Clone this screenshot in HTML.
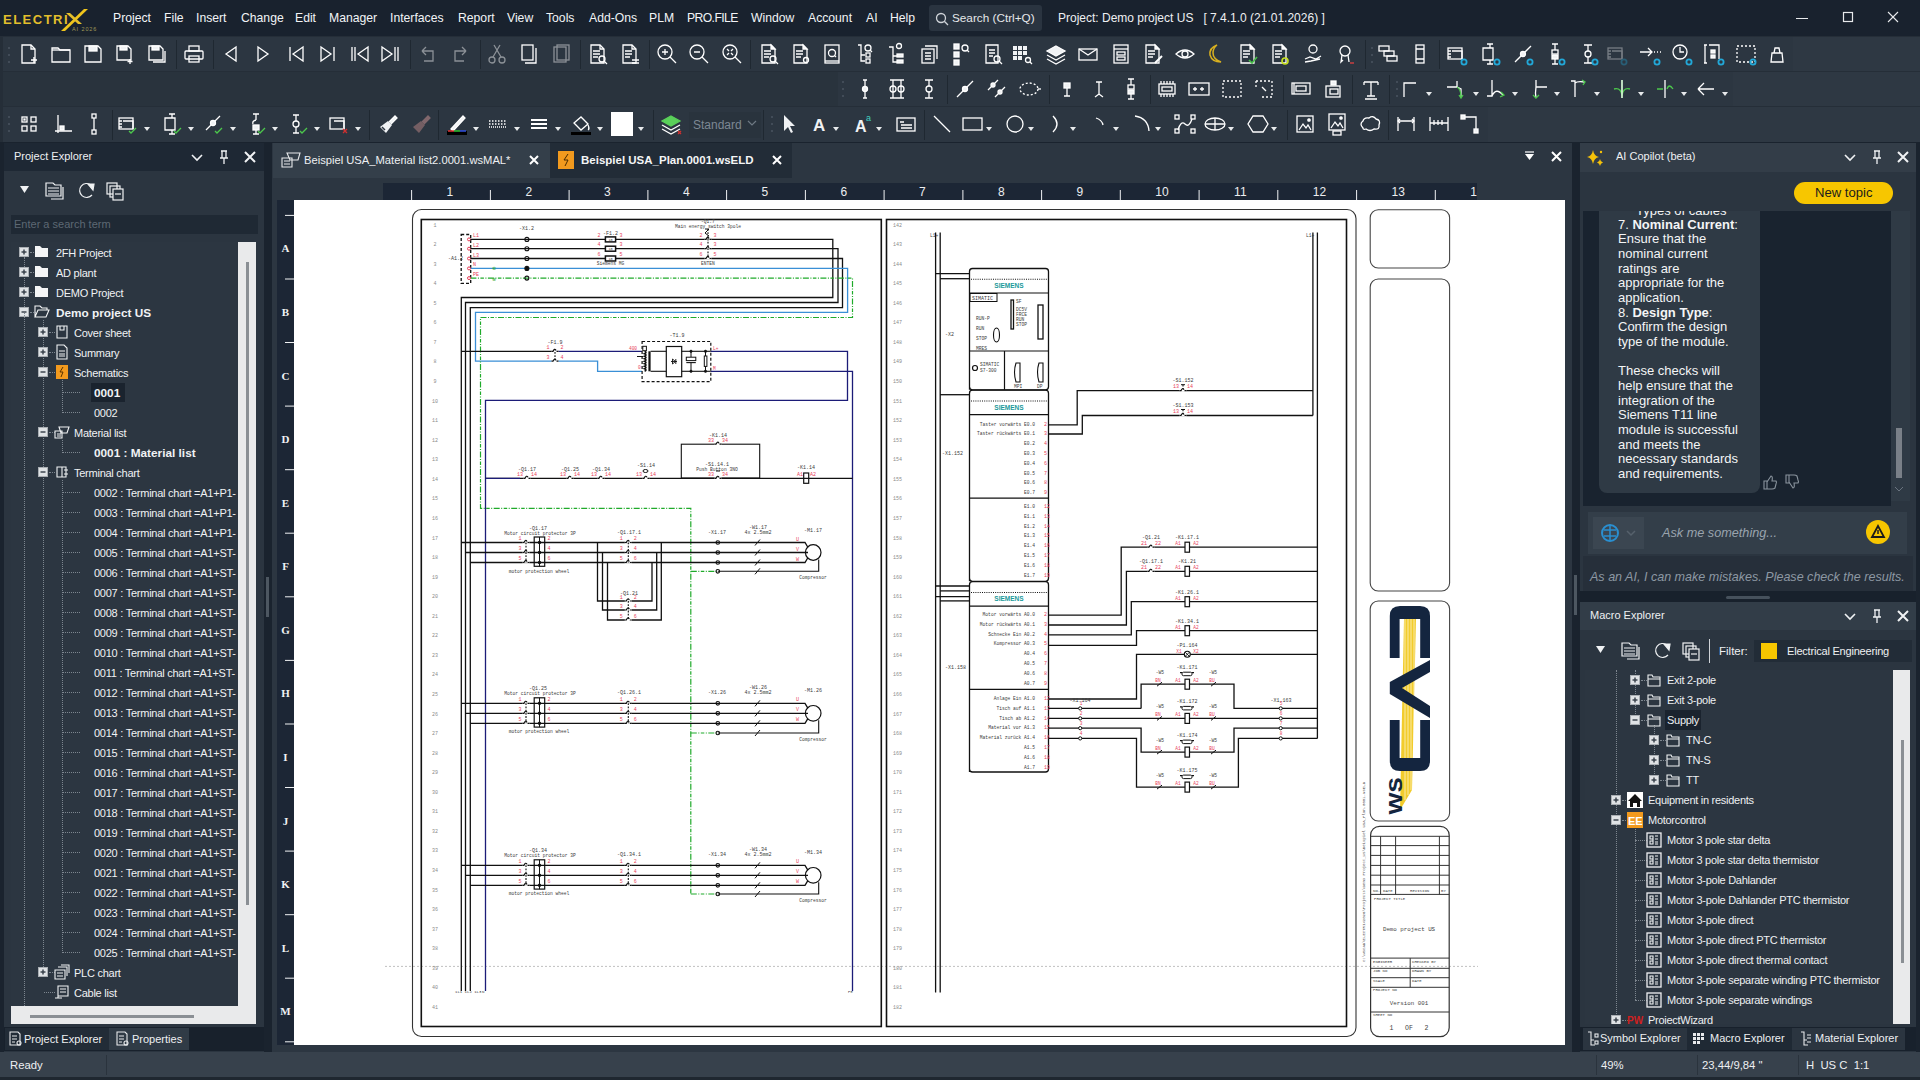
<!DOCTYPE html><html><head><meta charset="utf-8"><style>
*{margin:0;padding:0;box-sizing:border-box}
html,body{width:1920px;height:1080px;overflow:hidden;background:#2b3540;font-family:"Liberation Sans",sans-serif;color:#fff}
.a{position:absolute}
.t{position:absolute;white-space:nowrap;font-size:13px;line-height:16px}
svg{position:absolute;overflow:visible}
</style></head><body><div class="a" style="left:0px;top:0px;width:1920px;height:36px;background:#19222e;"></div><div class="t" style="left:113px;top:10.07px;font-size:12.2px;color:#f2f4f6;">Project</div><div class="t" style="left:164px;top:10.07px;font-size:12.2px;color:#f2f4f6;">File</div><div class="t" style="left:196px;top:10.07px;font-size:12.2px;color:#f2f4f6;">Insert</div><div class="t" style="left:241px;top:10.07px;font-size:12.2px;color:#f2f4f6;">Change</div><div class="t" style="left:295px;top:10.07px;font-size:12.2px;color:#f2f4f6;">Edit</div><div class="t" style="left:329px;top:10.07px;font-size:12.2px;color:#f2f4f6;">Manager</div><div class="t" style="left:390px;top:10.07px;font-size:12.2px;color:#f2f4f6;">Interfaces</div><div class="t" style="left:458px;top:10.07px;font-size:12.2px;color:#f2f4f6;">Report</div><div class="t" style="left:507px;top:10.07px;font-size:12.2px;color:#f2f4f6;">View</div><div class="t" style="left:546px;top:10.07px;font-size:12.2px;color:#f2f4f6;">Tools</div><div class="t" style="left:589px;top:10.07px;font-size:12.2px;color:#f2f4f6;">Add-Ons</div><div class="t" style="left:649px;top:10.07px;font-size:12.2px;color:#f2f4f6;">PLM</div><div class="t" style="left:687px;top:10.07px;font-size:12.2px;color:#f2f4f6;letter-spacing:-0.6px">PRO.FILE</div><div class="t" style="left:751px;top:10.07px;font-size:12.2px;color:#f2f4f6;">Window</div><div class="t" style="left:808px;top:10.07px;font-size:12.2px;color:#f2f4f6;">Account</div><div class="t" style="left:866px;top:10.07px;font-size:12.2px;color:#f2f4f6;">AI</div><div class="t" style="left:890px;top:10.07px;font-size:12.2px;color:#f2f4f6;">Help</div><div class="a" style="left:929px;top:5px;width:113px;height:26px;background:#2a3440;border-radius:3px"></div><div class="t" style="left:952px;top:10.23px;font-size:11.75px;color:#e6e8ea;">Search (Ctrl+Q)</div><svg style="left:935px;top:12px" width="14" height="14"><circle cx="6" cy="6" r="4.5" fill="none" stroke="#cfd3d8" stroke-width="1.3"/><line x1="9.3" y1="9.3" x2="13" y2="13" stroke="#cfd3d8" stroke-width="1.3"/></svg><div class="t" style="left:1058px;top:10.34px;font-size:12px;color:#eef0f2;">Project: Demo project US &nbsp;&nbsp;[ 7.4.1.0 (21.01.2026) ]</div><svg style="left:1796px;top:12px" width="120" height="14"><line x1="0" y1="6.5" x2="12" y2="6.5" stroke="#e8eaec" stroke-width="1"/><rect x="47.5" y="0.5" width="9" height="9" fill="none" stroke="#e8eaec" stroke-width="1.2"/><line x1="92" y1="0" x2="102" y2="10" stroke="#e8eaec" stroke-width="1.1"/><line x1="102" y1="0" x2="92" y2="10" stroke="#e8eaec" stroke-width="1.1"/></svg><svg style="left:0px;top:0px" width="110" height="36"><text x="3" y="24" font-family="Liberation Sans" font-weight="bold" font-size="13" fill="#e2be2c" letter-spacing="1.5">ELECTRI</text><path d="M61 31 L84 9 L88 9 L65 31 Z" fill="#f0c51c"/><path d="M66 13 L70 13 L82 24 L78 24 Z" fill="#e6c02a"/><text x="72" y="31" font-family="Liberation Sans" font-size="5.5" fill="#a09a58" letter-spacing="0.9">AI 2026</text></svg><div class="a" style="left:0px;top:36px;width:1920px;height:106px;background:#252e38;"></div><div class="a" style="left:3px;top:37px;width:1790px;height:34px;background:#2c3641;"></div><div class="a" style="left:1793px;top:37px;width:127px;height:34px;background:#2e3843;"></div><div class="a" style="left:3px;top:72px;width:835px;height:34px;background:#29333d;"></div><div class="a" style="left:838px;top:72px;width:895px;height:34px;background:#2c3641;"></div><div class="a" style="left:1733px;top:72px;width:187px;height:34px;background:#2e3843;"></div><div class="a" style="left:3px;top:107px;width:1485px;height:35px;background:#2c3641;"></div><div class="a" style="left:1488px;top:107px;width:432px;height:35px;background:#2e3843;"></div><svg style="left:7px;top:45px" width="4" height="20"><circle cx="2" cy="3" r="1" fill="#4a5560"/><circle cx="2" cy="10" r="1" fill="#4a5560"/><circle cx="2" cy="17" r="1" fill="#4a5560"/></svg><svg style="left:1370px;top:45px" width="4" height="20"><circle cx="2" cy="3" r="1" fill="#4a5560"/><circle cx="2" cy="10" r="1" fill="#4a5560"/><circle cx="2" cy="17" r="1" fill="#4a5560"/></svg><svg style="left:17px;top:42px;opacity:1" width="24" height="24" viewBox="0 0 24 24" fill="none" stroke="#ffffff" stroke-width="1.3"><path d="M5 3 H14 L18 7 V21 H5 Z"/><path d="M14 3 V7 H18"/><path d="M17 15 V21 M14 18 H20" stroke-width="1.4"/></svg><svg style="left:49px;top:42px;opacity:1" width="24" height="24" viewBox="0 0 24 24" fill="none" stroke="#ffffff" stroke-width="1.3"><path d="M3 6 H9 L11 8 H21 V20 H3 Z"/><path d="M3 8 H21"/></svg><svg style="left:81px;top:42px;opacity:1" width="24" height="24" viewBox="0 0 24 24" fill="none" stroke="#ffffff" stroke-width="1.3"><path d="M4 4 H17 L20 7 V20 H4 Z"/><rect x="8" y="4" width="8" height="5" fill="#f0f2f4"/></svg><svg style="left:113px;top:42px;opacity:1" width="24" height="24" viewBox="0 0 24 24" fill="none" stroke="#ffffff" stroke-width="1.3"><path d="M4 4 H15 L18 7 V18 H4 Z"/><rect x="7" y="4" width="7" height="4" fill="#f0f2f4"/><path d="M17 17 V22 M14.5 19.5 H19.5"/></svg><svg style="left:145px;top:42px;opacity:1" width="24" height="24" viewBox="0 0 24 24" fill="none" stroke="#ffffff" stroke-width="1.3"><path d="M4 4 H15 L18 7 V18 H4 Z"/><rect x="7" y="4" width="7" height="4" fill="#f0f2f4"/><path d="M20 9 V20 H8"/></svg><div class="a" style="left:176px;top:40px;width:1px;height:29px;background:#1f2831;"></div><svg style="left:182px;top:42px;opacity:1" width="24" height="24" viewBox="0 0 24 24" fill="none" stroke="#ffffff" stroke-width="1.3"><rect x="3" y="9" width="18" height="8" rx="1"/><rect x="7" y="4" width="10" height="5"/><rect x="7" y="14" width="10" height="6"/></svg><div class="a" style="left:213px;top:40px;width:1px;height:29px;background:#1f2831;"></div><svg style="left:219px;top:42px;opacity:1" width="24" height="24" viewBox="0 0 24 24" fill="none" stroke="#ffffff" stroke-width="1.3"><path d="M17 5 L7 12 L17 19 Z"/></svg><svg style="left:251px;top:42px;opacity:1" width="24" height="24" viewBox="0 0 24 24" fill="none" stroke="#ffffff" stroke-width="1.3"><path d="M7 5 L17 12 L7 19 Z"/></svg><svg style="left:284px;top:42px;opacity:1" width="24" height="24" viewBox="0 0 24 24" fill="none" stroke="#ffffff" stroke-width="1.3"><path d="M19 5 L9 12 L19 19 Z M6 5 V19"/></svg><svg style="left:316px;top:42px;opacity:1" width="24" height="24" viewBox="0 0 24 24" fill="none" stroke="#ffffff" stroke-width="1.3"><path d="M5 5 L15 12 L5 19 Z M18 5 V19"/></svg><svg style="left:347px;top:42px;opacity:1" width="24" height="24" viewBox="0 0 24 24" fill="none" stroke="#ffffff" stroke-width="1.3"><path d="M21 5 L11 12 L21 19 Z M5 5 V19 M8 5 V19"/></svg><svg style="left:379px;top:42px;opacity:1" width="24" height="24" viewBox="0 0 24 24" fill="none" stroke="#ffffff" stroke-width="1.3"><path d="M3 5 L13 12 L3 19 Z M16 5 V19 M19 5 V19"/></svg><div class="a" style="left:410px;top:40px;width:1px;height:29px;background:#1f2831;"></div><svg style="left:416px;top:42px;opacity:0.45" width="24" height="24" viewBox="0 0 24 24" fill="none" stroke="#ffffff" stroke-width="1.3"><path d="M6 9 L10 5 M6 9 L10 13 M6 9 H17 V19 H8"/></svg><svg style="left:448px;top:42px;opacity:0.45" width="24" height="24" viewBox="0 0 24 24" fill="none" stroke="#ffffff" stroke-width="1.3"><path d="M18 9 L14 5 M18 9 L14 13 M18 9 H7 V19 H16"/></svg><div class="a" style="left:480px;top:40px;width:1px;height:29px;background:#1f2831;"></div><svg style="left:485px;top:42px;opacity:0.45" width="24" height="24" viewBox="0 0 24 24" fill="none" stroke="#ffffff" stroke-width="1.3"><circle cx="7" cy="18" r="3"/><circle cx="17" cy="18" r="3"/><path d="M8 15 L15 3 M16 15 L9 3"/></svg><svg style="left:517px;top:42px;opacity:1" width="24" height="24" viewBox="0 0 24 24" fill="none" stroke="#ffffff" stroke-width="1.3"><rect x="5" y="3" width="11" height="15"/><path d="M19 6 V21 H8"/></svg><svg style="left:549px;top:42px;opacity:0.45" width="24" height="24" viewBox="0 0 24 24" fill="none" stroke="#ffffff" stroke-width="1.3"><rect x="5" y="5" width="12" height="15"/><rect x="8" y="3" width="12" height="15"/></svg><div class="a" style="left:580px;top:40px;width:1px;height:29px;background:#1f2831;"></div><svg style="left:586px;top:42px;opacity:1" width="24" height="24" viewBox="0 0 24 24" fill="none" stroke="#ffffff" stroke-width="1.3"><path d="M5 3 H14 L18 7 V21 H5 Z"/><path d="M14 3 V7 H18"/><path d="M7 9 H14 M7 12 H14 M7 15 H12"/><circle cx="16" cy="17" r="3"/><path d="M18 19 L21 22"/></svg><svg style="left:618px;top:42px;opacity:1" width="24" height="24" viewBox="0 0 24 24" fill="none" stroke="#ffffff" stroke-width="1.3"><path d="M5 3 H14 L18 7 V21 H5 Z"/><path d="M14 3 V7 H18"/><path d="M7 9 H14 M7 12 H14 M7 15 H12"/><path d="M14 18 H21 M14 21 H21"/></svg><div class="a" style="left:649px;top:40px;width:1px;height:29px;background:#1f2831;"></div><svg style="left:655px;top:42px;opacity:1" width="24" height="24" viewBox="0 0 24 24" fill="none" stroke="#ffffff" stroke-width="1.3"><circle cx="10" cy="10" r="7"/><path d="M15 15 L21 21 M7 10 H13 M10 7 V13"/></svg><svg style="left:687px;top:42px;opacity:1" width="24" height="24" viewBox="0 0 24 24" fill="none" stroke="#ffffff" stroke-width="1.3"><circle cx="10" cy="10" r="7"/><path d="M15 15 L21 21 M7 10 H13"/></svg><svg style="left:720px;top:42px;opacity:1" width="24" height="24" viewBox="0 0 24 24" fill="none" stroke="#ffffff" stroke-width="1.3"><circle cx="10" cy="10" r="7"/><path d="M15 15 L21 21 M7 7 L9 9 M13 7 L11 9 M7 13 L9 11 M13 13 L11 11"/></svg><div class="a" style="left:750px;top:40px;width:1px;height:29px;background:#1f2831;"></div><svg style="left:757px;top:42px;opacity:1" width="24" height="24" viewBox="0 0 24 24" fill="none" stroke="#ffffff" stroke-width="1.3"><path d="M5 3 H14 L18 7 V21 H5 Z"/><path d="M14 3 L18 7 H14 Z" fill="#f0f2f4"/><path d="M7 9 H14 M7 12 H14 M7 15 H12"/><circle cx="16" cy="17" r="3"/><path d="M18 19 L21 22"/></svg><svg style="left:789px;top:42px;opacity:1" width="24" height="24" viewBox="0 0 24 24" fill="none" stroke="#ffffff" stroke-width="1.3"><path d="M5 3 H14 L18 7 V21 H5 Z"/><path d="M14 3 L18 7 H14 Z" fill="#f0f2f4"/><path d="M7 9 H14 M7 12 H14 M7 15 H12"/><circle cx="17" cy="18" r="2.5"/></svg><svg style="left:820px;top:42px;opacity:1" width="24" height="24" viewBox="0 0 24 24" fill="none" stroke="#ffffff" stroke-width="1.3"><rect x="5" y="3" width="14" height="18"/><path d="M5 19 H19"/><circle cx="12" cy="11" r="3.5"/><path d="M14.5 13.5 L16 15"/></svg><svg style="left:852px;top:42px;opacity:1" width="24" height="24" viewBox="0 0 24 24" fill="none" stroke="#ffffff" stroke-width="1.3"><path d="M6 3 H9 V19 H13 M9 13 H13"/><rect x="14" y="11" width="4" height="4"/><rect x="14" y="17" width="4" height="4"/><circle cx="16" cy="6" r="3"/><path d="M18 8 L20 10"/></svg><svg style="left:884px;top:42px;opacity:1" width="24" height="24" viewBox="0 0 24 24" fill="none" stroke="#ffffff" stroke-width="1.3"><path d="M5 5 H9 V20 H13 M9 14 H13"/><rect x="13" y="12" width="6" height="3" fill="#f0f2f4"/><rect x="13" y="18" width="6" height="3" fill="#f0f2f4"/><circle cx="15" cy="4" r="2.5"/></svg><svg style="left:917px;top:42px;opacity:1" width="24" height="24" viewBox="0 0 24 24" fill="none" stroke="#ffffff" stroke-width="1.3"><rect x="5" y="7" width="12" height="14"/><path d="M8 4 H20 V17"/><path d="M8 11 H14 M8 14 H14 M8 17 H14"/></svg><svg style="left:949px;top:42px;opacity:1" width="24" height="24" viewBox="0 0 24 24" fill="none" stroke="#ffffff" stroke-width="1.3"><rect x="5" y="2" width="5" height="5" fill="#f0f2f4"/><rect x="5" y="10" width="5" height="5" fill="#f0f2f4"/><rect x="5" y="18" width="5" height="5" fill="#f0f2f4"/><circle cx="16" cy="6" r="3"/><path d="M18 8 L20 10"/></svg><svg style="left:981px;top:42px;opacity:1" width="24" height="24" viewBox="0 0 24 24" fill="none" stroke="#ffffff" stroke-width="1.3"><path d="M5 3 H17 V21 H5 Z"/><path d="M8 8 H14 M8 11 H14 M8 14 H12"/><circle cx="16" cy="17" r="3"/><path d="M18 19 L21 22"/></svg><svg style="left:1010px;top:42px;opacity:1" width="24" height="24" viewBox="0 0 24 24" fill="none" stroke="#ffffff" stroke-width="1.3"><g fill="#f0f2f4" stroke="none"><rect x="3" y="4" width="4" height="4"/><rect x="8" y="4" width="4" height="4"/><rect x="13" y="4" width="4" height="4"/><rect x="3" y="9" width="4" height="4"/><rect x="8" y="9" width="4" height="4"/><rect x="13" y="9" width="4" height="4"/><rect x="3" y="14" width="4" height="4"/><rect x="8" y="14" width="4" height="4"/></g><circle cx="18" cy="18" r="2.5"/><path d="M20 20 L22 22"/></svg><svg style="left:1044px;top:42px;opacity:1" width="24" height="24" viewBox="0 0 24 24" fill="none" stroke="#ffffff" stroke-width="1.3"><path d="M12 4 L21 9 L12 14 L3 9 Z" fill="#f0f2f4"/><path d="M3 13 L12 18 L21 13 M3 17 L12 22 L21 17"/></svg><svg style="left:1076px;top:42px;opacity:1" width="24" height="24" viewBox="0 0 24 24" fill="none" stroke="#ffffff" stroke-width="1.3"><rect x="3" y="7" width="18" height="11"/><path d="M3 7 L12 13 L21 7"/></svg><svg style="left:1109px;top:42px;opacity:1" width="24" height="24" viewBox="0 0 24 24" fill="none" stroke="#ffffff" stroke-width="1.3"><rect x="5" y="3" width="14" height="18"/><path d="M5 7 H19"/><rect x="8" y="10" width="8" height="3"/><rect x="8" y="15" width="8" height="3"/></svg><svg style="left:1141px;top:42px;opacity:1" width="24" height="24" viewBox="0 0 24 24" fill="none" stroke="#ffffff" stroke-width="1.3"><path d="M5 3 H14 L18 7 V21 H5 Z"/><path d="M14 3 L18 7 H14 Z" fill="#f0f2f4"/><path d="M7 9 H14 M7 12 H14 M7 15 H12"/><path d="M14 21 L21 14" stroke-width="2"/></svg><svg style="left:1173px;top:42px;opacity:1" width="24" height="24" viewBox="0 0 24 24" fill="none" stroke="#ffffff" stroke-width="1.3"><path d="M3 12 Q12 4 21 12 Q12 20 3 12 Z"/><circle cx="12" cy="12" r="3"/></svg><svg style="left:1203px;top:42px;opacity:1" width="24" height="24" viewBox="0 0 24 24" fill="none" stroke="#ffffff" stroke-width="1.3"><path d="M14 3 Q6 6 7 13 Q9 20 18 20 Q10 17 10 11 Q10 6 14 3 Z" stroke="#d8b020" fill="none" stroke-width="1.5"/></svg><svg style="left:1236px;top:42px;opacity:1" width="24" height="24" viewBox="0 0 24 24" fill="none" stroke="#ffffff" stroke-width="1.3"><path d="M5 3 H14 L18 7 V21 H5 Z"/><path d="M14 3 L18 7 H14 Z" fill="#f0f2f4"/><path d="M7 9 H14 M7 12 H14 M7 15 H12"/><path d="M13 18 L16 21 L21 15" stroke="#49c04a" stroke-width="1.6"/></svg><svg style="left:1268px;top:42px;opacity:1" width="24" height="24" viewBox="0 0 24 24" fill="none" stroke="#ffffff" stroke-width="1.3"><path d="M5 3 H14 L18 7 V21 H5 Z"/><path d="M14 3 L18 7 H14 Z" fill="#f0f2f4"/><path d="M7 9 H14 M7 12 H14 M7 15 H12"/><circle cx="17" cy="19" r="3" stroke="#c8e020" stroke-width="1.6"/></svg><svg style="left:1301px;top:42px;opacity:1" width="24" height="24" viewBox="0 0 24 24" fill="none" stroke="#ffffff" stroke-width="1.3"><circle cx="12" cy="7" r="4"/><path d="M4 17 L9 15 L15 17 L20 14 M4 20 L10 19 L19 17"/></svg><svg style="left:1333px;top:42px;opacity:1" width="24" height="24" viewBox="0 0 24 24" fill="none" stroke="#ffffff" stroke-width="1.3"><circle cx="12" cy="9" r="5"/><path d="M9 13 L8 20 L10 18 M15 13 L16 20"/><path d="M17 21 H21" stroke="#e04040"/></svg><div class="a" style="left:1365px;top:40px;width:1px;height:29px;background:#1f2831;"></div><svg style="left:1376px;top:42px;opacity:1" width="24" height="24" viewBox="0 0 24 24" fill="none" stroke="#ffffff" stroke-width="1.3"><rect x="3" y="4" width="10" height="5"/><rect x="8" y="9" width="10" height="5"/><rect x="11" y="14" width="10" height="5"/></svg><svg style="left:1408px;top:42px;opacity:1" width="24" height="24" viewBox="0 0 24 24" fill="none" stroke="#ffffff" stroke-width="1.3"><rect x="8" y="3" width="8" height="18"/><path d="M8 7 H16 M8 17 H16"/></svg><div class="a" style="left:1439px;top:40px;width:1px;height:29px;background:#1f2831;"></div><svg style="left:1445px;top:42px;opacity:1" width="24" height="24" viewBox="0 0 24 24" fill="none" stroke="#ffffff" stroke-width="1.3"><rect x="3" y="6" width="14" height="11"/><path d="M7 9 H17 V17"/><path d="M3 9 H6 M3 12 H6 M3 15 H6"/><circle cx="19" cy="20" r="2.6" stroke="#22a8d8" stroke-width="1.8"/></svg><svg style="left:1478px;top:42px;opacity:1" width="24" height="24" viewBox="0 0 24 24" fill="none" stroke="#ffffff" stroke-width="1.3"><path d="M12 2 V6 M9 2 H15 M5 6 H15 V18 H5 Z M12 18 V22 M9 22 H15"/><circle cx="19" cy="20" r="2.6" stroke="#22a8d8" stroke-width="1.8"/></svg><svg style="left:1511px;top:42px;opacity:1" width="24" height="24" viewBox="0 0 24 24" fill="none" stroke="#ffffff" stroke-width="1.3"><path d="M4 20 L20 4"/><circle cx="12" cy="12" r="2.5" fill="#f0f2f4"/><circle cx="19" cy="20" r="2.6" stroke="#22a8d8" stroke-width="1.8"/></svg><svg style="left:1543px;top:42px;opacity:1" width="24" height="24" viewBox="0 0 24 24" fill="none" stroke="#ffffff" stroke-width="1.3"><path d="M12 2 V8 M9 2 H15 M12 16 V22 M9 22 H15"/><rect x="9" y="8" width="6" height="4"/><rect x="9" y="13" width="6" height="4" fill="#f0f2f4"/><circle cx="19" cy="20" r="2.6" stroke="#22a8d8" stroke-width="1.8"/></svg><svg style="left:1576px;top:42px;opacity:1" width="24" height="24" viewBox="0 0 24 24" fill="none" stroke="#ffffff" stroke-width="1.3"><path d="M12 3 V9 M12 15 V21 M8 3 H16 M8 21 H16"/><circle cx="12" cy="12" r="3"/><circle cx="19" cy="20" r="2.6" stroke="#22a8d8" stroke-width="1.8"/></svg><svg style="left:1605px;top:42px;opacity:0.35" width="24" height="24" viewBox="0 0 24 24" fill="none" stroke="#ffffff" stroke-width="1.3"><rect x="3" y="6" width="14" height="11"/><path d="M7 9 H17 V17"/><path d="M3 9 H6 M3 12 H6 M3 15 H6"/><circle cx="19" cy="20" r="2.6" stroke="#22a8d8" stroke-width="1.8"/></svg><svg style="left:1638px;top:42px;opacity:1" width="24" height="24" viewBox="0 0 24 24" fill="none" stroke="#ffffff" stroke-width="1.3"><path d="M2 10 H14 M10 6 L14 10 L10 14 M16 10 H17 M19 10 H20 M22 10 H23"/><circle cx="19" cy="20" r="2.6" stroke="#22a8d8" stroke-width="1.8"/></svg><svg style="left:1670px;top:42px;opacity:1" width="24" height="24" viewBox="0 0 24 24" fill="none" stroke="#ffffff" stroke-width="1.3"><circle cx="10" cy="10" r="7"/><path d="M10 5 V10 H14"/><circle cx="19" cy="20" r="2.6" stroke="#22a8d8" stroke-width="1.8"/></svg><svg style="left:1702px;top:42px;opacity:1" width="24" height="24" viewBox="0 0 24 24" fill="none" stroke="#ffffff" stroke-width="1.3"><path d="M3 3 V21 M2 3 H5 M2 21 H5 M7 3 H17 V17"/><rect x="9" y="8" width="4" height="3" fill="#f0f2f4"/><rect x="9" y="13" width="4" height="3" fill="#f0f2f4"/><circle cx="19" cy="20" r="2.6" stroke="#22a8d8" stroke-width="1.8"/></svg><svg style="left:1734px;top:42px;opacity:1" width="24" height="24" viewBox="0 0 24 24" fill="none" stroke="#ffffff" stroke-width="1.3"><rect x="3" y="4" width="18" height="16" stroke-dasharray="2 2"/><circle cx="19" cy="20" r="2.6" stroke="#22a8d8" stroke-width="1.8"/></svg><svg style="left:1765px;top:42px;opacity:1" width="24" height="24" viewBox="0 0 24 24" fill="none" stroke="#ffffff" stroke-width="1.3"><path d="M7 11 H17 L18 20 H6 Z M9 11 L10 6 H14 L15 11"/></svg><svg style="left:841px;top:79px" width="4" height="20"><circle cx="2" cy="3" r="1" fill="#4a5560"/><circle cx="2" cy="10" r="1" fill="#4a5560"/><circle cx="2" cy="17" r="1" fill="#4a5560"/></svg><svg style="left:853px;top:77px;opacity:1" width="24" height="24" viewBox="0 0 24 24" fill="none" stroke="#ffffff" stroke-width="1.3"><path d="M12 3 V21"/><circle cx="12" cy="12" r="2.5" fill="#f0f2f4"/><path d="M10 3 H14 M10 21 H14"/></svg><svg style="left:885px;top:77px;opacity:1" width="24" height="24" viewBox="0 0 24 24" fill="none" stroke="#ffffff" stroke-width="1.3"><path d="M8 3 V21 M16 3 V21 M5 3 H19 M5 21 H19"/><circle cx="8" cy="12" r="3"/><circle cx="16" cy="12" r="3"/></svg><svg style="left:917px;top:77px;opacity:1" width="24" height="24" viewBox="0 0 24 24" fill="none" stroke="#ffffff" stroke-width="1.3"><path d="M12 3 V9 M12 15 V21 M8 3 H16 M8 21 H16"/><circle cx="12" cy="12" r="3"/></svg><div class="a" style="left:947px;top:75px;width:1px;height:29px;background:#1f2831;"></div><svg style="left:953px;top:77px;opacity:1" width="24" height="24" viewBox="0 0 24 24" fill="none" stroke="#ffffff" stroke-width="1.3"><path d="M4 20 L20 4"/><circle cx="12" cy="12" r="2.5" fill="#f0f2f4"/></svg><svg style="left:985px;top:77px;opacity:1" width="24" height="24" viewBox="0 0 24 24" fill="none" stroke="#ffffff" stroke-width="1.3"><path d="M3 13 L13 3 M10 20 L20 10"/><circle cx="8" cy="8" r="2" fill="#f0f2f4"/><circle cx="15" cy="15" r="2" fill="#f0f2f4"/></svg><svg style="left:1018px;top:77px;opacity:1" width="24" height="24" viewBox="0 0 24 24" fill="none" stroke="#ffffff" stroke-width="1.3"><ellipse cx="11" cy="12" rx="9" ry="6" stroke-dasharray="2 2"/><path d="M20 12 H23"/></svg><div class="a" style="left:1049px;top:75px;width:1px;height:29px;background:#1f2831;"></div><svg style="left:1055px;top:77px;opacity:1" width="24" height="24" viewBox="0 0 24 24" fill="none" stroke="#ffffff" stroke-width="1.3"><rect x="9" y="6" width="6" height="5" fill="#f0f2f4"/><path d="M12 11 V19 M9 19 H15"/></svg><svg style="left:1087px;top:77px;opacity:1" width="24" height="24" viewBox="0 0 24 24" fill="none" stroke="#ffffff" stroke-width="1.3"><path d="M12 5 V17 M9 5 H15 M8 20 L12 17 L16 20"/></svg><svg style="left:1119px;top:77px;opacity:1" width="24" height="24" viewBox="0 0 24 24" fill="none" stroke="#ffffff" stroke-width="1.3"><path d="M12 2 V8 M9 2 H15 M12 16 V22 M9 22 H15"/><rect x="9" y="8" width="6" height="4"/><rect x="9" y="13" width="6" height="4" fill="#f0f2f4"/></svg><div class="a" style="left:1150px;top:75px;width:1px;height:29px;background:#1f2831;"></div><svg style="left:1155px;top:77px;opacity:1" width="24" height="24" viewBox="0 0 24 24" fill="none" stroke="#ffffff" stroke-width="1.3"><rect x="4" y="7" width="16" height="10"/><rect x="7" y="10" width="10" height="4"/><path d="M6 4 V7 M9 4 V7 M12 4 V7 M15 4 V7 M18 4 V7 M6 17 V20 M9 17 V20 M12 17 V20 M15 17 V20 M18 17 V20"/></svg><svg style="left:1187px;top:77px;opacity:1" width="24" height="24" viewBox="0 0 24 24" fill="none" stroke="#ffffff" stroke-width="1.3"><rect x="2" y="6" width="20" height="12"/><path d="M6 12 H10 M8 10 V14 M13 12 H17 M15 10 V14"/></svg><svg style="left:1220px;top:77px;opacity:1" width="24" height="24" viewBox="0 0 24 24" fill="none" stroke="#ffffff" stroke-width="1.3"><rect x="3" y="4" width="18" height="16" stroke-dasharray="2 2"/></svg><svg style="left:1252px;top:77px;opacity:1" width="24" height="24" viewBox="0 0 24 24" fill="none" stroke="#ffffff" stroke-width="1.3"><path d="M4 4 H20 V20 H10 M4 4 V12" stroke-dasharray="2 2"/><path d="M10 10 L14 14"/></svg><div class="a" style="left:1283px;top:75px;width:1px;height:29px;background:#1f2831;"></div><svg style="left:1289px;top:77px;opacity:1" width="24" height="24" viewBox="0 0 24 24" fill="none" stroke="#ffffff" stroke-width="1.3"><rect x="3" y="6" width="18" height="11"/><rect x="7" y="9" width="10" height="5"/><path d="M5 6 V17"/></svg><svg style="left:1321px;top:77px;opacity:1" width="24" height="24" viewBox="0 0 24 24" fill="none" stroke="#ffffff" stroke-width="1.3"><rect x="5" y="9" width="14" height="11"/><rect x="9" y="12" width="8" height="5"/><rect x="10" y="4" width="5" height="4" fill="#f0f2f4"/></svg><div class="a" style="left:1352px;top:75px;width:1px;height:29px;background:#1f2831;"></div><svg style="left:1359px;top:77px;opacity:1" width="24" height="24" viewBox="0 0 24 24" fill="none" stroke="#ffffff" stroke-width="1.3"><path d="M5 5 H19 M12 5 V19 M8 19 H16 M5 5 V8 M19 5 V8 M6 22 H18"/></svg><div class="a" style="left:1389px;top:75px;width:1px;height:29px;background:#1f2831;"></div><svg style="left:1395px;top:79px" width="4" height="20"><circle cx="2" cy="3" r="1" fill="#4a5560"/><circle cx="2" cy="10" r="1" fill="#4a5560"/><circle cx="2" cy="17" r="1" fill="#4a5560"/></svg><svg style="left:1398px;top:77px;opacity:1" width="24" height="24" viewBox="0 0 24 24" fill="none" stroke="#ffffff" stroke-width="1.3"><path d="M6 20 V6 H18"/></svg><svg style="left:1426px;top:92px" width="6" height="5"><path d="M0 0 L6 0 L3 4 Z" fill="#e8eaec"/></svg><svg style="left:1445px;top:77px;opacity:1" width="24" height="24" viewBox="0 0 24 24" fill="none" stroke="#ffffff" stroke-width="1.3"><path d="M2 10 H12 V4 M12 10 L16 12 V20" /><path d="M14 18 L16 21 L18 18" stroke="#4cc84c"/><path d="M12 10 Q16 12 16 20" stroke="#4cc84c"/></svg><svg style="left:1473px;top:92px" width="6" height="5"><path d="M0 0 L6 0 L3 4 Z" fill="#e8eaec"/></svg><svg style="left:1484px;top:77px;opacity:1" width="24" height="24" viewBox="0 0 24 24" fill="none" stroke="#ffffff" stroke-width="1.3"><path d="M8 3 V19 H3 M8 19 Q12 10 19 18"/><path d="M17 15 L20 18 L16 20" stroke="#4cc84c"/></svg><svg style="left:1512px;top:92px" width="6" height="5"><path d="M0 0 L6 0 L3 4 Z" fill="#e8eaec"/></svg><svg style="left:1526px;top:77px;opacity:1" width="24" height="24" viewBox="0 0 24 24" fill="none" stroke="#ffffff" stroke-width="1.3"><path d="M10 3 V10 H21 M10 10 Q9 16 10 21"/><path d="M7 18 L10 21 L13 18" stroke="#4cc84c"/></svg><svg style="left:1554px;top:92px" width="6" height="5"><path d="M0 0 L6 0 L3 4 Z" fill="#e8eaec"/></svg><svg style="left:1566px;top:77px;opacity:1" width="24" height="24" viewBox="0 0 24 24" fill="none" stroke="#ffffff" stroke-width="1.3"><path d="M5 4 H9 V20 M9 6 Q11 4 19 5"/><path d="M16 3 L19 5 L17 8" stroke="#4cc84c"/></svg><svg style="left:1594px;top:92px" width="6" height="5"><path d="M0 0 L6 0 L3 4 Z" fill="#e8eaec"/></svg><svg style="left:1610px;top:77px;opacity:1" width="24" height="24" viewBox="0 0 24 24" fill="none" stroke="#ffffff" stroke-width="1.3"><path d="M12 3 V21 M12 21 Q12 10 4 12 M12 21 Q12 10 20 12" stroke="#4cc84c"/><path d="M12 3 V21" /></svg><svg style="left:1638px;top:92px" width="6" height="5"><path d="M0 0 L6 0 L3 4 Z" fill="#e8eaec"/></svg><svg style="left:1653px;top:77px;opacity:1" width="24" height="24" viewBox="0 0 24 24" fill="none" stroke="#ffffff" stroke-width="1.3"><path d="M12 3 V21"/><path d="M4 12 H10 M14 12 Q16 6 20 12" stroke="#4cc84c"/></svg><svg style="left:1681px;top:92px" width="6" height="5"><path d="M0 0 L6 0 L3 4 Z" fill="#e8eaec"/></svg><svg style="left:1694px;top:77px;opacity:1" width="24" height="24" viewBox="0 0 24 24" fill="none" stroke="#ffffff" stroke-width="1.3"><path d="M4 12 H20 M4 12 L10 6 M4 12 L10 18"/></svg><svg style="left:1722px;top:92px" width="6" height="5"><path d="M0 0 L6 0 L3 4 Z" fill="#e8eaec"/></svg><svg style="left:7px;top:114px" width="4" height="20"><circle cx="2" cy="3" r="1" fill="#4a5560"/><circle cx="2" cy="10" r="1" fill="#4a5560"/><circle cx="2" cy="17" r="1" fill="#4a5560"/></svg><svg style="left:17px;top:112px;opacity:1" width="24" height="24" viewBox="0 0 24 24" fill="none" stroke="#ffffff" stroke-width="1.3"><rect x="5" y="5" width="5" height="5"/><rect x="14" y="5" width="5" height="5"/><rect x="5" y="14" width="5" height="5"/><rect x="14" y="14" width="5" height="5"/><rect x="7" y="7" width="1" height="1"/></svg><svg style="left:51px;top:112px;opacity:1" width="24" height="24" viewBox="0 0 24 24" fill="none" stroke="#ffffff" stroke-width="1.3"><path d="M7 3 V21 M4 19 H21"/><rect x="9" y="14" width="4" height="4" fill="#f0f2f4"/></svg><svg style="left:82px;top:112px;opacity:1" width="24" height="24" viewBox="0 0 24 24" fill="none" stroke="#ffffff" stroke-width="1.3"><path d="M12 6 V18"/><rect x="10" y="2" width="4" height="4"/><rect x="10" y="18" width="4" height="4"/></svg><div class="a" style="left:112px;top:110px;width:1px;height:30px;background:#1f2831;"></div><svg style="left:116px;top:112px;opacity:1" width="24" height="24" viewBox="0 0 24 24" fill="none" stroke="#ffffff" stroke-width="1.3"><rect x="3" y="6" width="14" height="11"/><path d="M7 9 H17 V17"/><path d="M3 9 H6 M3 12 H6 M3 15 H6"/><path d="M13 19 L15 21 L20 16" stroke="#4cc84c"/></svg><svg style="left:144px;top:127px" width="6" height="5"><path d="M0 0 L6 0 L3 4 Z" fill="#e8eaec"/></svg><svg style="left:160px;top:112px;opacity:1" width="24" height="24" viewBox="0 0 24 24" fill="none" stroke="#ffffff" stroke-width="1.3"><path d="M12 2 V6 M9 2 H15 M5 6 H15 V18 H5 Z M12 18 V22 M9 22 H15"/><path d="M14 19 L16 21 L21 16" stroke="#4cc84c"/></svg><svg style="left:188px;top:127px" width="6" height="5"><path d="M0 0 L6 0 L3 4 Z" fill="#e8eaec"/></svg><svg style="left:202px;top:112px;opacity:1" width="24" height="24" viewBox="0 0 24 24" fill="none" stroke="#ffffff" stroke-width="1.3"><path d="M4 18 L18 4"/><circle cx="11" cy="11" r="2.5" fill="#f0f2f4"/><path d="M13 19 L15 21 L20 16" stroke="#4cc84c"/></svg><svg style="left:230px;top:127px" width="6" height="5"><path d="M0 0 L6 0 L3 4 Z" fill="#e8eaec"/></svg><svg style="left:244px;top:112px;opacity:1" width="24" height="24" viewBox="0 0 24 24" fill="none" stroke="#ffffff" stroke-width="1.3"><path d="M12 2 V8 M9 2 H15 M12 8 Q8 9 9 12"/><rect x="9" y="13" width="6" height="5" fill="#f0f2f4"/><path d="M12 18 V22 M9 22 H15"/><path d="M14 19 L16 21 L21 16" stroke="#4cc84c"/></svg><svg style="left:272px;top:127px" width="6" height="5"><path d="M0 0 L6 0 L3 4 Z" fill="#e8eaec"/></svg><svg style="left:286px;top:112px;opacity:1" width="24" height="24" viewBox="0 0 24 24" fill="none" stroke="#ffffff" stroke-width="1.3"><path d="M10 3 V9 M10 15 V21 M7 3 H13 M7 21 H13"/><circle cx="10" cy="12" r="3"/><path d="M14 19 L16 21 L21 16" stroke="#4cc84c"/></svg><svg style="left:314px;top:127px" width="6" height="5"><path d="M0 0 L6 0 L3 4 Z" fill="#e8eaec"/></svg><svg style="left:327px;top:112px;opacity:1" width="24" height="24" viewBox="0 0 24 24" fill="none" stroke="#ffffff" stroke-width="1.3"><rect x="3" y="6" width="14" height="11"/><path d="M7 9 H17 V17"/><path d="M16 17 L20 21 M20 17 L16 21" stroke="#d03030"/></svg><svg style="left:355px;top:127px" width="6" height="5"><path d="M0 0 L6 0 L3 4 Z" fill="#e8eaec"/></svg><div class="a" style="left:369px;top:110px;width:1px;height:30px;background:#1f2831;"></div><svg style="left:375px;top:112px;opacity:1" width="24" height="24" viewBox="0 0 24 24" fill="none" stroke="#ffffff" stroke-width="1.3"><path d="M14 10 L20 4 L22 6 L16 12" fill="#f0f2f4"/><path d="M13 9 L17 13 L11 21 L5 15 Z" fill="#f0f2f4" stroke="none"/><path d="M7 15 L10 18" stroke="#2c3641" stroke-width="1.5"/></svg><svg style="left:408px;top:112px;opacity:1" width="24" height="24" viewBox="0 0 24 24" fill="none" stroke="#ffffff" stroke-width="1.3"><g opacity="0.55"><path d="M14 10 L20 4 L22 6 L16 12" fill="#c89090" stroke="#c89090"/><path d="M13 9 L17 13 L11 21 L5 15 Z" fill="#b08080" stroke="none"/></g></svg><div class="a" style="left:438px;top:110px;width:1px;height:30px;background:#1f2831;"></div><svg style="left:445px;top:112px;opacity:1" width="24" height="24" viewBox="0 0 24 24" fill="none" stroke="#ffffff" stroke-width="1.3"><path d="M6 17 L18 4 L20 6 L8 19 Z" fill="#f0f2f4"/><rect x="2" y="19" width="20" height="4" fill="#000" stroke="none"/><path d="M3 19 H9" stroke="#e03030" stroke-width="1.5"/><path d="M9 19 H15" stroke="#30c030" stroke-width="1.5"/><path d="M15 19 H21" stroke="#3050e0" stroke-width="1.5"/></svg><svg style="left:473px;top:127px" width="6" height="5"><path d="M0 0 L6 0 L3 4 Z" fill="#e8eaec"/></svg><svg style="left:486px;top:112px;opacity:1" width="24" height="24" viewBox="0 0 24 24" fill="none" stroke="#ffffff" stroke-width="1.3"><path d="M3 9 H21 M3 12 H21" stroke-dasharray="1.5 1.5"/><path d="M3 15 H21" stroke-dasharray="1 1"/></svg><svg style="left:514px;top:127px" width="6" height="5"><path d="M0 0 L6 0 L3 4 Z" fill="#e8eaec"/></svg><svg style="left:527px;top:112px;opacity:1" width="24" height="24" viewBox="0 0 24 24" fill="none" stroke="#ffffff" stroke-width="1.3"><path d="M4 8 H20 M4 12 H20 M4 16 H20" stroke-width="1.8"/></svg><svg style="left:555px;top:127px" width="6" height="5"><path d="M0 0 L6 0 L3 4 Z" fill="#e8eaec"/></svg><svg style="left:569px;top:112px;opacity:1" width="24" height="24" viewBox="0 0 24 24" fill="none" stroke="#ffffff" stroke-width="1.3"><path d="M5 11 L12 5 L19 12 L12 18 Z"/><path d="M19 13 Q21 17 19 18" fill="#f0f2f4"/><rect x="2" y="20" width="20" height="3" fill="#000" stroke="none"/></svg><svg style="left:597px;top:127px" width="6" height="5"><path d="M0 0 L6 0 L3 4 Z" fill="#e8eaec"/></svg><svg style="left:610px;top:112px;opacity:1" width="24" height="24" viewBox="0 0 24 24" fill="none" stroke="#ffffff" stroke-width="1.3"><rect x="1" y="0" width="22" height="24" fill="#ffffff" stroke="none"/></svg><svg style="left:638px;top:127px" width="6" height="5"><path d="M0 0 L6 0 L3 4 Z" fill="#e8eaec"/></svg><div class="a" style="left:653px;top:110px;width:1px;height:30px;background:#1f2831;"></div><svg style="left:659px;top:112px;opacity:1" width="24" height="24" viewBox="0 0 24 24" fill="none" stroke="#ffffff" stroke-width="1.3"><path d="M12 4 L21 9 L12 14 L3 9 Z" fill="#5ad05a" stroke="#5ad05a"/><path d="M3 13 L12 18 L21 13 M3 17 L12 22 L21 17"/><path d="M19 19 L22 22 M22 19 L19 22" stroke="#d03030"/></svg><div class="a" style="left:689px;top:112px;width:72px;height:26px;background:#29333d;"></div><div class="t" style="left:693px;top:117px;font-size:12px;color:#7d8894;">Standard</div><svg style="left:747px;top:120px" width="10" height="6"><path d="M1 1 L5 5 L9 1" fill="none" stroke="#6e7984" stroke-width="1.2"/></svg><div class="a" style="left:763px;top:110px;width:1px;height:30px;background:#1f2831;"></div><svg style="left:770px;top:114px" width="4" height="20"><circle cx="2" cy="3" r="1" fill="#4a5560"/><circle cx="2" cy="10" r="1" fill="#4a5560"/><circle cx="2" cy="17" r="1" fill="#4a5560"/></svg><svg style="left:777px;top:112px;opacity:1" width="24" height="24" viewBox="0 0 24 24" fill="none" stroke="#ffffff" stroke-width="1.3"><path d="M7 3 L7 19 L11 15 L14 21 L16 20 L13 14 L18 14 Z" fill="#f0f2f4" stroke="none"/></svg><svg style="left:808px;top:112px;opacity:1" width="24" height="24" viewBox="0 0 24 24" fill="none" stroke="#ffffff" stroke-width="1.3"><text x="5" y="19" font-family="Liberation Sans" font-weight="bold" font-size="17" fill="#f0f2f4" stroke="none">A</text></svg><svg style="left:833px;top:127px" width="6" height="5"><path d="M0 0 L6 0 L3 4 Z" fill="#e8eaec"/></svg><svg style="left:851px;top:112px;opacity:1" width="24" height="24" viewBox="0 0 24 24" fill="none" stroke="#ffffff" stroke-width="1.3"><text x="4" y="20" font-family="Liberation Sans" font-weight="bold" font-size="16" fill="#f0f2f4" stroke="none">A</text><text x="15" y="9" font-family="Liberation Sans" font-size="9" fill="#40d0c0" stroke="none">a</text></svg><svg style="left:876px;top:127px" width="6" height="5"><path d="M0 0 L6 0 L3 4 Z" fill="#e8eaec"/></svg><svg style="left:894px;top:112px;opacity:1" width="24" height="24" viewBox="0 0 24 24" fill="none" stroke="#ffffff" stroke-width="1.3"><rect x="3" y="6" width="18" height="13"/><path d="M7 13 H18 M7 16 H18 M6 10 H10"/></svg><div class="a" style="left:924px;top:110px;width:1px;height:30px;background:#1f2831;"></div><svg style="left:930px;top:112px;opacity:1" width="24" height="24" viewBox="0 0 24 24" fill="none" stroke="#ffffff" stroke-width="1.3"><path d="M4 4 L20 20"/></svg><svg style="left:961px;top:112px;opacity:1" width="24" height="24" viewBox="0 0 24 24" fill="none" stroke="#ffffff" stroke-width="1.3"><rect x="2" y="6" width="19" height="12"/></svg><svg style="left:986px;top:127px" width="6" height="5"><path d="M0 0 L6 0 L3 4 Z" fill="#e8eaec"/></svg><svg style="left:1003px;top:112px;opacity:1" width="24" height="24" viewBox="0 0 24 24" fill="none" stroke="#ffffff" stroke-width="1.3"><circle cx="12" cy="12" r="8"/></svg><svg style="left:1028px;top:127px" width="6" height="5"><path d="M0 0 L6 0 L3 4 Z" fill="#e8eaec"/></svg><svg style="left:1045px;top:112px;opacity:1" width="24" height="24" viewBox="0 0 24 24" fill="none" stroke="#ffffff" stroke-width="1.3"><path d="M8 4 Q16 12 8 20"/></svg><svg style="left:1070px;top:127px" width="6" height="5"><path d="M0 0 L6 0 L3 4 Z" fill="#e8eaec"/></svg><svg style="left:1088px;top:112px;opacity:1" width="24" height="24" viewBox="0 0 24 24" fill="none" stroke="#ffffff" stroke-width="1.3"><path d="M8 6 Q14 8 15 13"/></svg><svg style="left:1113px;top:127px" width="6" height="5"><path d="M0 0 L6 0 L3 4 Z" fill="#e8eaec"/></svg><svg style="left:1130px;top:112px;opacity:1" width="24" height="24" viewBox="0 0 24 24" fill="none" stroke="#ffffff" stroke-width="1.3"><path d="M5 4 Q18 6 19 19"/></svg><svg style="left:1155px;top:127px" width="6" height="5"><path d="M0 0 L6 0 L3 4 Z" fill="#e8eaec"/></svg><svg style="left:1173px;top:112px;opacity:1" width="24" height="24" viewBox="0 0 24 24" fill="none" stroke="#ffffff" stroke-width="1.3"><rect x="2" y="17" width="4" height="4"/><rect x="18" y="3" width="4" height="4"/><rect x="2" y="3" width="4" height="4"/><rect x="18" y="17" width="4" height="4"/><path d="M5 18 Q8 8 12 12 Q16 16 19 7"/></svg><svg style="left:1203px;top:112px;opacity:1" width="24" height="24" viewBox="0 0 24 24" fill="none" stroke="#ffffff" stroke-width="1.3"><ellipse cx="12" cy="12" rx="10" ry="6"/><path d="M2 12 H22 M12 6 V18"/></svg><svg style="left:1228px;top:127px" width="6" height="5"><path d="M0 0 L6 0 L3 4 Z" fill="#e8eaec"/></svg><svg style="left:1246px;top:112px;opacity:1" width="24" height="24" viewBox="0 0 24 24" fill="none" stroke="#ffffff" stroke-width="1.3"><path d="M7 4 H17 L22 12 L17 20 H7 L2 12 Z"/></svg><svg style="left:1271px;top:127px" width="6" height="5"><path d="M0 0 L6 0 L3 4 Z" fill="#e8eaec"/></svg><div class="a" style="left:1287px;top:110px;width:1px;height:30px;background:#1f2831;"></div><svg style="left:1293px;top:112px;opacity:1" width="24" height="24" viewBox="0 0 24 24" fill="none" stroke="#ffffff" stroke-width="1.3"><rect x="4" y="4" width="16" height="16"/><path d="M6 18 L10 12 L13 16 L15 13 L18 18"/><circle cx="16" cy="8" r="1.2" fill="#f0f2f4"/></svg><svg style="left:1325px;top:112px;opacity:1" width="24" height="24" viewBox="0 0 24 24" fill="none" stroke="#ffffff" stroke-width="1.3"><rect x="4" y="2" width="16" height="16"/><path d="M6 16 L10 10 L13 14 L15 11 L18 16"/><circle cx="16" cy="6" r="1.2" fill="#f0f2f4"/><rect x="8" y="19" width="8" height="4"/></svg><svg style="left:1358px;top:112px;opacity:1" width="24" height="24" viewBox="0 0 24 24" fill="none" stroke="#ffffff" stroke-width="1.3"><path d="M5 16 Q1 12 5 9 Q6 5 11 6 Q15 3 18 7 Q23 8 21 13 Q22 18 16 17 Q12 20 8 17 Q5 18 5 16 Z"/></svg><div class="a" style="left:1388px;top:110px;width:1px;height:30px;background:#1f2831;"></div><svg style="left:1394px;top:112px;opacity:1" width="24" height="24" viewBox="0 0 24 24" fill="none" stroke="#ffffff" stroke-width="1.3"><path d="M4 5 V19 M20 5 V19 M4 9 H20"/><path d="M6 7 L4 9 L6 11 M18 7 L20 9 L18 11"/></svg><svg style="left:1427px;top:112px;opacity:1" width="24" height="24" viewBox="0 0 24 24" fill="none" stroke="#ffffff" stroke-width="1.3"><path d="M3 5 V19 M21 5 V19 M3 11 H21 M7 8 V13 M11 8 V13 M15 8 V13"/></svg><svg style="left:1458px;top:112px;opacity:1" width="24" height="24" viewBox="0 0 24 24" fill="none" stroke="#ffffff" stroke-width="1.3"><path d="M5 5 H18 V19"/><rect x="3" y="3" width="4" height="4" fill="#f0f2f4"/><rect x="16" y="17" width="4" height="4" fill="#f0f2f4"/></svg><div class="a" style="left:0px;top:142px;width:1920px;height:910px;background:#1a232e;"></div><div class="a" style="left:4px;top:143px;width:260px;height:909px;background:#2b3540;"></div><div class="a" style="left:4px;top:143px;width:260px;height:28px;background:#1e2834;"></div><div class="t" style="left:14px;top:148.29px;font-size:11px;color:#eef0f2;">Project Explorer</div><svg style="left:191px;top:151px" width="70" height="14" fill="none" stroke="#f0f2f4"><path d="M1 4 L6 9 L11 4" stroke-width="1.6"/><path d="M30 0 H36 M31 0 V7 M35 0 V7 M29 7 H37 M33 7 V13" stroke-width="1.3"/><path d="M54 1 L64 11 M64 1 L54 11" stroke-width="2"/></svg><svg style="left:20px;top:186px" width="10" height="8"><path d="M0 0 H9 L4.5 7 Z" fill="#f0f2f4"/></svg><svg style="left:44px;top:181px" width="90" height="20" fill="none" stroke="#f0f2f4" stroke-width="1.2"><path d="M2 2 H9 L11 4 H17 V15 H2 Z M4 7 H15 M4 10 H15 M4 13 H15"/><path d="M19 6 V18 H7"/><path d="M47 4 A7 7 0 1 0 48 14"/><path d="M44 3 L50 3 L49 9 Z" fill="#f0f2f4"/><rect x="63" y="2" width="10" height="11"/><rect x="66" y="5" width="10" height="11"/><rect x="69" y="8" width="10" height="11" fill="#2b3540"/><path d="M71 13 H77"/></svg><div class="a" style="left:11px;top:215px;width:247px;height:19px;background:#1f2934;"></div><div class="t" style="left:14px;top:216.19px;font-size:11px;color:#5d6873;">Enter a search term</div><div class="a" style="left:11px;top:242px;width:228px;height:764px;background:#2c3641;"></div><div class="a" style="left:24px;top:257px;width:1px;height:56px;border-left:1px dotted #7d868f"></div><div class="a" style="left:43px;top:320px;width:1px;height:653px;border-left:1px dotted #7d868f"></div><div class="a" style="left:24px;top:313px;width:1px;height:693px;border-left:1px dotted #7d868f"></div><svg style="left:19px;top:247px" width="10" height="10"><rect x="0" y="0" width="10" height="10" fill="#dfe2e5" /><rect x="0.5" y="0.5" width="9" height="9" fill="none" stroke="#a9aeb3" stroke-width="1"/><g stroke="#333c46" stroke-width="1.4"><path d="M2.5 5 H7.5"/><path d="M5 2.5 V7.5"/></g></svg><div class="a" style="left:30px;top:252px;width:6px;height:1px;border-top:1px dotted #7d868f"></div><svg style="left:34px;top:244px" width="16" height="16"><path d="M1 2 H6 L8 4 H14 V13 H1 Z" fill="#f4f5f6"/></svg><div class="t" style="left:56px;top:245.49px;font-size:11px;color:#f0f2f4;letter-spacing:-0.25px">2FH Project</div><svg style="left:19px;top:267px" width="10" height="10"><rect x="0" y="0" width="10" height="10" fill="#dfe2e5" /><rect x="0.5" y="0.5" width="9" height="9" fill="none" stroke="#a9aeb3" stroke-width="1"/><g stroke="#333c46" stroke-width="1.4"><path d="M2.5 5 H7.5"/><path d="M5 2.5 V7.5"/></g></svg><div class="a" style="left:30px;top:272px;width:6px;height:1px;border-top:1px dotted #7d868f"></div><svg style="left:34px;top:264px" width="16" height="16"><path d="M1 2 H6 L8 4 H14 V13 H1 Z" fill="#f4f5f6"/></svg><div class="t" style="left:56px;top:265.49px;font-size:11px;color:#f0f2f4;letter-spacing:-0.25px">AD plant</div><svg style="left:19px;top:287px" width="10" height="10"><rect x="0" y="0" width="10" height="10" fill="#dfe2e5" /><rect x="0.5" y="0.5" width="9" height="9" fill="none" stroke="#a9aeb3" stroke-width="1"/><g stroke="#333c46" stroke-width="1.4"><path d="M2.5 5 H7.5"/><path d="M5 2.5 V7.5"/></g></svg><div class="a" style="left:30px;top:292px;width:6px;height:1px;border-top:1px dotted #7d868f"></div><svg style="left:34px;top:284px" width="16" height="16"><path d="M1 2 H6 L8 4 H14 V13 H1 Z" fill="#f4f5f6"/></svg><div class="t" style="left:56px;top:285.49px;font-size:11px;color:#f0f2f4;letter-spacing:-0.25px">DEMO Project</div><svg style="left:19px;top:307px" width="10" height="10"><rect x="0" y="0" width="10" height="10" fill="#dfe2e5" /><rect x="0.5" y="0.5" width="9" height="9" fill="none" stroke="#a9aeb3" stroke-width="1"/><g stroke="#333c46" stroke-width="1.4"><path d="M2.5 5 H7.5"/></g></svg><div class="a" style="left:30px;top:312px;width:6px;height:1px;border-top:1px dotted #7d868f"></div><svg style="left:34px;top:304px" width="16" height="16"><path d="M1 2 H6 L8 4 H13 V6 H4 L1 13 Z M1 13 L4 6 H15 L12 13 Z" fill="none" stroke="#f4f5f6" stroke-width="1.1"/></svg><div class="t" style="left:56px;top:305.21px;font-size:11.8px;color:#f0f2f4;"><b>Demo project US</b></div><svg style="left:38px;top:327px" width="10" height="10"><rect x="0" y="0" width="10" height="10" fill="#dfe2e5" /><rect x="0.5" y="0.5" width="9" height="9" fill="none" stroke="#a9aeb3" stroke-width="1"/><g stroke="#333c46" stroke-width="1.4"><path d="M2.5 5 H7.5"/><path d="M5 2.5 V7.5"/></g></svg><div class="a" style="left:49px;top:332px;width:6px;height:1px;border-top:1px dotted #7d868f"></div><svg style="left:54px;top:324px" width="16" height="16"><path d="M3 2 H13 V14 H3 Z M6 2 V6 H10 V2" fill="none" stroke="#f0f2f4" stroke-width="1.1"/></svg><div class="t" style="left:74px;top:325.49px;font-size:11px;color:#f0f2f4;letter-spacing:-0.25px">Cover sheet</div><svg style="left:38px;top:347px" width="10" height="10"><rect x="0" y="0" width="10" height="10" fill="#dfe2e5" /><rect x="0.5" y="0.5" width="9" height="9" fill="none" stroke="#a9aeb3" stroke-width="1"/><g stroke="#333c46" stroke-width="1.4"><path d="M2.5 5 H7.5"/><path d="M5 2.5 V7.5"/></g></svg><div class="a" style="left:49px;top:352px;width:6px;height:1px;border-top:1px dotted #7d868f"></div><svg style="left:54px;top:344px" width="16" height="16"><path d="M3 1 H10 L13 4 V15 H3 Z M5 7 H11 M5 10 H11 M5 12 H11" fill="none" stroke="#f0f2f4" stroke-width="1.1"/></svg><div class="t" style="left:74px;top:345.49px;font-size:11px;color:#f0f2f4;letter-spacing:-0.25px">Summary</div><svg style="left:38px;top:367px" width="10" height="10"><rect x="0" y="0" width="10" height="10" fill="#dfe2e5" /><rect x="0.5" y="0.5" width="9" height="9" fill="none" stroke="#a9aeb3" stroke-width="1"/><g stroke="#333c46" stroke-width="1.4"><path d="M2.5 5 H7.5"/></g></svg><div class="a" style="left:49px;top:372px;width:6px;height:1px;border-top:1px dotted #7d868f"></div><svg style="left:54px;top:364px" width="16" height="16"><rect x="2" y="1" width="12" height="14" fill="#f29a1e"/><path d="M9 3 L6 8 H9 L7 13" stroke="#5a3300" fill="none" stroke-width="1"/></svg><div class="t" style="left:74px;top:365.49px;font-size:11px;color:#f0f2f4;letter-spacing:-0.25px">Schematics</div><div class="a" style="left:63px;top:392px;width:17px;height:1px;border-top:1px dotted #7d868f"></div><div class="a" style="left:91px;top:383px;width:34px;height:19px;background:#1a232e;"></div><div class="t" style="left:94px;top:385.21px;font-size:11.8px;color:#f0f2f4;"><b>0001</b></div><div class="a" style="left:63px;top:412px;width:17px;height:1px;border-top:1px dotted #7d868f"></div><div class="t" style="left:94px;top:405.49px;font-size:11px;color:#f0f2f4;letter-spacing:-0.25px">0002</div><svg style="left:38px;top:427px" width="10" height="10"><rect x="0" y="0" width="10" height="10" fill="#dfe2e5" /><rect x="0.5" y="0.5" width="9" height="9" fill="none" stroke="#a9aeb3" stroke-width="1"/><g stroke="#333c46" stroke-width="1.4"><path d="M2.5 5 H7.5"/></g></svg><div class="a" style="left:49px;top:432px;width:6px;height:1px;border-top:1px dotted #7d868f"></div><svg style="left:54px;top:424px" width="16" height="16"><path d="M1 7 H8 V14 H1 Z M3 10 H7 M3 12 H7 M5 3 L7 9 H13 L15 3 Z" fill="none" stroke="#f0f2f4" stroke-width="1.1"/></svg><div class="t" style="left:74px;top:425.49px;font-size:11px;color:#f0f2f4;letter-spacing:-0.25px">Material list</div><div class="a" style="left:63px;top:452px;width:17px;height:1px;border-top:1px dotted #7d868f"></div><div class="t" style="left:94px;top:445.21px;font-size:11.8px;color:#f0f2f4;"><b>0001 : Material list</b></div><svg style="left:38px;top:467px" width="10" height="10"><rect x="0" y="0" width="10" height="10" fill="#dfe2e5" /><rect x="0.5" y="0.5" width="9" height="9" fill="none" stroke="#a9aeb3" stroke-width="1"/><g stroke="#333c46" stroke-width="1.4"><path d="M2.5 5 H7.5"/></g></svg><div class="a" style="left:49px;top:472px;width:6px;height:1px;border-top:1px dotted #7d868f"></div><svg style="left:54px;top:464px" width="16" height="16"><path d="M3 3 H12 V13 H3 Z M8 3 V13 M10 6 H14 M10 10 H14" fill="none" stroke="#f0f2f4" stroke-width="1.1"/></svg><div class="t" style="left:74px;top:465.49px;font-size:11px;color:#f0f2f4;letter-spacing:-0.25px">Terminal chart</div><div class="a" style="left:63px;top:492px;width:17px;height:1px;border-top:1px dotted #7d868f"></div><div class="t" style="left:94px;top:485.49px;font-size:11px;color:#f0f2f4;letter-spacing:-0.25px">0002 : Terminal chart =A1+P1-</div><div class="a" style="left:63px;top:512px;width:17px;height:1px;border-top:1px dotted #7d868f"></div><div class="t" style="left:94px;top:505.49px;font-size:11px;color:#f0f2f4;letter-spacing:-0.25px">0003 : Terminal chart =A1+P1-</div><div class="a" style="left:63px;top:532px;width:17px;height:1px;border-top:1px dotted #7d868f"></div><div class="t" style="left:94px;top:525.49px;font-size:11px;color:#f0f2f4;letter-spacing:-0.25px">0004 : Terminal chart =A1+P1-</div><div class="a" style="left:63px;top:552px;width:17px;height:1px;border-top:1px dotted #7d868f"></div><div class="t" style="left:94px;top:545.49px;font-size:11px;color:#f0f2f4;letter-spacing:-0.25px">0005 : Terminal chart =A1+ST-</div><div class="a" style="left:63px;top:572px;width:17px;height:1px;border-top:1px dotted #7d868f"></div><div class="t" style="left:94px;top:565.49px;font-size:11px;color:#f0f2f4;letter-spacing:-0.25px">0006 : Terminal chart =A1+ST-</div><div class="a" style="left:63px;top:592px;width:17px;height:1px;border-top:1px dotted #7d868f"></div><div class="t" style="left:94px;top:585.49px;font-size:11px;color:#f0f2f4;letter-spacing:-0.25px">0007 : Terminal chart =A1+ST-</div><div class="a" style="left:63px;top:612px;width:17px;height:1px;border-top:1px dotted #7d868f"></div><div class="t" style="left:94px;top:605.49px;font-size:11px;color:#f0f2f4;letter-spacing:-0.25px">0008 : Terminal chart =A1+ST-</div><div class="a" style="left:63px;top:632px;width:17px;height:1px;border-top:1px dotted #7d868f"></div><div class="t" style="left:94px;top:625.49px;font-size:11px;color:#f0f2f4;letter-spacing:-0.25px">0009 : Terminal chart =A1+ST-</div><div class="a" style="left:63px;top:652px;width:17px;height:1px;border-top:1px dotted #7d868f"></div><div class="t" style="left:94px;top:645.49px;font-size:11px;color:#f0f2f4;letter-spacing:-0.25px">0010 : Terminal chart =A1+ST-</div><div class="a" style="left:63px;top:672px;width:17px;height:1px;border-top:1px dotted #7d868f"></div><div class="t" style="left:94px;top:665.49px;font-size:11px;color:#f0f2f4;letter-spacing:-0.25px">0011 : Terminal chart =A1+ST-</div><div class="a" style="left:63px;top:692px;width:17px;height:1px;border-top:1px dotted #7d868f"></div><div class="t" style="left:94px;top:685.49px;font-size:11px;color:#f0f2f4;letter-spacing:-0.25px">0012 : Terminal chart =A1+ST-</div><div class="a" style="left:63px;top:712px;width:17px;height:1px;border-top:1px dotted #7d868f"></div><div class="t" style="left:94px;top:705.49px;font-size:11px;color:#f0f2f4;letter-spacing:-0.25px">0013 : Terminal chart =A1+ST-</div><div class="a" style="left:63px;top:732px;width:17px;height:1px;border-top:1px dotted #7d868f"></div><div class="t" style="left:94px;top:725.49px;font-size:11px;color:#f0f2f4;letter-spacing:-0.25px">0014 : Terminal chart =A1+ST-</div><div class="a" style="left:63px;top:752px;width:17px;height:1px;border-top:1px dotted #7d868f"></div><div class="t" style="left:94px;top:745.49px;font-size:11px;color:#f0f2f4;letter-spacing:-0.25px">0015 : Terminal chart =A1+ST-</div><div class="a" style="left:63px;top:772px;width:17px;height:1px;border-top:1px dotted #7d868f"></div><div class="t" style="left:94px;top:765.49px;font-size:11px;color:#f0f2f4;letter-spacing:-0.25px">0016 : Terminal chart =A1+ST-</div><div class="a" style="left:63px;top:792px;width:17px;height:1px;border-top:1px dotted #7d868f"></div><div class="t" style="left:94px;top:785.49px;font-size:11px;color:#f0f2f4;letter-spacing:-0.25px">0017 : Terminal chart =A1+ST-</div><div class="a" style="left:63px;top:812px;width:17px;height:1px;border-top:1px dotted #7d868f"></div><div class="t" style="left:94px;top:805.49px;font-size:11px;color:#f0f2f4;letter-spacing:-0.25px">0018 : Terminal chart =A1+ST-</div><div class="a" style="left:63px;top:832px;width:17px;height:1px;border-top:1px dotted #7d868f"></div><div class="t" style="left:94px;top:825.49px;font-size:11px;color:#f0f2f4;letter-spacing:-0.25px">0019 : Terminal chart =A1+ST-</div><div class="a" style="left:63px;top:852px;width:17px;height:1px;border-top:1px dotted #7d868f"></div><div class="t" style="left:94px;top:845.49px;font-size:11px;color:#f0f2f4;letter-spacing:-0.25px">0020 : Terminal chart =A1+ST-</div><div class="a" style="left:63px;top:872px;width:17px;height:1px;border-top:1px dotted #7d868f"></div><div class="t" style="left:94px;top:865.49px;font-size:11px;color:#f0f2f4;letter-spacing:-0.25px">0021 : Terminal chart =A1+ST-</div><div class="a" style="left:63px;top:892px;width:17px;height:1px;border-top:1px dotted #7d868f"></div><div class="t" style="left:94px;top:885.49px;font-size:11px;color:#f0f2f4;letter-spacing:-0.25px">0022 : Terminal chart =A1+ST-</div><div class="a" style="left:63px;top:912px;width:17px;height:1px;border-top:1px dotted #7d868f"></div><div class="t" style="left:94px;top:905.49px;font-size:11px;color:#f0f2f4;letter-spacing:-0.25px">0023 : Terminal chart =A1+ST-</div><div class="a" style="left:63px;top:932px;width:17px;height:1px;border-top:1px dotted #7d868f"></div><div class="t" style="left:94px;top:925.49px;font-size:11px;color:#f0f2f4;letter-spacing:-0.25px">0024 : Terminal chart =A1+ST-</div><div class="a" style="left:63px;top:952px;width:17px;height:1px;border-top:1px dotted #7d868f"></div><div class="t" style="left:94px;top:945.49px;font-size:11px;color:#f0f2f4;letter-spacing:-0.25px">0025 : Terminal chart =A1+ST-</div><svg style="left:38px;top:967px" width="10" height="10"><rect x="0" y="0" width="10" height="10" fill="#dfe2e5" /><rect x="0.5" y="0.5" width="9" height="9" fill="none" stroke="#a9aeb3" stroke-width="1"/><g stroke="#333c46" stroke-width="1.4"><path d="M2.5 5 H7.5"/><path d="M5 2.5 V7.5"/></g></svg><div class="a" style="left:49px;top:972px;width:6px;height:1px;border-top:1px dotted #7d868f"></div><svg style="left:54px;top:964px" width="16" height="16"><path d="M1 6 H11 V15 H1 Z M4 3 H13 V12 M7 1 H15 V9 M3 9 H9 M3 12 H9" fill="none" stroke="#f0f2f4" stroke-width="1.1"/></svg><div class="t" style="left:74px;top:965.49px;font-size:11px;color:#f0f2f4;letter-spacing:-0.25px">PLC chart</div><div class="a" style="left:44px;top:992px;width:11px;height:1px;border-top:1px dotted #7d868f"></div><svg style="left:54px;top:984px" width="16" height="16"><path d="M4 2 H14 V12 H4 Z M6 5 H12 M6 8 H12 M1 14 H8 M4 10 V14" fill="none" stroke="#f0f2f4" stroke-width="1.1"/></svg><div class="t" style="left:74px;top:985.49px;font-size:11px;color:#f0f2f4;letter-spacing:-0.25px">Cable list</div><div class="a" style="left:62px;top:380px;width:1px;height:33px;border-left:1px dotted #7d868f"></div><div class="a" style="left:62px;top:440px;width:1px;height:13px;border-left:1px dotted #7d868f"></div><div class="a" style="left:62px;top:480px;width:1px;height:473px;border-left:1px dotted #7d868f"></div><div class="a" style="left:24px;top:313px;width:1px;height:687px;border-left:1px dotted #7d868f"></div><div class="a" style="left:238px;top:242px;width:18px;height:764px;background:#e9eaeb;"></div><div class="a" style="left:246px;top:262px;width:3px;height:643px;background:#8a8f94;"></div><div class="a" style="left:11px;top:1006px;width:245px;height:18px;background:#e9eaeb;"></div><div class="a" style="left:30px;top:1015px;width:164px;height:3px;background:#8a8f94;"></div><div class="a" style="left:4px;top:1027px;width:260px;height:24px;background:#18212c;"></div><div class="a" style="left:5px;top:1028px;width:104px;height:22px;background:#222c37;"></div><div class="a" style="left:109px;top:1028px;width:80px;height:22px;background:#303b46;"></div><svg style="left:9px;top:1031px" width="14" height="16" fill="none" stroke="#e8eaec" stroke-width="1.1"><path d="M1 1 H9 L11 3 V14 H1 Z M3 5 H8 M3 8 H8 M3 11 H6"/><circle cx="10" cy="12" r="2"/></svg><div class="t" style="left:24px;top:1030.69px;font-size:11px;color:#eef0f2;">Project Explorer</div><svg style="left:116px;top:1031px" width="14" height="16" fill="none" stroke="#e8eaec" stroke-width="1.1"><path d="M1 1 H9 L11 3 V14 H1 Z M3 5 H8 M3 8 H8 M3 11 H6"/><circle cx="10" cy="12" r="2"/></svg><div class="t" style="left:132px;top:1030.69px;font-size:11px;color:#eef0f2;">Properties</div><div class="a" style="left:266px;top:577px;width:3px;height:40px;background:#4d5761;"></div><div class="a" style="left:1574px;top:575px;width:3px;height:40px;background:#4d5761;"></div><div class="a" style="left:272px;top:143px;width:1300px;height:909px;background:#2c3641;"></div><div class="a" style="left:273px;top:143px;width:277px;height:35px;background:#343f4a;"></div><div class="a" style="left:550px;top:143px;width:242px;height:35px;background:#222c37;"></div><svg style="left:281px;top:151px" width="20" height="18" fill="none" stroke="#e8eaec" stroke-width="1.1"><path d="M1 7 H11 V16 H1 Z M3 10 H9 M3 13 H9 M6 2 L9 9 H17 L19 2 Z"/></svg><div class="t" style="left:304px;top:152.12px;font-size:11.2px;color:#eef0f2;">Beispiel USA_Material list2.0001.wsMAL*</div><svg style="left:529px;top:155px" width="10" height="10"><path d="M1 1 L9 9 M9 1 L1 9" stroke="#ffffff" stroke-width="2"/></svg><svg style="left:558px;top:151px" width="16" height="18"><rect x="0" y="0" width="16" height="18" fill="#f29a1e"/><path d="M10 3 L6 9 H10 L7 15" stroke="#4a2a00" fill="none" stroke-width="1"/></svg><div class="t" style="left:581px;top:152.02px;font-size:11.5px;color:#f4f5f6;"><b>Beispiel USA_Plan.0001.wsELD</b></div><svg style="left:772px;top:155px" width="10" height="10"><path d="M1 1 L9 9 M9 1 L1 9" stroke="#ffffff" stroke-width="2"/></svg><svg style="left:1524px;top:151px" width="40" height="12"><path d="M1 1 H10" stroke="#fff" stroke-width="1.2"/><path d="M1 3 H10 L5.5 9 Z" fill="#fff"/><path d="M28 1 L37 10 M37 1 L28 10" stroke="#fff" stroke-width="2"/></svg><div class="a" style="left:383px;top:183px;width:1094px;height:17px;background:#1c2635;"></div><svg style="left:0;top:0" width="1920" height="1080"><line x1="411.6" y1="190" x2="411.6" y2="200" stroke="#f0f2f4" stroke-width="1"/><text x="446.6" y="195.8" font-family="Liberation Sans" font-size="12" fill="#eceef0">1</text><line x1="490.4" y1="190" x2="490.4" y2="200" stroke="#f0f2f4" stroke-width="1"/><text x="525.4" y="195.8" font-family="Liberation Sans" font-size="12" fill="#eceef0">2</text><line x1="569.1" y1="190" x2="569.1" y2="200" stroke="#f0f2f4" stroke-width="1"/><text x="604.1" y="195.8" font-family="Liberation Sans" font-size="12" fill="#eceef0">3</text><line x1="647.9" y1="190" x2="647.9" y2="200" stroke="#f0f2f4" stroke-width="1"/><text x="682.9" y="195.8" font-family="Liberation Sans" font-size="12" fill="#eceef0">4</text><line x1="726.6" y1="190" x2="726.6" y2="200" stroke="#f0f2f4" stroke-width="1"/><text x="761.6" y="195.8" font-family="Liberation Sans" font-size="12" fill="#eceef0">5</text><line x1="805.4" y1="190" x2="805.4" y2="200" stroke="#f0f2f4" stroke-width="1"/><text x="840.4" y="195.8" font-family="Liberation Sans" font-size="12" fill="#eceef0">6</text><line x1="884.1" y1="190" x2="884.1" y2="200" stroke="#f0f2f4" stroke-width="1"/><text x="919.1" y="195.8" font-family="Liberation Sans" font-size="12" fill="#eceef0">7</text><line x1="962.9" y1="190" x2="962.9" y2="200" stroke="#f0f2f4" stroke-width="1"/><text x="997.9" y="195.8" font-family="Liberation Sans" font-size="12" fill="#eceef0">8</text><line x1="1041.6" y1="190" x2="1041.6" y2="200" stroke="#f0f2f4" stroke-width="1"/><text x="1076.6" y="195.8" font-family="Liberation Sans" font-size="12" fill="#eceef0">9</text><line x1="1120.3" y1="190" x2="1120.3" y2="200" stroke="#f0f2f4" stroke-width="1"/><text x="1155.3" y="195.8" font-family="Liberation Sans" font-size="12" fill="#eceef0">10</text><line x1="1199.1" y1="190" x2="1199.1" y2="200" stroke="#f0f2f4" stroke-width="1"/><text x="1234.1" y="195.8" font-family="Liberation Sans" font-size="12" fill="#eceef0">11</text><line x1="1277.8" y1="190" x2="1277.8" y2="200" stroke="#f0f2f4" stroke-width="1"/><text x="1312.8" y="195.8" font-family="Liberation Sans" font-size="12" fill="#eceef0">12</text><line x1="1356.6" y1="190" x2="1356.6" y2="200" stroke="#f0f2f4" stroke-width="1"/><text x="1391.6" y="195.8" font-family="Liberation Sans" font-size="12" fill="#eceef0">13</text><line x1="1435.3" y1="190" x2="1435.3" y2="200" stroke="#f0f2f4" stroke-width="1"/><text x="1470.3" y="195.8" font-family="Liberation Sans" font-size="12" fill="#eceef0">14</text></svg><div class="a" style="left:1477px;top:183px;width:90px;height:17px;background:#2c3641;"></div><div class="a" style="left:277px;top:200px;width:17px;height:845px;background:#1c2635;"></div><svg style="left:0;top:0" width="1920" height="1080"><line x1="285" y1="215.4" x2="294" y2="215.4" stroke="#f0f2f4" stroke-width="1"/><text x="285.5" y="252.4" font-family="Liberation Serif" font-weight="bold" font-size="11" fill="#f0f2f4" text-anchor="middle">A</text><line x1="285" y1="279.0" x2="294" y2="279.0" stroke="#f0f2f4" stroke-width="1"/><text x="285.5" y="316.0" font-family="Liberation Serif" font-weight="bold" font-size="11" fill="#f0f2f4" text-anchor="middle">B</text><line x1="285" y1="342.5" x2="294" y2="342.5" stroke="#f0f2f4" stroke-width="1"/><text x="285.5" y="379.5" font-family="Liberation Serif" font-weight="bold" font-size="11" fill="#f0f2f4" text-anchor="middle">C</text><line x1="285" y1="406.1" x2="294" y2="406.1" stroke="#f0f2f4" stroke-width="1"/><text x="285.5" y="443.1" font-family="Liberation Serif" font-weight="bold" font-size="11" fill="#f0f2f4" text-anchor="middle">D</text><line x1="285" y1="469.7" x2="294" y2="469.7" stroke="#f0f2f4" stroke-width="1"/><text x="285.5" y="506.7" font-family="Liberation Serif" font-weight="bold" font-size="11" fill="#f0f2f4" text-anchor="middle">E</text><line x1="285" y1="533.2" x2="294" y2="533.2" stroke="#f0f2f4" stroke-width="1"/><text x="285.5" y="570.2" font-family="Liberation Serif" font-weight="bold" font-size="11" fill="#f0f2f4" text-anchor="middle">F</text><line x1="285" y1="596.8" x2="294" y2="596.8" stroke="#f0f2f4" stroke-width="1"/><text x="285.5" y="633.8" font-family="Liberation Serif" font-weight="bold" font-size="11" fill="#f0f2f4" text-anchor="middle">G</text><line x1="285" y1="660.4" x2="294" y2="660.4" stroke="#f0f2f4" stroke-width="1"/><text x="285.5" y="697.4" font-family="Liberation Serif" font-weight="bold" font-size="11" fill="#f0f2f4" text-anchor="middle">H</text><line x1="285" y1="724.0" x2="294" y2="724.0" stroke="#f0f2f4" stroke-width="1"/><text x="285.5" y="761.0" font-family="Liberation Serif" font-weight="bold" font-size="11" fill="#f0f2f4" text-anchor="middle">I</text><line x1="285" y1="787.5" x2="294" y2="787.5" stroke="#f0f2f4" stroke-width="1"/><text x="285.5" y="824.5" font-family="Liberation Serif" font-weight="bold" font-size="11" fill="#f0f2f4" text-anchor="middle">J</text><line x1="285" y1="851.1" x2="294" y2="851.1" stroke="#f0f2f4" stroke-width="1"/><text x="285.5" y="888.1" font-family="Liberation Serif" font-weight="bold" font-size="11" fill="#f0f2f4" text-anchor="middle">K</text><line x1="285" y1="914.7" x2="294" y2="914.7" stroke="#f0f2f4" stroke-width="1"/><text x="285.5" y="951.7" font-family="Liberation Serif" font-weight="bold" font-size="11" fill="#f0f2f4" text-anchor="middle">L</text><line x1="285" y1="978.2" x2="294" y2="978.2" stroke="#f0f2f4" stroke-width="1"/><text x="285.5" y="1015.2" font-family="Liberation Serif" font-weight="bold" font-size="11" fill="#f0f2f4" text-anchor="middle">M</text><line x1="285" y1="1041.8" x2="294" y2="1041.8" stroke="#f0f2f4" stroke-width="1"/></svg><div class="a" style="left:294px;top:200px;width:1271px;height:845px;background:#ffffff;"></div><svg style="left:0;top:0" width="1920" height="1080"><path d="M385.0 966.4 L1478.0 966.4" fill="none" stroke="#b0b0b0" stroke-width="0.8" stroke-dasharray="2 2"/><rect x="412.5" y="209.5" width="943.5" height="827.0" rx="9" fill="none" stroke="#333" stroke-width="1.1"/><rect x="421.3" y="219.5" width="460.0" height="807.0" rx="0" fill="none" stroke="#111" stroke-width="1.6"/><rect x="886.5" y="219.5" width="460.0" height="807.0" rx="0" fill="none" stroke="#111" stroke-width="1.6"/><text x="435.0" y="226.5" font-family="Liberation Mono" font-size="5" fill="#8a8a8a" text-anchor="middle" >1</text><text x="897.5" y="226.5" font-family="Liberation Mono" font-size="5" fill="#8a8a8a" text-anchor="middle" >142</text><text x="435.0" y="246.1" font-family="Liberation Mono" font-size="5" fill="#8a8a8a" text-anchor="middle" >2</text><text x="897.5" y="246.1" font-family="Liberation Mono" font-size="5" fill="#8a8a8a" text-anchor="middle" >143</text><text x="435.0" y="265.6" font-family="Liberation Mono" font-size="5" fill="#8a8a8a" text-anchor="middle" >3</text><text x="897.5" y="265.6" font-family="Liberation Mono" font-size="5" fill="#8a8a8a" text-anchor="middle" >144</text><text x="435.0" y="285.2" font-family="Liberation Mono" font-size="5" fill="#8a8a8a" text-anchor="middle" >4</text><text x="897.5" y="285.2" font-family="Liberation Mono" font-size="5" fill="#8a8a8a" text-anchor="middle" >145</text><text x="435.0" y="304.7" font-family="Liberation Mono" font-size="5" fill="#8a8a8a" text-anchor="middle" >5</text><text x="897.5" y="304.7" font-family="Liberation Mono" font-size="5" fill="#8a8a8a" text-anchor="middle" >146</text><text x="435.0" y="324.3" font-family="Liberation Mono" font-size="5" fill="#8a8a8a" text-anchor="middle" >6</text><text x="897.5" y="324.3" font-family="Liberation Mono" font-size="5" fill="#8a8a8a" text-anchor="middle" >147</text><text x="435.0" y="343.9" font-family="Liberation Mono" font-size="5" fill="#8a8a8a" text-anchor="middle" >7</text><text x="897.5" y="343.9" font-family="Liberation Mono" font-size="5" fill="#8a8a8a" text-anchor="middle" >148</text><text x="435.0" y="363.4" font-family="Liberation Mono" font-size="5" fill="#8a8a8a" text-anchor="middle" >8</text><text x="897.5" y="363.4" font-family="Liberation Mono" font-size="5" fill="#8a8a8a" text-anchor="middle" >149</text><text x="435.0" y="383.0" font-family="Liberation Mono" font-size="5" fill="#8a8a8a" text-anchor="middle" >9</text><text x="897.5" y="383.0" font-family="Liberation Mono" font-size="5" fill="#8a8a8a" text-anchor="middle" >150</text><text x="435.0" y="402.5" font-family="Liberation Mono" font-size="5" fill="#8a8a8a" text-anchor="middle" >10</text><text x="897.5" y="402.5" font-family="Liberation Mono" font-size="5" fill="#8a8a8a" text-anchor="middle" >151</text><text x="435.0" y="422.1" font-family="Liberation Mono" font-size="5" fill="#8a8a8a" text-anchor="middle" >11</text><text x="897.5" y="422.1" font-family="Liberation Mono" font-size="5" fill="#8a8a8a" text-anchor="middle" >152</text><text x="435.0" y="441.7" font-family="Liberation Mono" font-size="5" fill="#8a8a8a" text-anchor="middle" >12</text><text x="897.5" y="441.7" font-family="Liberation Mono" font-size="5" fill="#8a8a8a" text-anchor="middle" >153</text><text x="435.0" y="461.2" font-family="Liberation Mono" font-size="5" fill="#8a8a8a" text-anchor="middle" >13</text><text x="897.5" y="461.2" font-family="Liberation Mono" font-size="5" fill="#8a8a8a" text-anchor="middle" >154</text><text x="435.0" y="480.8" font-family="Liberation Mono" font-size="5" fill="#8a8a8a" text-anchor="middle" >14</text><text x="897.5" y="480.8" font-family="Liberation Mono" font-size="5" fill="#8a8a8a" text-anchor="middle" >155</text><text x="435.0" y="500.3" font-family="Liberation Mono" font-size="5" fill="#8a8a8a" text-anchor="middle" >15</text><text x="897.5" y="500.3" font-family="Liberation Mono" font-size="5" fill="#8a8a8a" text-anchor="middle" >156</text><text x="435.0" y="519.9" font-family="Liberation Mono" font-size="5" fill="#8a8a8a" text-anchor="middle" >16</text><text x="897.5" y="519.9" font-family="Liberation Mono" font-size="5" fill="#8a8a8a" text-anchor="middle" >157</text><text x="435.0" y="539.5" font-family="Liberation Mono" font-size="5" fill="#8a8a8a" text-anchor="middle" >17</text><text x="897.5" y="539.5" font-family="Liberation Mono" font-size="5" fill="#8a8a8a" text-anchor="middle" >158</text><text x="435.0" y="559.0" font-family="Liberation Mono" font-size="5" fill="#8a8a8a" text-anchor="middle" >18</text><text x="897.5" y="559.0" font-family="Liberation Mono" font-size="5" fill="#8a8a8a" text-anchor="middle" >159</text><text x="435.0" y="578.6" font-family="Liberation Mono" font-size="5" fill="#8a8a8a" text-anchor="middle" >19</text><text x="897.5" y="578.6" font-family="Liberation Mono" font-size="5" fill="#8a8a8a" text-anchor="middle" >160</text><text x="435.0" y="598.1" font-family="Liberation Mono" font-size="5" fill="#8a8a8a" text-anchor="middle" >20</text><text x="897.5" y="598.1" font-family="Liberation Mono" font-size="5" fill="#8a8a8a" text-anchor="middle" >161</text><text x="435.0" y="617.7" font-family="Liberation Mono" font-size="5" fill="#8a8a8a" text-anchor="middle" >21</text><text x="897.5" y="617.7" font-family="Liberation Mono" font-size="5" fill="#8a8a8a" text-anchor="middle" >162</text><text x="435.0" y="637.3" font-family="Liberation Mono" font-size="5" fill="#8a8a8a" text-anchor="middle" >22</text><text x="897.5" y="637.3" font-family="Liberation Mono" font-size="5" fill="#8a8a8a" text-anchor="middle" >163</text><text x="435.0" y="656.8" font-family="Liberation Mono" font-size="5" fill="#8a8a8a" text-anchor="middle" >23</text><text x="897.5" y="656.8" font-family="Liberation Mono" font-size="5" fill="#8a8a8a" text-anchor="middle" >164</text><text x="435.0" y="676.4" font-family="Liberation Mono" font-size="5" fill="#8a8a8a" text-anchor="middle" >24</text><text x="897.5" y="676.4" font-family="Liberation Mono" font-size="5" fill="#8a8a8a" text-anchor="middle" >165</text><text x="435.0" y="695.9" font-family="Liberation Mono" font-size="5" fill="#8a8a8a" text-anchor="middle" >25</text><text x="897.5" y="695.9" font-family="Liberation Mono" font-size="5" fill="#8a8a8a" text-anchor="middle" >166</text><text x="435.0" y="715.5" font-family="Liberation Mono" font-size="5" fill="#8a8a8a" text-anchor="middle" >26</text><text x="897.5" y="715.5" font-family="Liberation Mono" font-size="5" fill="#8a8a8a" text-anchor="middle" >167</text><text x="435.0" y="735.1" font-family="Liberation Mono" font-size="5" fill="#8a8a8a" text-anchor="middle" >27</text><text x="897.5" y="735.1" font-family="Liberation Mono" font-size="5" fill="#8a8a8a" text-anchor="middle" >168</text><text x="435.0" y="754.6" font-family="Liberation Mono" font-size="5" fill="#8a8a8a" text-anchor="middle" >28</text><text x="897.5" y="754.6" font-family="Liberation Mono" font-size="5" fill="#8a8a8a" text-anchor="middle" >169</text><text x="435.0" y="774.2" font-family="Liberation Mono" font-size="5" fill="#8a8a8a" text-anchor="middle" >29</text><text x="897.5" y="774.2" font-family="Liberation Mono" font-size="5" fill="#8a8a8a" text-anchor="middle" >170</text><text x="435.0" y="793.7" font-family="Liberation Mono" font-size="5" fill="#8a8a8a" text-anchor="middle" >30</text><text x="897.5" y="793.7" font-family="Liberation Mono" font-size="5" fill="#8a8a8a" text-anchor="middle" >171</text><text x="435.0" y="813.3" font-family="Liberation Mono" font-size="5" fill="#8a8a8a" text-anchor="middle" >31</text><text x="897.5" y="813.3" font-family="Liberation Mono" font-size="5" fill="#8a8a8a" text-anchor="middle" >172</text><text x="435.0" y="832.9" font-family="Liberation Mono" font-size="5" fill="#8a8a8a" text-anchor="middle" >32</text><text x="897.5" y="832.9" font-family="Liberation Mono" font-size="5" fill="#8a8a8a" text-anchor="middle" >173</text><text x="435.0" y="852.4" font-family="Liberation Mono" font-size="5" fill="#8a8a8a" text-anchor="middle" >33</text><text x="897.5" y="852.4" font-family="Liberation Mono" font-size="5" fill="#8a8a8a" text-anchor="middle" >174</text><text x="435.0" y="872.0" font-family="Liberation Mono" font-size="5" fill="#8a8a8a" text-anchor="middle" >34</text><text x="897.5" y="872.0" font-family="Liberation Mono" font-size="5" fill="#8a8a8a" text-anchor="middle" >175</text><text x="435.0" y="891.5" font-family="Liberation Mono" font-size="5" fill="#8a8a8a" text-anchor="middle" >35</text><text x="897.5" y="891.5" font-family="Liberation Mono" font-size="5" fill="#8a8a8a" text-anchor="middle" >176</text><text x="435.0" y="911.1" font-family="Liberation Mono" font-size="5" fill="#8a8a8a" text-anchor="middle" >36</text><text x="897.5" y="911.1" font-family="Liberation Mono" font-size="5" fill="#8a8a8a" text-anchor="middle" >177</text><text x="435.0" y="930.7" font-family="Liberation Mono" font-size="5" fill="#8a8a8a" text-anchor="middle" >37</text><text x="897.5" y="930.7" font-family="Liberation Mono" font-size="5" fill="#8a8a8a" text-anchor="middle" >178</text><text x="435.0" y="950.2" font-family="Liberation Mono" font-size="5" fill="#8a8a8a" text-anchor="middle" >38</text><text x="897.5" y="950.2" font-family="Liberation Mono" font-size="5" fill="#8a8a8a" text-anchor="middle" >179</text><text x="435.0" y="969.8" font-family="Liberation Mono" font-size="5" fill="#8a8a8a" text-anchor="middle" >39</text><text x="897.5" y="969.8" font-family="Liberation Mono" font-size="5" fill="#8a8a8a" text-anchor="middle" >180</text><text x="435.0" y="989.3" font-family="Liberation Mono" font-size="5" fill="#8a8a8a" text-anchor="middle" >40</text><text x="897.5" y="989.3" font-family="Liberation Mono" font-size="5" fill="#8a8a8a" text-anchor="middle" >181</text><text x="435.0" y="1008.9" font-family="Liberation Mono" font-size="5" fill="#8a8a8a" text-anchor="middle" >41</text><text x="897.5" y="1008.9" font-family="Liberation Mono" font-size="5" fill="#8a8a8a" text-anchor="middle" >182</text><rect x="461.2" y="234.5" width="9.5" height="48.8" rx="0" fill="none" stroke="#111" stroke-width="1.3" stroke-dasharray="3 2"/><text x="448.0" y="260.0" font-family="Liberation Mono" font-size="5" fill="#3a3a3a" text-anchor="start" >-A1.2</text><circle cx="469.0" cy="239.4" r="1.5" fill="none" stroke="#e8405a" stroke-width="1"/><text x="473.0" y="237.4" font-family="Liberation Mono" font-size="5" fill="#e8405a" text-anchor="start" >L1</text><circle cx="469.0" cy="248.7" r="1.5" fill="none" stroke="#e8405a" stroke-width="1"/><text x="473.0" y="246.7" font-family="Liberation Mono" font-size="5" fill="#e8405a" text-anchor="start" >L2</text><circle cx="469.0" cy="258.5" r="1.5" fill="none" stroke="#e8405a" stroke-width="1"/><text x="473.0" y="256.5" font-family="Liberation Mono" font-size="5" fill="#e8405a" text-anchor="start" >L3</text><path d="M470.4 239.4 L832.8 239.4 L832.8 297.5 L461.3 297.5 L461.3 991.0" fill="none" stroke="#111" stroke-width="1.3"/><path d="M470.4 248.7 L838.0 248.7 L838.0 302.5 L465.5 302.5 L465.5 991.0" fill="none" stroke="#111" stroke-width="1.3"/><path d="M470.4 258.5 L842.5 258.5 L842.5 307.6 L470.3 307.6 L470.3 991.0" fill="none" stroke="#111" stroke-width="1.3"/><path d="M470.4 268.4 L847.6 268.4 L847.6 312.4 L475.5 312.4 L475.5 361.2 L597.6 361.2 L597.6 371.3 L642.0 371.3" fill="none" stroke="#3a8fd6" stroke-width="1.3"/><path d="M470.4 278.1 L852.5 278.1 L852.5 317.5 L480.5 317.5 L480.5 508.3 L690.8 508.3 L690.8 893.5" fill="none" stroke="#1faa2a" stroke-width="1.2" stroke-dasharray="6 1.5 1 1.5 3.5 1.5 1 1.5"/><circle cx="469.0" cy="268.4" r="1.5" fill="none" stroke="#e8405a" stroke-width="1"/><circle cx="469.0" cy="278.1" r="1.5" fill="none" stroke="#e8405a" stroke-width="1"/><text x="473.0" y="266.0" font-family="Liberation Mono" font-size="5" fill="#e8405a" text-anchor="start" >N</text><text x="473.0" y="276.0" font-family="Liberation Mono" font-size="5" fill="#e8405a" text-anchor="start" >PE</text><circle cx="526.9" cy="239.4" r="2" fill="none" stroke="#111" stroke-width="1.1"/><circle cx="526.9" cy="248.7" r="2" fill="none" stroke="#111" stroke-width="1.1"/><circle cx="526.9" cy="258.5" r="2" fill="none" stroke="#111" stroke-width="1.1"/><circle cx="526.9" cy="268.4" r="2" fill="#111" stroke="#111" stroke-width="1.1"/><circle cx="526.9" cy="278.1" r="2" fill="none" stroke="#111" stroke-width="1.1"/><text x="519.0" y="230.0" font-family="Liberation Mono" font-size="5" fill="#3a3a3a" text-anchor="start" >-X1.2</text><rect x="605.4" y="236.9" width="10.2" height="5.0" rx="0" fill="#fff" stroke="#111" stroke-width="1.5"/><text x="610.5" y="241.0" font-family="Liberation Mono" font-size="3.5" fill="#3a3a3a" text-anchor="middle" >10</text><text x="599.0" y="236.9" font-family="Liberation Mono" font-size="5" fill="#e8405a" text-anchor="middle" >2</text><text x="621.0" y="236.9" font-family="Liberation Mono" font-size="5" fill="#e8405a" text-anchor="middle" >3</text><rect x="605.4" y="246.2" width="10.2" height="5.0" rx="0" fill="#fff" stroke="#111" stroke-width="1.5"/><text x="610.5" y="250.3" font-family="Liberation Mono" font-size="3.5" fill="#3a3a3a" text-anchor="middle" >10</text><text x="599.0" y="246.2" font-family="Liberation Mono" font-size="5" fill="#e8405a" text-anchor="middle" >4</text><text x="621.0" y="246.2" font-family="Liberation Mono" font-size="5" fill="#e8405a" text-anchor="middle" >3</text><rect x="605.4" y="256.0" width="10.2" height="5.0" rx="0" fill="#fff" stroke="#111" stroke-width="1.5"/><text x="610.5" y="260.1" font-family="Liberation Mono" font-size="3.5" fill="#3a3a3a" text-anchor="middle" >10</text><text x="599.0" y="256.0" font-family="Liberation Mono" font-size="5" fill="#e8405a" text-anchor="middle" >6</text><text x="621.0" y="256.0" font-family="Liberation Mono" font-size="5" fill="#e8405a" text-anchor="middle" >5</text><text x="610.5" y="234.6" font-family="Liberation Mono" font-size="5" fill="#3a3a3a" text-anchor="middle" >-F1.2</text><text x="610.5" y="265.0" font-family="Liberation Mono" font-size="4.6" fill="#3a3a3a" text-anchor="middle" >Siemens MG</text><rect x="704.5" y="238.4" width="7" height="2" fill="#fff"/><path d="M704.5 239.4 H706.0 Q707.5 235.9 709.0 238.4 M709.5 239.4 H711.5" fill="none" stroke="#111" stroke-width="1.2"/><text x="701.0" y="236.9" font-family="Liberation Mono" font-size="5" fill="#e8405a" text-anchor="middle" >2</text><text x="715.0" y="236.9" font-family="Liberation Mono" font-size="5" fill="#e8405a" text-anchor="middle" >3</text><rect x="704.5" y="247.7" width="7" height="2" fill="#fff"/><path d="M704.5 248.7 H706.0 Q707.5 245.2 709.0 247.7 M709.5 248.7 H711.5" fill="none" stroke="#111" stroke-width="1.2"/><text x="701.0" y="246.2" font-family="Liberation Mono" font-size="5" fill="#e8405a" text-anchor="middle" >4</text><text x="715.0" y="246.2" font-family="Liberation Mono" font-size="5" fill="#e8405a" text-anchor="middle" >3</text><rect x="704.5" y="257.5" width="7" height="2" fill="#fff"/><path d="M704.5 258.5 H706.0 Q707.5 255.0 709.0 257.5 M709.5 258.5 H711.5" fill="none" stroke="#111" stroke-width="1.2"/><text x="701.0" y="256.0" font-family="Liberation Mono" font-size="5" fill="#e8405a" text-anchor="middle" >6</text><text x="715.0" y="256.0" font-family="Liberation Mono" font-size="5" fill="#e8405a" text-anchor="middle" >5</text><path d="M708.0 229.0 V258.0" fill="none" stroke="#111" stroke-width="1.1" stroke-dasharray="1.8 1.4"/><path d="M705 229 H709 L705 233 L709 236" fill="none" stroke="#111" stroke-width="1"/><text x="708.0" y="227.9" font-family="Liberation Mono" font-size="4.6" fill="#3a3a3a" text-anchor="middle" >Main energy switch 3pole</text><text x="708.0" y="223.3" font-family="Liberation Mono" font-size="4.6" fill="#3a3a3a" text-anchor="middle" >-Q1.7</text><text x="708.0" y="264.6" font-family="Liberation Mono" font-size="4.6" fill="#3a3a3a" text-anchor="middle" >ENTEN</text><text x="492.0" y="270.0" font-family="Liberation Mono" font-size="5" fill="#1faa2a" text-anchor="start" >⊗</text><text x="492.0" y="281.0" font-family="Liberation Mono" font-size="5" fill="#1faa2a" text-anchor="start" >⊗</text><path d="M461.3 351.4 L555.0 351.4" fill="none" stroke="#111" stroke-width="1.3"/><path d="M555.0 351.4 L642.0 351.4" fill="none" stroke="#1c1c78" stroke-width="1.3"/><path d="M710.8 351.3 L847.5 351.3 L847.5 400.3 L485.5 400.3 L485.5 991.0" fill="none" stroke="#1c1c78" stroke-width="1.3"/><path d="M710.8 371.3 L852.5 371.3 L852.5 991.0" fill="none" stroke="#1c1c78" stroke-width="1.3"/><text x="555.0" y="343.5" font-family="Liberation Mono" font-size="5" fill="#3a3a3a" text-anchor="middle" >-F1.9</text><rect x="551.5" y="350.4" width="7" height="2" fill="#fff"/><path d="M551.5 351.4 H553.0 Q554.5 347.9 556.0 350.4 M556.5 351.4 H558.5" fill="none" stroke="#111" stroke-width="1.2"/><text x="548.0" y="348.9" font-family="Liberation Mono" font-size="5" fill="#e8405a" text-anchor="middle" >1</text><text x="562.0" y="348.9" font-family="Liberation Mono" font-size="5" fill="#e8405a" text-anchor="middle" >2</text><rect x="551.5" y="360.2" width="7" height="2" fill="#fff"/><path d="M551.5 361.2 H553.0 Q554.5 357.7 556.0 360.2 M556.5 361.2 H558.5" fill="none" stroke="#111" stroke-width="1.2"/><text x="548.0" y="358.7" font-family="Liberation Mono" font-size="5" fill="#e8405a" text-anchor="middle" >3</text><text x="562.0" y="358.7" font-family="Liberation Mono" font-size="5" fill="#e8405a" text-anchor="middle" >4</text><path d="M555.0 352.0 V361.0" fill="none" stroke="#111" stroke-width="1.1" stroke-dasharray="1.8 1.4"/><rect x="642.1" y="341.5" width="68.7" height="40.1" rx="0" fill="none" stroke="#111" stroke-width="1.2" stroke-dasharray="3 2"/><rect x="666.3" y="346.5" width="15.4" height="30.2" rx="0" fill="#fff" stroke="#111" stroke-width="1.2"/><rect x="642.8" y="346.3" width="3.6" height="4.4" rx="0" fill="#fff" stroke="#111" stroke-width="1"/><path d="M644.6 351.3 q2.6 1.25 0 2.5 q2.6 1.25 0 2.5 q2.6 1.25 0 2.5 q2.6 1.25 0 2.5 q2.6 1.25 0 2.5 q2.6 1.25 0 2.5 q2.6 1.25 0 2.5 q2.6 1.25 0 2.5" fill="none" stroke="#111" stroke-width="1.8"/><rect x="648.4" y="351.3" width="2.2" height="20.0" rx="0" fill="#111" stroke="#111" stroke-width="0"/><path d="M650.6 351.3 L666.3 351.3" fill="none" stroke="#111" stroke-width="1.1"/><path d="M650.6 371.3 L666.3 371.3" fill="none" stroke="#111" stroke-width="1.1"/><path d="M637.0 356.5 L643.0 356.5" fill="none" stroke="#111" stroke-width="1"/><path d="M681.7 351.3 L710.8 351.3" fill="none" stroke="#111" stroke-width="1.1"/><path d="M681.7 371.3 L710.8 371.3" fill="none" stroke="#111" stroke-width="1.1"/><path d="M691.0 351.3 L691.0 357.2" fill="none" stroke="#111" stroke-width="1"/><path d="M691.0 362.6 L691.0 371.3" fill="none" stroke="#111" stroke-width="1"/><rect x="686.3" y="357.2" width="9.5" height="3.4" rx="0" fill="#fff" stroke="#111" stroke-width="1"/><path d="M686.3 362.6 L695.8 362.6" fill="none" stroke="#111" stroke-width="1.1"/><path d="M705.5 351.3 L705.5 371.3" fill="none" stroke="#111" stroke-width="1"/><rect x="704.3" y="356.0" width="2.6" height="10.4" rx="0" fill="#fff" stroke="#111" stroke-width="1"/><circle cx="691.0" cy="351.3" r="1.2" fill="#111" stroke="#111" stroke-width="0.6"/><circle cx="691.0" cy="371.3" r="1.2" fill="#111" stroke="#111" stroke-width="0.6"/><circle cx="705.5" cy="351.3" r="1.2" fill="#111" stroke="#111" stroke-width="0.6"/><circle cx="705.5" cy="371.3" r="1.2" fill="#111" stroke="#111" stroke-width="0.6"/><text x="677.0" y="336.5" font-family="Liberation Mono" font-size="5" fill="#3a3a3a" text-anchor="middle" >-T1.9</text><text x="633.0" y="349.5" font-family="Liberation Mono" font-size="4.5" fill="#e8405a" text-anchor="middle" >400</text><text x="713.0" y="349.5" font-family="Liberation Mono" font-size="4.5" fill="#e8405a" text-anchor="start" >L+</text><text x="713.0" y="369.5" font-family="Liberation Mono" font-size="4.5" fill="#e8405a" text-anchor="start" >M</text><text x="638.0" y="369.0" font-family="Liberation Mono" font-size="4.5" fill="#e8405a" text-anchor="start" >0</text><path d="M671 361.5 H677 M672.5 359 V364 L675.5 361.5 Z M675.8 359 V364" fill="none" stroke="#111" stroke-width="0.9"/><path d="M485.5 478.3 L852.5 478.3" fill="none" stroke="#111" stroke-width="1.3"/><path d="M485.5 478.3 L520.0 478.3" fill="none" stroke="#1c1c78" stroke-width="1.3"/><rect x="681.3" y="444.2" width="78.4" height="33.8" rx="0" fill="none" stroke="#111" stroke-width="1.1"/><text x="527.0" y="470.5" font-family="Liberation Mono" font-size="5" fill="#3a3a3a" text-anchor="middle" >-Q1.17</text><rect x="523.5" y="477.3" width="7" height="2" fill="#fff"/><path d="M523.5 478.3 H525.0 Q526.5 474.8 528.0 477.3 M528.5 478.3 H530.5" fill="none" stroke="#111" stroke-width="1.2"/><text x="520.0" y="475.8" font-family="Liberation Mono" font-size="5" fill="#e8405a" text-anchor="middle" >13</text><text x="534.0" y="475.8" font-family="Liberation Mono" font-size="5" fill="#e8405a" text-anchor="middle" >14</text><text x="570.0" y="470.5" font-family="Liberation Mono" font-size="5" fill="#3a3a3a" text-anchor="middle" >-Q1.25</text><rect x="566.5" y="477.3" width="7" height="2" fill="#fff"/><path d="M566.5 478.3 H568.0 Q569.5 474.8 571.0 477.3 M571.5 478.3 H573.5" fill="none" stroke="#111" stroke-width="1.2"/><text x="563.0" y="475.8" font-family="Liberation Mono" font-size="5" fill="#e8405a" text-anchor="middle" >13</text><text x="577.0" y="475.8" font-family="Liberation Mono" font-size="5" fill="#e8405a" text-anchor="middle" >14</text><text x="601.0" y="470.5" font-family="Liberation Mono" font-size="5" fill="#3a3a3a" text-anchor="middle" >-Q1.34</text><rect x="597.5" y="477.3" width="7" height="2" fill="#fff"/><path d="M597.5 478.3 H599.0 Q600.5 474.8 602.0 477.3 M602.5 478.3 H604.5" fill="none" stroke="#111" stroke-width="1.2"/><text x="594.0" y="475.8" font-family="Liberation Mono" font-size="5" fill="#e8405a" text-anchor="middle" >13</text><text x="608.0" y="475.8" font-family="Liberation Mono" font-size="5" fill="#e8405a" text-anchor="middle" >14</text><text x="646.0" y="466.5" font-family="Liberation Mono" font-size="5" fill="#3a3a3a" text-anchor="middle" >-S1.14</text><rect x="642.5" y="477.3" width="7" height="2" fill="#fff"/><path d="M642.5 478.3 H644.0 Q645.5 474.8 647.0 477.3 M647.5 478.3 H649.5" fill="none" stroke="#111" stroke-width="1.2"/><text x="639.0" y="475.8" font-family="Liberation Mono" font-size="5" fill="#e8405a" text-anchor="middle" >13</text><text x="653.0" y="475.8" font-family="Liberation Mono" font-size="5" fill="#e8405a" text-anchor="middle" >14</text><text x="718.0" y="436.5" font-family="Liberation Mono" font-size="5" fill="#3a3a3a" text-anchor="middle" >-K1.14</text><text x="717.0" y="466.0" font-family="Liberation Mono" font-size="5" fill="#3a3a3a" text-anchor="middle" >-S1.14.1</text><text x="717.0" y="471.0" font-family="Liberation Mono" font-size="4.6" fill="#3a3a3a" text-anchor="middle" >Push Button 3NO</text><rect x="714.5" y="443.2" width="7" height="2" fill="#fff"/><path d="M714.5 444.2 H716.0 Q717.5 440.7 719.0 443.2 M719.5 444.2 H721.5" fill="none" stroke="#111" stroke-width="1.2"/><text x="711.0" y="441.7" font-family="Liberation Mono" font-size="5" fill="#e8405a" text-anchor="middle" >33</text><text x="725.0" y="441.7" font-family="Liberation Mono" font-size="5" fill="#e8405a" text-anchor="middle" >34</text><rect x="714.5" y="477.3" width="7" height="2" fill="#fff"/><path d="M714.5 478.3 H716.0 Q717.5 474.8 719.0 477.3 M719.5 478.3 H721.5" fill="none" stroke="#111" stroke-width="1.2"/><text x="711.0" y="475.8" font-family="Liberation Mono" font-size="5" fill="#e8405a" text-anchor="middle" >33</text><text x="725.0" y="475.8" font-family="Liberation Mono" font-size="5" fill="#e8405a" text-anchor="middle" >34</text><path d="M716.0 471.0 L720.0 471.0" fill="none" stroke="#111" stroke-width="1"/><ellipse cx="645.5" cy="471" rx="2.5" ry="1.5" fill="none" stroke="#111" stroke-width="1"/><text x="800.0" y="476.0" font-family="Liberation Mono" font-size="5" fill="#e8405a" text-anchor="middle" >A1</text><text x="813.0" y="476.0" font-family="Liberation Mono" font-size="5" fill="#e8405a" text-anchor="middle" >A2</text><rect x="803.7" y="473.0" width="5.0" height="10.3" rx="0" fill="none" stroke="#111" stroke-width="1.2"/><text x="806.0" y="469.0" font-family="Liberation Mono" font-size="5" fill="#3a3a3a" text-anchor="middle" >-K1.14</text><path d="M461.3 542.5 L805.0 542.5 L808.0 547.5" fill="none" stroke="#111" stroke-width="1.3"/><path d="M465.5 552.5 L805.0 552.5 L808.0 552.5" fill="none" stroke="#111" stroke-width="1.3"/><path d="M470.3 562.5 L805.0 562.5 L808.0 557.5" fill="none" stroke="#111" stroke-width="1.3"/><circle cx="813.2" cy="552.5" r="7.8" fill="none" stroke="#111" stroke-width="1.2"/><path d="M690.8 571.3 L717.8 571.3" fill="none" stroke="#1faa2a" stroke-width="1.2" stroke-dasharray="6 1.5 1 1.5 3.5 1.5 1 1.5"/><path d="M717.8 571.3 L818.7 571.3 L818.7 559.5" fill="none" stroke="#111" stroke-width="1.1"/><rect x="534.2" y="537.0" width="10.5" height="29.3" rx="0" fill="none" stroke="#111" stroke-width="1.2"/><path d="M539.5 537.0 L539.5 566.3" fill="none" stroke="#111" stroke-width="1"/><circle cx="539.5" cy="542.5" r="1.3" fill="#111" stroke="#111" stroke-width="1"/><circle cx="539.5" cy="552.5" r="1.3" fill="#111" stroke="#111" stroke-width="1"/><circle cx="539.5" cy="562.5" r="1.3" fill="#111" stroke="#111" stroke-width="1"/><text x="538.0" y="529.5" font-family="Liberation Mono" font-size="5" fill="#3a3a3a" text-anchor="middle" >-Q1.17</text><text x="540.0" y="534.5" font-family="Liberation Mono" font-size="4.6" fill="#3a3a3a" text-anchor="middle" >Motor circuit protector 3P</text><text x="539.0" y="572.5" font-family="Liberation Mono" font-size="4.6" fill="#3a3a3a" text-anchor="middle" >motor protection wheel</text><circle cx="717.8" cy="542.5" r="1.8" fill="none" stroke="#111" stroke-width="1.1"/><path d="M755.0 545.5 L760.0 539.5" fill="none" stroke="#111" stroke-width="1"/><circle cx="717.8" cy="552.5" r="1.8" fill="none" stroke="#111" stroke-width="1.1"/><path d="M755.0 555.5 L760.0 549.5" fill="none" stroke="#111" stroke-width="1"/><circle cx="717.8" cy="562.5" r="1.8" fill="none" stroke="#111" stroke-width="1.1"/><path d="M755.0 565.5 L760.0 559.5" fill="none" stroke="#111" stroke-width="1"/><path d="M755.0 574.3 L760.0 568.3" fill="none" stroke="#111" stroke-width="1"/><circle cx="717.8" cy="571.3" r="1.8" fill="none" stroke="#111" stroke-width="1.1"/><text x="717.0" y="533.5" font-family="Liberation Mono" font-size="5" fill="#3a3a3a" text-anchor="middle" >-X1.17</text><text x="758.0" y="528.5" font-family="Liberation Mono" font-size="5" fill="#3a3a3a" text-anchor="middle" >-W1.17</text><text x="758.0" y="533.5" font-family="Liberation Mono" font-size="5" fill="#3a3a3a" text-anchor="middle" >4x 2.5mm2</text><text x="813.0" y="531.5" font-family="Liberation Mono" font-size="5" fill="#3a3a3a" text-anchor="middle" >-M1.17</text><text x="813.0" y="579.3" font-family="Liberation Mono" font-size="4.6" fill="#3a3a3a" text-anchor="middle" >Compressor</text><text x="520.0" y="540.0" font-family="Liberation Mono" font-size="5" fill="#e8405a" text-anchor="middle" >1</text><text x="549.0" y="540.0" font-family="Liberation Mono" font-size="5" fill="#e8405a" text-anchor="middle" >2</text><text x="796.0" y="540.5" font-family="Liberation Mono" font-size="5" fill="#e8405a" text-anchor="start" >U</text><text x="520.0" y="550.0" font-family="Liberation Mono" font-size="5" fill="#e8405a" text-anchor="middle" >3</text><text x="549.0" y="550.0" font-family="Liberation Mono" font-size="5" fill="#e8405a" text-anchor="middle" >4</text><text x="796.0" y="550.5" font-family="Liberation Mono" font-size="5" fill="#e8405a" text-anchor="start" >V</text><text x="520.0" y="560.0" font-family="Liberation Mono" font-size="5" fill="#e8405a" text-anchor="middle" >5</text><text x="549.0" y="560.0" font-family="Liberation Mono" font-size="5" fill="#e8405a" text-anchor="middle" >6</text><text x="796.0" y="560.5" font-family="Liberation Mono" font-size="5" fill="#e8405a" text-anchor="start" >W</text><rect x="624.8" y="541.5" width="7" height="2" fill="#fff"/><path d="M624.8 542.5 H626.3 Q627.8 539.0 629.3 541.5 M629.8 542.5 H631.8" fill="none" stroke="#111" stroke-width="1.2"/><text x="621.3" y="540.0" font-family="Liberation Mono" font-size="5" fill="#e8405a" text-anchor="middle" >1</text><text x="635.3" y="540.0" font-family="Liberation Mono" font-size="5" fill="#e8405a" text-anchor="middle" >2</text><rect x="522.5" y="541.5" width="7" height="2" fill="#fff"/><path d="M522.5 542.5 H524.0 Q525.5 539.0 527.0 541.5 M527.5 542.5 H529.5" fill="none" stroke="#111" stroke-width="1.2"/><rect x="624.8" y="551.5" width="7" height="2" fill="#fff"/><path d="M624.8 552.5 H626.3 Q627.8 549.0 629.3 551.5 M629.8 552.5 H631.8" fill="none" stroke="#111" stroke-width="1.2"/><text x="621.3" y="550.0" font-family="Liberation Mono" font-size="5" fill="#e8405a" text-anchor="middle" >3</text><text x="635.3" y="550.0" font-family="Liberation Mono" font-size="5" fill="#e8405a" text-anchor="middle" >4</text><rect x="522.5" y="551.5" width="7" height="2" fill="#fff"/><path d="M522.5 552.5 H524.0 Q525.5 549.0 527.0 551.5 M527.5 552.5 H529.5" fill="none" stroke="#111" stroke-width="1.2"/><rect x="624.8" y="561.5" width="7" height="2" fill="#fff"/><path d="M624.8 562.5 H626.3 Q627.8 559.0 629.3 561.5 M629.8 562.5 H631.8" fill="none" stroke="#111" stroke-width="1.2"/><text x="621.3" y="560.0" font-family="Liberation Mono" font-size="5" fill="#e8405a" text-anchor="middle" >5</text><text x="635.3" y="560.0" font-family="Liberation Mono" font-size="5" fill="#e8405a" text-anchor="middle" >6</text><rect x="522.5" y="561.5" width="7" height="2" fill="#fff"/><path d="M522.5 562.5 H524.0 Q525.5 559.0 527.0 561.5 M527.5 562.5 H529.5" fill="none" stroke="#111" stroke-width="1.2"/><path d="M628.3 542.5 V562.5" fill="none" stroke="#111" stroke-width="1.1" stroke-dasharray="1.8 1.4"/><path d="M526.0 542.5 V562.5" fill="none" stroke="#111" stroke-width="1.1" stroke-dasharray="1.8 1.4"/><text x="629.0" y="533.5" font-family="Liberation Mono" font-size="5" fill="#3a3a3a" text-anchor="middle" >-Q1.17.1</text><path d="M461.3 703.3 L805.0 703.3 L808.0 708.3" fill="none" stroke="#111" stroke-width="1.3"/><path d="M465.5 713.3 L805.0 713.3 L808.0 713.3" fill="none" stroke="#111" stroke-width="1.3"/><path d="M470.3 723.3 L805.0 723.3 L808.0 718.3" fill="none" stroke="#111" stroke-width="1.3"/><circle cx="813.2" cy="713.3" r="7.8" fill="none" stroke="#111" stroke-width="1.2"/><path d="M690.8 733.0 L717.8 733.0" fill="none" stroke="#1faa2a" stroke-width="1.2" stroke-dasharray="6 1.5 1 1.5 3.5 1.5 1 1.5"/><path d="M717.8 733.0 L818.7 733.0 L818.7 720.3" fill="none" stroke="#111" stroke-width="1.1"/><rect x="534.2" y="697.8" width="10.5" height="29.3" rx="0" fill="none" stroke="#111" stroke-width="1.2"/><path d="M539.5 697.8 L539.5 727.1" fill="none" stroke="#111" stroke-width="1"/><circle cx="539.5" cy="703.3" r="1.3" fill="#111" stroke="#111" stroke-width="1"/><circle cx="539.5" cy="713.3" r="1.3" fill="#111" stroke="#111" stroke-width="1"/><circle cx="539.5" cy="723.3" r="1.3" fill="#111" stroke="#111" stroke-width="1"/><text x="538.0" y="690.3" font-family="Liberation Mono" font-size="5" fill="#3a3a3a" text-anchor="middle" >-Q1.25</text><text x="540.0" y="695.3" font-family="Liberation Mono" font-size="4.6" fill="#3a3a3a" text-anchor="middle" >Motor circuit protector 3P</text><text x="539.0" y="733.3" font-family="Liberation Mono" font-size="4.6" fill="#3a3a3a" text-anchor="middle" >motor protection wheel</text><circle cx="717.8" cy="703.3" r="1.8" fill="none" stroke="#111" stroke-width="1.1"/><path d="M755.0 706.3 L760.0 700.3" fill="none" stroke="#111" stroke-width="1"/><circle cx="717.8" cy="713.3" r="1.8" fill="none" stroke="#111" stroke-width="1.1"/><path d="M755.0 716.3 L760.0 710.3" fill="none" stroke="#111" stroke-width="1"/><circle cx="717.8" cy="723.3" r="1.8" fill="none" stroke="#111" stroke-width="1.1"/><path d="M755.0 726.3 L760.0 720.3" fill="none" stroke="#111" stroke-width="1"/><path d="M755.0 736.0 L760.0 730.0" fill="none" stroke="#111" stroke-width="1"/><circle cx="717.8" cy="733.0" r="1.8" fill="none" stroke="#111" stroke-width="1.1"/><text x="717.0" y="694.3" font-family="Liberation Mono" font-size="5" fill="#3a3a3a" text-anchor="middle" >-X1.26</text><text x="758.0" y="689.3" font-family="Liberation Mono" font-size="5" fill="#3a3a3a" text-anchor="middle" >-W1.26</text><text x="758.0" y="694.3" font-family="Liberation Mono" font-size="5" fill="#3a3a3a" text-anchor="middle" >4x 2.5mm2</text><text x="813.0" y="692.3" font-family="Liberation Mono" font-size="5" fill="#3a3a3a" text-anchor="middle" >-M1.26</text><text x="813.0" y="741.0" font-family="Liberation Mono" font-size="4.6" fill="#3a3a3a" text-anchor="middle" >Compressor</text><text x="520.0" y="700.8" font-family="Liberation Mono" font-size="5" fill="#e8405a" text-anchor="middle" >1</text><text x="549.0" y="700.8" font-family="Liberation Mono" font-size="5" fill="#e8405a" text-anchor="middle" >2</text><text x="796.0" y="701.3" font-family="Liberation Mono" font-size="5" fill="#e8405a" text-anchor="start" >U</text><text x="520.0" y="710.8" font-family="Liberation Mono" font-size="5" fill="#e8405a" text-anchor="middle" >3</text><text x="549.0" y="710.8" font-family="Liberation Mono" font-size="5" fill="#e8405a" text-anchor="middle" >4</text><text x="796.0" y="711.3" font-family="Liberation Mono" font-size="5" fill="#e8405a" text-anchor="start" >V</text><text x="520.0" y="720.8" font-family="Liberation Mono" font-size="5" fill="#e8405a" text-anchor="middle" >5</text><text x="549.0" y="720.8" font-family="Liberation Mono" font-size="5" fill="#e8405a" text-anchor="middle" >6</text><text x="796.0" y="721.3" font-family="Liberation Mono" font-size="5" fill="#e8405a" text-anchor="start" >W</text><rect x="624.8" y="702.3" width="7" height="2" fill="#fff"/><path d="M624.8 703.3 H626.3 Q627.8 699.8 629.3 702.3 M629.8 703.3 H631.8" fill="none" stroke="#111" stroke-width="1.2"/><text x="621.3" y="700.8" font-family="Liberation Mono" font-size="5" fill="#e8405a" text-anchor="middle" >1</text><text x="635.3" y="700.8" font-family="Liberation Mono" font-size="5" fill="#e8405a" text-anchor="middle" >2</text><rect x="522.5" y="702.3" width="7" height="2" fill="#fff"/><path d="M522.5 703.3 H524.0 Q525.5 699.8 527.0 702.3 M527.5 703.3 H529.5" fill="none" stroke="#111" stroke-width="1.2"/><rect x="624.8" y="712.3" width="7" height="2" fill="#fff"/><path d="M624.8 713.3 H626.3 Q627.8 709.8 629.3 712.3 M629.8 713.3 H631.8" fill="none" stroke="#111" stroke-width="1.2"/><text x="621.3" y="710.8" font-family="Liberation Mono" font-size="5" fill="#e8405a" text-anchor="middle" >3</text><text x="635.3" y="710.8" font-family="Liberation Mono" font-size="5" fill="#e8405a" text-anchor="middle" >4</text><rect x="522.5" y="712.3" width="7" height="2" fill="#fff"/><path d="M522.5 713.3 H524.0 Q525.5 709.8 527.0 712.3 M527.5 713.3 H529.5" fill="none" stroke="#111" stroke-width="1.2"/><rect x="624.8" y="722.3" width="7" height="2" fill="#fff"/><path d="M624.8 723.3 H626.3 Q627.8 719.8 629.3 722.3 M629.8 723.3 H631.8" fill="none" stroke="#111" stroke-width="1.2"/><text x="621.3" y="720.8" font-family="Liberation Mono" font-size="5" fill="#e8405a" text-anchor="middle" >5</text><text x="635.3" y="720.8" font-family="Liberation Mono" font-size="5" fill="#e8405a" text-anchor="middle" >6</text><rect x="522.5" y="722.3" width="7" height="2" fill="#fff"/><path d="M522.5 723.3 H524.0 Q525.5 719.8 527.0 722.3 M527.5 723.3 H529.5" fill="none" stroke="#111" stroke-width="1.2"/><path d="M628.3 703.3 V723.3" fill="none" stroke="#111" stroke-width="1.1" stroke-dasharray="1.8 1.4"/><path d="M526.0 703.3 V723.3" fill="none" stroke="#111" stroke-width="1.1" stroke-dasharray="1.8 1.4"/><text x="629.0" y="694.3" font-family="Liberation Mono" font-size="5" fill="#3a3a3a" text-anchor="middle" >-Q1.26.1</text><path d="M461.3 865.3 L805.0 865.3 L808.0 870.3" fill="none" stroke="#111" stroke-width="1.3"/><path d="M465.5 875.3 L805.0 875.3 L808.0 875.3" fill="none" stroke="#111" stroke-width="1.3"/><path d="M470.3 885.3 L805.0 885.3 L808.0 880.3" fill="none" stroke="#111" stroke-width="1.3"/><circle cx="813.2" cy="875.3" r="7.8" fill="none" stroke="#111" stroke-width="1.2"/><path d="M690.8 894.0 L717.8 894.0" fill="none" stroke="#1faa2a" stroke-width="1.2" stroke-dasharray="6 1.5 1 1.5 3.5 1.5 1 1.5"/><path d="M717.8 894.0 L818.7 894.0 L818.7 882.3" fill="none" stroke="#111" stroke-width="1.1"/><rect x="534.2" y="859.8" width="10.5" height="29.3" rx="0" fill="none" stroke="#111" stroke-width="1.2"/><path d="M539.5 859.8 L539.5 889.1" fill="none" stroke="#111" stroke-width="1"/><circle cx="539.5" cy="865.3" r="1.3" fill="#111" stroke="#111" stroke-width="1"/><circle cx="539.5" cy="875.3" r="1.3" fill="#111" stroke="#111" stroke-width="1"/><circle cx="539.5" cy="885.3" r="1.3" fill="#111" stroke="#111" stroke-width="1"/><text x="538.0" y="852.3" font-family="Liberation Mono" font-size="5" fill="#3a3a3a" text-anchor="middle" >-Q1.34</text><text x="540.0" y="857.3" font-family="Liberation Mono" font-size="4.6" fill="#3a3a3a" text-anchor="middle" >Motor circuit protector 3P</text><text x="539.0" y="895.3" font-family="Liberation Mono" font-size="4.6" fill="#3a3a3a" text-anchor="middle" >motor protection wheel</text><circle cx="717.8" cy="865.3" r="1.8" fill="none" stroke="#111" stroke-width="1.1"/><path d="M755.0 868.3 L760.0 862.3" fill="none" stroke="#111" stroke-width="1"/><circle cx="717.8" cy="875.3" r="1.8" fill="none" stroke="#111" stroke-width="1.1"/><path d="M755.0 878.3 L760.0 872.3" fill="none" stroke="#111" stroke-width="1"/><circle cx="717.8" cy="885.3" r="1.8" fill="none" stroke="#111" stroke-width="1.1"/><path d="M755.0 888.3 L760.0 882.3" fill="none" stroke="#111" stroke-width="1"/><path d="M755.0 897.0 L760.0 891.0" fill="none" stroke="#111" stroke-width="1"/><circle cx="717.8" cy="894.0" r="1.8" fill="none" stroke="#111" stroke-width="1.1"/><text x="717.0" y="856.3" font-family="Liberation Mono" font-size="5" fill="#3a3a3a" text-anchor="middle" >-X1.34</text><text x="758.0" y="851.3" font-family="Liberation Mono" font-size="5" fill="#3a3a3a" text-anchor="middle" >-W1.34</text><text x="758.0" y="856.3" font-family="Liberation Mono" font-size="5" fill="#3a3a3a" text-anchor="middle" >4x 2.5mm2</text><text x="813.0" y="854.3" font-family="Liberation Mono" font-size="5" fill="#3a3a3a" text-anchor="middle" >-M1.34</text><text x="813.0" y="902.0" font-family="Liberation Mono" font-size="4.6" fill="#3a3a3a" text-anchor="middle" >Compressor</text><text x="520.0" y="862.8" font-family="Liberation Mono" font-size="5" fill="#e8405a" text-anchor="middle" >1</text><text x="549.0" y="862.8" font-family="Liberation Mono" font-size="5" fill="#e8405a" text-anchor="middle" >2</text><text x="796.0" y="863.3" font-family="Liberation Mono" font-size="5" fill="#e8405a" text-anchor="start" >U</text><text x="520.0" y="872.8" font-family="Liberation Mono" font-size="5" fill="#e8405a" text-anchor="middle" >3</text><text x="549.0" y="872.8" font-family="Liberation Mono" font-size="5" fill="#e8405a" text-anchor="middle" >4</text><text x="796.0" y="873.3" font-family="Liberation Mono" font-size="5" fill="#e8405a" text-anchor="start" >V</text><text x="520.0" y="882.8" font-family="Liberation Mono" font-size="5" fill="#e8405a" text-anchor="middle" >5</text><text x="549.0" y="882.8" font-family="Liberation Mono" font-size="5" fill="#e8405a" text-anchor="middle" >6</text><text x="796.0" y="883.3" font-family="Liberation Mono" font-size="5" fill="#e8405a" text-anchor="start" >W</text><rect x="624.8" y="864.3" width="7" height="2" fill="#fff"/><path d="M624.8 865.3 H626.3 Q627.8 861.8 629.3 864.3 M629.8 865.3 H631.8" fill="none" stroke="#111" stroke-width="1.2"/><text x="621.3" y="862.8" font-family="Liberation Mono" font-size="5" fill="#e8405a" text-anchor="middle" >1</text><text x="635.3" y="862.8" font-family="Liberation Mono" font-size="5" fill="#e8405a" text-anchor="middle" >2</text><rect x="522.5" y="864.3" width="7" height="2" fill="#fff"/><path d="M522.5 865.3 H524.0 Q525.5 861.8 527.0 864.3 M527.5 865.3 H529.5" fill="none" stroke="#111" stroke-width="1.2"/><rect x="624.8" y="874.3" width="7" height="2" fill="#fff"/><path d="M624.8 875.3 H626.3 Q627.8 871.8 629.3 874.3 M629.8 875.3 H631.8" fill="none" stroke="#111" stroke-width="1.2"/><text x="621.3" y="872.8" font-family="Liberation Mono" font-size="5" fill="#e8405a" text-anchor="middle" >3</text><text x="635.3" y="872.8" font-family="Liberation Mono" font-size="5" fill="#e8405a" text-anchor="middle" >4</text><rect x="522.5" y="874.3" width="7" height="2" fill="#fff"/><path d="M522.5 875.3 H524.0 Q525.5 871.8 527.0 874.3 M527.5 875.3 H529.5" fill="none" stroke="#111" stroke-width="1.2"/><rect x="624.8" y="884.3" width="7" height="2" fill="#fff"/><path d="M624.8 885.3 H626.3 Q627.8 881.8 629.3 884.3 M629.8 885.3 H631.8" fill="none" stroke="#111" stroke-width="1.2"/><text x="621.3" y="882.8" font-family="Liberation Mono" font-size="5" fill="#e8405a" text-anchor="middle" >5</text><text x="635.3" y="882.8" font-family="Liberation Mono" font-size="5" fill="#e8405a" text-anchor="middle" >6</text><rect x="522.5" y="884.3" width="7" height="2" fill="#fff"/><path d="M522.5 885.3 H524.0 Q525.5 881.8 527.0 884.3 M527.5 885.3 H529.5" fill="none" stroke="#111" stroke-width="1.2"/><path d="M628.3 865.3 V885.3" fill="none" stroke="#111" stroke-width="1.1" stroke-dasharray="1.8 1.4"/><path d="M526.0 865.3 V885.3" fill="none" stroke="#111" stroke-width="1.1" stroke-dasharray="1.8 1.4"/><text x="629.0" y="856.3" font-family="Liberation Mono" font-size="5" fill="#3a3a3a" text-anchor="middle" >-Q1.34.1</text><path d="M597.5 542.5 L597.5 601.0 L652.0 601.0 L652.0 562.5" fill="none" stroke="#111" stroke-width="1.3"/><path d="M602.5 552.5 L602.5 610.0 L656.7 610.0 L656.7 552.5" fill="none" stroke="#111" stroke-width="1.3"/><path d="M607.5 562.5 L607.5 620.0 L661.3 620.0 L661.3 542.5" fill="none" stroke="#111" stroke-width="1.3"/><rect x="624.8" y="600.0" width="7" height="2" fill="#fff"/><path d="M624.8 601.0 H626.3 Q627.8 597.5 629.3 600.0 M629.8 601.0 H631.8" fill="none" stroke="#111" stroke-width="1.2"/><text x="621.3" y="598.5" font-family="Liberation Mono" font-size="5" fill="#e8405a" text-anchor="middle" >1</text><text x="635.3" y="598.5" font-family="Liberation Mono" font-size="5" fill="#e8405a" text-anchor="middle" >2</text><rect x="624.8" y="609.0" width="7" height="2" fill="#fff"/><path d="M624.8 610.0 H626.3 Q627.8 606.5 629.3 609.0 M629.8 610.0 H631.8" fill="none" stroke="#111" stroke-width="1.2"/><text x="621.3" y="607.5" font-family="Liberation Mono" font-size="5" fill="#e8405a" text-anchor="middle" >3</text><text x="635.3" y="607.5" font-family="Liberation Mono" font-size="5" fill="#e8405a" text-anchor="middle" >4</text><rect x="624.8" y="619.0" width="7" height="2" fill="#fff"/><path d="M624.8 620.0 H626.3 Q627.8 616.5 629.3 619.0 M629.8 620.0 H631.8" fill="none" stroke="#111" stroke-width="1.2"/><text x="621.3" y="617.5" font-family="Liberation Mono" font-size="5" fill="#e8405a" text-anchor="middle" >5</text><text x="635.3" y="617.5" font-family="Liberation Mono" font-size="5" fill="#e8405a" text-anchor="middle" >6</text><path d="M628.3 601.0 V620.0" fill="none" stroke="#111" stroke-width="1.1" stroke-dasharray="1.8 1.4"/><text x="629.0" y="595.0" font-family="Liberation Mono" font-size="5" fill="#3a3a3a" text-anchor="middle" >-Q1.21</text><text x="455.0" y="993.0" font-family="Liberation Mono" font-size="4" fill="#3a3a3a" text-anchor="start" >1L1 1L2 1L3</text><text x="482.0" y="993.0" font-family="Liberation Mono" font-size="4" fill="#3a3a3a" text-anchor="start" >N</text><text x="848.0" y="993.0" font-family="Liberation Mono" font-size="4" fill="#3a3a3a" text-anchor="start" >PE</text><path d="M935.6 232.4 L935.6 992.5" fill="none" stroke="#111" stroke-width="1.3"/><path d="M940.2 232.4 L940.2 992.5" fill="none" stroke="#111" stroke-width="1.3"/><text x="930.0" y="237.0" font-family="Liberation Mono" font-size="4.6" fill="#3a3a3a" text-anchor="start" >L1+</text><path d="M1312.9 232.4 L1312.9 415.5" fill="none" stroke="#111" stroke-width="1.3"/><path d="M1317.4 232.4 L1317.4 738.4" fill="none" stroke="#111" stroke-width="1.3"/><text x="1306.0" y="237.0" font-family="Liberation Mono" font-size="4.6" fill="#3a3a3a" text-anchor="start" >L1+</text><path d="M969.5 389.8 V271.5 Q969.5 268.5 972.5 268.5 H1045.5 Q1048.5 268.5 1048.5 271.5 V386.8 Q1048.5 389.8 1045.5 389.8 H972.5 Q969.5 389.8 969.5 386.8" fill="none" stroke="#111" stroke-width="1.3"/><path d="M971.0 279.3 L1047.0 279.3" fill="none" stroke="#111" stroke-width="1.1" stroke-dasharray="1 1.2"/><text x="1009.0" y="288.0" font-family="Liberation Sans" font-size="6.5" fill="#1a9a9a" text-anchor="middle" font-weight="bold">SIEMENS</text><path d="M969.5 293.0 L1048.5 293.0" fill="none" stroke="#111" stroke-width="1.2"/><path d="M969.5 351.0 L1048.5 351.0" fill="none" stroke="#111" stroke-width="1.2"/><path d="M935.6 273.7 L969.5 273.7" fill="none" stroke="#111" stroke-width="1.3"/><path d="M940.2 278.7 L969.5 278.7" fill="none" stroke="#111" stroke-width="1.3"/><rect x="970.0" y="293.5" width="27.0" height="8.0" rx="0" fill="none" stroke="#111" stroke-width="1"/><text x="972.0" y="300.0" font-family="Liberation Mono" font-size="5" fill="#3a3a3a" text-anchor="start" >SIMATIC</text><rect x="1011.0" y="300.0" width="2.5" height="29.0" rx="0" fill="#fff" stroke="#111" stroke-width="1.3"/><rect x="1038.0" y="305.0" width="5.0" height="34.0" rx="0" fill="none" stroke="#111" stroke-width="1.3"/><ellipse cx="996.5" cy="335" rx="3" ry="7" fill="none" stroke="#111" stroke-width="1.1"/><text x="976.0" y="320.0" font-family="Liberation Mono" font-size="4.6" fill="#3a3a3a" text-anchor="start" >RUN-P</text><text x="976.0" y="330.0" font-family="Liberation Mono" font-size="4.6" fill="#3a3a3a" text-anchor="start" >RUN</text><text x="976.0" y="340.0" font-family="Liberation Mono" font-size="4.6" fill="#3a3a3a" text-anchor="start" >STOP</text><text x="976.0" y="350.0" font-family="Liberation Mono" font-size="4.6" fill="#3a3a3a" text-anchor="start" >MRES</text><text x="1016.0" y="303.0" font-family="Liberation Mono" font-size="4.6" fill="#3a3a3a" text-anchor="start" >SF</text><text x="1016.0" y="311.0" font-family="Liberation Mono" font-size="4.6" fill="#3a3a3a" text-anchor="start" >DC5V</text><text x="1016.0" y="316.0" font-family="Liberation Mono" font-size="4.6" fill="#3a3a3a" text-anchor="start" >FRCE</text><text x="1016.0" y="321.0" font-family="Liberation Mono" font-size="4.6" fill="#3a3a3a" text-anchor="start" >RUN</text><text x="1016.0" y="326.0" font-family="Liberation Mono" font-size="4.6" fill="#3a3a3a" text-anchor="start" >STOP</text><path d="M1004.5 351.0 L1004.5 389.8" fill="none" stroke="#111" stroke-width="1.2"/><circle cx="975.0" cy="368.0" r="2.5" fill="none" stroke="#111" stroke-width="1.2"/><text x="980.0" y="366.0" font-family="Liberation Mono" font-size="4.6" fill="#3a3a3a" text-anchor="start" >SIMATIC</text><text x="980.0" y="372.0" font-family="Liberation Mono" font-size="4.6" fill="#3a3a3a" text-anchor="start" >S7-300</text><path d="M1016 363 Q1013 372 1016 382 H1020 V363 Z" fill="none" stroke="#111" stroke-width="1.1"/><path d="M1039 363 Q1036 372 1039 382 H1043 V363 Z" fill="none" stroke="#111" stroke-width="1.1"/><text x="1014.0" y="388.0" font-family="Liberation Mono" font-size="4.6" fill="#3a3a3a" text-anchor="start" >MPI</text><text x="1037.0" y="388.0" font-family="Liberation Mono" font-size="4.6" fill="#3a3a3a" text-anchor="start" >DP</text><text x="945.0" y="336.0" font-family="Liberation Mono" font-size="5" fill="#3a3a3a" text-anchor="start" >-X2</text><path d="M969.5 581.3 V393.2 Q969.5 390.2 972.5 390.2 H1045.5 Q1048.5 390.2 1048.5 393.2 V578.3 Q1048.5 581.3 1045.5 581.3 H972.5 Q969.5 581.3 969.5 578.3" fill="none" stroke="#111" stroke-width="1.3"/><path d="M971.0 401.0 L1047.0 401.0" fill="none" stroke="#111" stroke-width="1.1" stroke-dasharray="1 1.2"/><text x="1009.0" y="409.7" font-family="Liberation Sans" font-size="6.5" fill="#1a9a9a" text-anchor="middle" font-weight="bold">SIEMENS</text><path d="M969.5 414.7 L1048.5 414.7" fill="none" stroke="#111" stroke-width="1.2"/><path d="M969.5 498.2 L1048.5 498.2" fill="none" stroke="#111" stroke-width="1.2"/><path d="M940.2 394.7 L969.5 394.7" fill="none" stroke="#111" stroke-width="1.3"/><text x="942.0" y="455.0" font-family="Liberation Mono" font-size="5" fill="#3a3a3a" text-anchor="start" >-X1.152</text><text x="1035.0" y="425.5" font-family="Liberation Mono" font-size="4.6" fill="#3a3a3a" text-anchor="end" >Taster vorwärts E0.0</text><text x="1044.0" y="425.5" font-family="Liberation Mono" font-size="5" fill="#e8405a" text-anchor="start" >2</text><text x="1035.0" y="435.3" font-family="Liberation Mono" font-size="4.6" fill="#3a3a3a" text-anchor="end" >Taster rückwärts E0.1</text><text x="1044.0" y="435.3" font-family="Liberation Mono" font-size="5" fill="#e8405a" text-anchor="start" >3</text><text x="1035.0" y="445.1" font-family="Liberation Mono" font-size="4.6" fill="#3a3a3a" text-anchor="end" >E0.2</text><text x="1044.0" y="445.1" font-family="Liberation Mono" font-size="5" fill="#e8405a" text-anchor="start" >4</text><text x="1035.0" y="454.9" font-family="Liberation Mono" font-size="4.6" fill="#3a3a3a" text-anchor="end" >E0.3</text><text x="1044.0" y="454.9" font-family="Liberation Mono" font-size="5" fill="#e8405a" text-anchor="start" >5</text><text x="1035.0" y="464.7" font-family="Liberation Mono" font-size="4.6" fill="#3a3a3a" text-anchor="end" >E0.4</text><text x="1044.0" y="464.7" font-family="Liberation Mono" font-size="5" fill="#e8405a" text-anchor="start" >6</text><text x="1035.0" y="474.5" font-family="Liberation Mono" font-size="4.6" fill="#3a3a3a" text-anchor="end" >E0.5</text><text x="1044.0" y="474.5" font-family="Liberation Mono" font-size="5" fill="#e8405a" text-anchor="start" >7</text><text x="1035.0" y="484.3" font-family="Liberation Mono" font-size="4.6" fill="#3a3a3a" text-anchor="end" >E0.6</text><text x="1044.0" y="484.3" font-family="Liberation Mono" font-size="5" fill="#e8405a" text-anchor="start" >8</text><text x="1035.0" y="494.1" font-family="Liberation Mono" font-size="4.6" fill="#3a3a3a" text-anchor="end" >E0.7</text><text x="1044.0" y="494.1" font-family="Liberation Mono" font-size="5" fill="#e8405a" text-anchor="start" >9</text><text x="1035.0" y="508.0" font-family="Liberation Mono" font-size="4.6" fill="#3a3a3a" text-anchor="end" >E1.0</text><text x="1044.0" y="508.0" font-family="Liberation Mono" font-size="5" fill="#e8405a" text-anchor="start" >12</text><text x="1035.0" y="517.8" font-family="Liberation Mono" font-size="4.6" fill="#3a3a3a" text-anchor="end" >E1.1</text><text x="1044.0" y="517.8" font-family="Liberation Mono" font-size="5" fill="#e8405a" text-anchor="start" >13</text><text x="1035.0" y="527.6" font-family="Liberation Mono" font-size="4.6" fill="#3a3a3a" text-anchor="end" >E1.2</text><text x="1044.0" y="527.6" font-family="Liberation Mono" font-size="5" fill="#e8405a" text-anchor="start" >14</text><text x="1035.0" y="537.4" font-family="Liberation Mono" font-size="4.6" fill="#3a3a3a" text-anchor="end" >E1.3</text><text x="1044.0" y="537.4" font-family="Liberation Mono" font-size="5" fill="#e8405a" text-anchor="start" >15</text><text x="1035.0" y="547.2" font-family="Liberation Mono" font-size="4.6" fill="#3a3a3a" text-anchor="end" >E1.4</text><text x="1044.0" y="547.2" font-family="Liberation Mono" font-size="5" fill="#e8405a" text-anchor="start" >16</text><text x="1035.0" y="557.0" font-family="Liberation Mono" font-size="4.6" fill="#3a3a3a" text-anchor="end" >E1.5</text><text x="1044.0" y="557.0" font-family="Liberation Mono" font-size="5" fill="#e8405a" text-anchor="start" >17</text><text x="1035.0" y="566.8" font-family="Liberation Mono" font-size="4.6" fill="#3a3a3a" text-anchor="end" >E1.6</text><text x="1044.0" y="566.8" font-family="Liberation Mono" font-size="5" fill="#e8405a" text-anchor="start" >18</text><text x="1035.0" y="576.6" font-family="Liberation Mono" font-size="4.6" fill="#3a3a3a" text-anchor="end" >E1.7</text><text x="1044.0" y="576.6" font-family="Liberation Mono" font-size="5" fill="#e8405a" text-anchor="start" >19</text><path d="M1048.5 424.8 L1077.2 424.8 L1077.2 390.7 L1312.9 390.7" fill="none" stroke="#111" stroke-width="1.3"/><path d="M1048.5 434.0 L1082.3 434.0 L1082.3 415.5 L1312.9 415.5" fill="none" stroke="#111" stroke-width="1.3"/><rect x="1179.5" y="389.7" width="7" height="2" fill="#fff"/><path d="M1179.5 390.7 H1181.0 Q1182.5 387.2 1184.0 389.7 M1184.5 390.7 H1186.5" fill="none" stroke="#111" stroke-width="1.2"/><text x="1176.0" y="388.2" font-family="Liberation Mono" font-size="5" fill="#e8405a" text-anchor="middle" >13</text><text x="1190.0" y="388.2" font-family="Liberation Mono" font-size="5" fill="#e8405a" text-anchor="middle" >14</text><path d="M1181.0 384.7 L1185.0 384.7" fill="none" stroke="#111" stroke-width="1"/><path d="M1183.0 384.7 V388.7" fill="none" stroke="#111" stroke-width="1.1" stroke-dasharray="1.8 1.4"/><text x="1183.0" y="381.7" font-family="Liberation Mono" font-size="5" fill="#3a3a3a" text-anchor="middle" >-S1.152</text><rect x="1179.5" y="414.5" width="7" height="2" fill="#fff"/><path d="M1179.5 415.5 H1181.0 Q1182.5 412.0 1184.0 414.5 M1184.5 415.5 H1186.5" fill="none" stroke="#111" stroke-width="1.2"/><text x="1176.0" y="413.0" font-family="Liberation Mono" font-size="5" fill="#e8405a" text-anchor="middle" >13</text><text x="1190.0" y="413.0" font-family="Liberation Mono" font-size="5" fill="#e8405a" text-anchor="middle" >14</text><path d="M1181.0 409.5 L1185.0 409.5" fill="none" stroke="#111" stroke-width="1"/><path d="M1183.0 409.5 V413.5" fill="none" stroke="#111" stroke-width="1.1" stroke-dasharray="1.8 1.4"/><text x="1183.0" y="406.5" font-family="Liberation Mono" font-size="5" fill="#3a3a3a" text-anchor="middle" >-S1.153</text><path d="M969.5 772 V584.7 Q969.5 581.7 972.5 581.7 H1045.5 Q1048.5 581.7 1048.5 584.7 V769 Q1048.5 772 1045.5 772 H972.5 Q969.5 772 969.5 769" fill="none" stroke="#111" stroke-width="1.3"/><path d="M971.0 592.5 L1047.0 592.5" fill="none" stroke="#111" stroke-width="1.1" stroke-dasharray="1 1.2"/><text x="1009.0" y="601.2" font-family="Liberation Sans" font-size="6.5" fill="#1a9a9a" text-anchor="middle" font-weight="bold">SIEMENS</text><path d="M969.5 606.2 L1048.5 606.2" fill="none" stroke="#111" stroke-width="1.2"/><path d="M969.5 689.3 L1048.5 689.3" fill="none" stroke="#111" stroke-width="1.2"/><path d="M935.6 586.0 L969.5 586.0" fill="none" stroke="#111" stroke-width="1.3"/><path d="M940.2 590.9 L969.5 590.9" fill="none" stroke="#111" stroke-width="1.3"/><path d="M935.6 596.6 L969.5 596.6" fill="none" stroke="#111" stroke-width="1.3"/><path d="M940.2 600.9 L969.5 600.9" fill="none" stroke="#111" stroke-width="1.3"/><text x="945.0" y="669.0" font-family="Liberation Mono" font-size="5" fill="#3a3a3a" text-anchor="start" >-X1.158</text><text x="1035.0" y="616.0" font-family="Liberation Mono" font-size="4.6" fill="#3a3a3a" text-anchor="end" >Motor vorwärts A0.0</text><text x="1044.0" y="616.0" font-family="Liberation Mono" font-size="5" fill="#e8405a" text-anchor="start" >2</text><text x="1035.0" y="625.8" font-family="Liberation Mono" font-size="4.6" fill="#3a3a3a" text-anchor="end" >Motor rückwärts A0.1</text><text x="1044.0" y="625.8" font-family="Liberation Mono" font-size="5" fill="#e8405a" text-anchor="start" >3</text><text x="1035.0" y="635.6" font-family="Liberation Mono" font-size="4.6" fill="#3a3a3a" text-anchor="end" >Schnecke Ein A0.2</text><text x="1044.0" y="635.6" font-family="Liberation Mono" font-size="5" fill="#e8405a" text-anchor="start" >4</text><text x="1035.0" y="645.4" font-family="Liberation Mono" font-size="4.6" fill="#3a3a3a" text-anchor="end" >Kompressor A0.3</text><text x="1044.0" y="645.4" font-family="Liberation Mono" font-size="5" fill="#e8405a" text-anchor="start" >5</text><text x="1035.0" y="655.2" font-family="Liberation Mono" font-size="4.6" fill="#3a3a3a" text-anchor="end" >A0.4</text><text x="1044.0" y="655.2" font-family="Liberation Mono" font-size="5" fill="#e8405a" text-anchor="start" >6</text><text x="1035.0" y="665.0" font-family="Liberation Mono" font-size="4.6" fill="#3a3a3a" text-anchor="end" >A0.5</text><text x="1044.0" y="665.0" font-family="Liberation Mono" font-size="5" fill="#e8405a" text-anchor="start" >7</text><text x="1035.0" y="674.8" font-family="Liberation Mono" font-size="4.6" fill="#3a3a3a" text-anchor="end" >A0.6</text><text x="1044.0" y="674.8" font-family="Liberation Mono" font-size="5" fill="#e8405a" text-anchor="start" >8</text><text x="1035.0" y="684.6" font-family="Liberation Mono" font-size="4.6" fill="#3a3a3a" text-anchor="end" >A0.7</text><text x="1044.0" y="684.6" font-family="Liberation Mono" font-size="5" fill="#e8405a" text-anchor="start" >9</text><text x="1035.0" y="700.0" font-family="Liberation Mono" font-size="4.6" fill="#3a3a3a" text-anchor="end" >Anlage Ein A1.0</text><text x="1044.0" y="700.0" font-family="Liberation Mono" font-size="5" fill="#e8405a" text-anchor="start" >12</text><text x="1035.0" y="709.8" font-family="Liberation Mono" font-size="4.6" fill="#3a3a3a" text-anchor="end" >Tisch auf A1.1</text><text x="1044.0" y="709.8" font-family="Liberation Mono" font-size="5" fill="#e8405a" text-anchor="start" >13</text><text x="1035.0" y="719.6" font-family="Liberation Mono" font-size="4.6" fill="#3a3a3a" text-anchor="end" >Tisch ab A1.2</text><text x="1044.0" y="719.6" font-family="Liberation Mono" font-size="5" fill="#e8405a" text-anchor="start" >14</text><text x="1035.0" y="729.4" font-family="Liberation Mono" font-size="4.6" fill="#3a3a3a" text-anchor="end" >Material vor A1.3</text><text x="1044.0" y="729.4" font-family="Liberation Mono" font-size="5" fill="#e8405a" text-anchor="start" >15</text><text x="1035.0" y="739.2" font-family="Liberation Mono" font-size="4.6" fill="#3a3a3a" text-anchor="end" >Material zurück A1.4</text><text x="1044.0" y="739.2" font-family="Liberation Mono" font-size="5" fill="#e8405a" text-anchor="start" >16</text><text x="1035.0" y="749.0" font-family="Liberation Mono" font-size="4.6" fill="#3a3a3a" text-anchor="end" >A1.5</text><text x="1044.0" y="749.0" font-family="Liberation Mono" font-size="5" fill="#e8405a" text-anchor="start" >17</text><text x="1035.0" y="758.8" font-family="Liberation Mono" font-size="4.6" fill="#3a3a3a" text-anchor="end" >A1.6</text><text x="1044.0" y="758.8" font-family="Liberation Mono" font-size="5" fill="#e8405a" text-anchor="start" >18</text><text x="1035.0" y="768.6" font-family="Liberation Mono" font-size="4.6" fill="#3a3a3a" text-anchor="end" >A1.7</text><text x="1044.0" y="768.6" font-family="Liberation Mono" font-size="5" fill="#e8405a" text-anchor="start" >19</text><path d="M1048.5 615.2 L1121.2 615.2 L1121.2 547.2 L1317.4 547.2" fill="none" stroke="#111" stroke-width="1.3"/><rect x="1185.0" y="542.2" width="4.5" height="10.0" rx="0" fill="#fff" stroke="#111" stroke-width="1.2"/><text x="1187.0" y="539.2" font-family="Liberation Mono" font-size="5" fill="#3a3a3a" text-anchor="middle" >-K1.17.1</text><text x="1178.0" y="545.2" font-family="Liberation Mono" font-size="4.5" fill="#e8405a" text-anchor="middle" >A1</text><text x="1196.0" y="545.2" font-family="Liberation Mono" font-size="4.5" fill="#e8405a" text-anchor="middle" >A2</text><path d="M1048.5 625.0 L1126.4 625.0 L1126.4 571.3 L1317.4 571.3" fill="none" stroke="#111" stroke-width="1.3"/><rect x="1185.0" y="566.3" width="4.5" height="10.0" rx="0" fill="#fff" stroke="#111" stroke-width="1.2"/><text x="1187.0" y="563.3" font-family="Liberation Mono" font-size="5" fill="#3a3a3a" text-anchor="middle" >-K1.21</text><text x="1178.0" y="569.3" font-family="Liberation Mono" font-size="4.5" fill="#e8405a" text-anchor="middle" >A1</text><text x="1196.0" y="569.3" font-family="Liberation Mono" font-size="4.5" fill="#e8405a" text-anchor="middle" >A2</text><path d="M1048.5 634.9 L1131.3 634.9 L1131.3 601.7 L1317.4 601.7" fill="none" stroke="#111" stroke-width="1.3"/><rect x="1185.0" y="596.7" width="4.5" height="10.0" rx="0" fill="#fff" stroke="#111" stroke-width="1.2"/><text x="1187.0" y="593.7" font-family="Liberation Mono" font-size="5" fill="#3a3a3a" text-anchor="middle" >-K1.26.1</text><text x="1178.0" y="599.7" font-family="Liberation Mono" font-size="4.5" fill="#e8405a" text-anchor="middle" >A1</text><text x="1196.0" y="599.7" font-family="Liberation Mono" font-size="4.5" fill="#e8405a" text-anchor="middle" >A2</text><path d="M1048.5 645.3 L1136.5 645.3 L1136.5 630.7 L1317.4 630.7" fill="none" stroke="#111" stroke-width="1.3"/><rect x="1185.0" y="625.7" width="4.5" height="10.0" rx="0" fill="#fff" stroke="#111" stroke-width="1.2"/><text x="1187.0" y="622.7" font-family="Liberation Mono" font-size="5" fill="#3a3a3a" text-anchor="middle" >-K1.34.1</text><text x="1178.0" y="628.7" font-family="Liberation Mono" font-size="4.5" fill="#e8405a" text-anchor="middle" >A1</text><text x="1196.0" y="628.7" font-family="Liberation Mono" font-size="4.5" fill="#e8405a" text-anchor="middle" >A2</text><rect x="1147.5" y="546.2" width="7" height="2" fill="#fff"/><path d="M1147.5 547.2 H1149.0 Q1150.5 543.7 1152.0 546.2 M1152.5 547.2 H1154.5" fill="none" stroke="#111" stroke-width="1.2"/><text x="1144.0" y="544.7" font-family="Liberation Mono" font-size="5" fill="#e8405a" text-anchor="middle" >21</text><text x="1158.0" y="544.7" font-family="Liberation Mono" font-size="5" fill="#e8405a" text-anchor="middle" >22</text><text x="1151.0" y="539.2" font-family="Liberation Mono" font-size="5" fill="#3a3a3a" text-anchor="middle" >-Q1.21</text><rect x="1147.5" y="570.3" width="7" height="2" fill="#fff"/><path d="M1147.5 571.3 H1149.0 Q1150.5 567.8 1152.0 570.3 M1152.5 571.3 H1154.5" fill="none" stroke="#111" stroke-width="1.2"/><text x="1144.0" y="568.8" font-family="Liberation Mono" font-size="5" fill="#e8405a" text-anchor="middle" >21</text><text x="1158.0" y="568.8" font-family="Liberation Mono" font-size="5" fill="#e8405a" text-anchor="middle" >22</text><text x="1151.0" y="563.3" font-family="Liberation Mono" font-size="5" fill="#3a3a3a" text-anchor="middle" >-Q1.17.1</text><path d="M1048.5 699.0 L1136.5 699.0 L1136.5 654.3 L1317.4 654.3" fill="none" stroke="#111" stroke-width="1.3"/><circle cx="1187.3" cy="654.3" r="3" fill="#fff" stroke="#111" stroke-width="1.1"/><path d="M1185.2 652.2 L1189.4 656.4" fill="none" stroke="#111" stroke-width="0.9"/><path d="M1189.4 652.2 L1185.2 656.4" fill="none" stroke="#111" stroke-width="0.9"/><text x="1187.0" y="647.0" font-family="Liberation Mono" font-size="5" fill="#3a3a3a" text-anchor="middle" >-P1.164</text><text x="1179.0" y="653.0" font-family="Liberation Mono" font-size="4.5" fill="#e8405a" text-anchor="middle" >X1</text><text x="1196.0" y="653.0" font-family="Liberation Mono" font-size="4.5" fill="#e8405a" text-anchor="middle" >X2</text><path d="M1141.1 708.4 L1141.1 684.2 L1234.0 684.2 L1234.0 708.4 L1317.4 708.4" fill="none" stroke="#111" stroke-width="1.3"/><path d="M1048.5 708.4 L1141.1 708.4" fill="none" stroke="#111" stroke-width="1.3"/><path d="M1048.5 718.4 L1317.4 718.4" fill="none" stroke="#111" stroke-width="1.3"/><path d="M1048.5 728.2 L1141.1 728.2 L1141.1 752.1 L1234.0 752.1 L1234.0 728.2 L1317.4 728.2" fill="none" stroke="#111" stroke-width="1.3"/><path d="M1048.5 738.4 L1136.5 738.4 L1136.5 787.1 L1238.4 787.1 L1238.4 738.4 L1317.4 738.4" fill="none" stroke="#111" stroke-width="1.3"/><rect x="1185.0" y="679.2" width="4.5" height="10.0" rx="0" fill="#fff" stroke="#111" stroke-width="1.2"/><rect x="1182.0" y="672.2" width="10.0" height="3.5" rx="1.5" fill="none" stroke="#111" stroke-width="1"/><text x="1187.0" y="669.2" font-family="Liberation Mono" font-size="5" fill="#3a3a3a" text-anchor="middle" >-K1.171</text><path d="M1157.0 686.2 L1162.0 682.2" fill="none" stroke="#111" stroke-width="1"/><path d="M1211.0 686.2 L1216.0 682.2" fill="none" stroke="#111" stroke-width="1"/><text x="1160.0" y="674.2" font-family="Liberation Mono" font-size="4.6" fill="#3a3a3a" text-anchor="middle" >-W5</text><text x="1213.0" y="674.2" font-family="Liberation Mono" font-size="4.6" fill="#3a3a3a" text-anchor="middle" >-W5</text><text x="1178.0" y="682.2" font-family="Liberation Mono" font-size="4.5" fill="#e8405a" text-anchor="middle" >A1</text><text x="1196.0" y="682.2" font-family="Liberation Mono" font-size="4.5" fill="#e8405a" text-anchor="middle" >A2</text><text x="1158.0" y="682.2" font-family="Liberation Mono" font-size="4.5" fill="#e8405a" text-anchor="middle" >BN</text><text x="1212.0" y="682.2" font-family="Liberation Mono" font-size="4.5" fill="#e8405a" text-anchor="middle" >BU</text><path d="M1180.0 672.7 L1182.0 672.7" fill="none" stroke="#111" stroke-width="1.2"/><path d="M1192.0 672.7 L1194.0 672.7" fill="none" stroke="#111" stroke-width="1.2"/><rect x="1185.0" y="713.4" width="4.5" height="10.0" rx="0" fill="#fff" stroke="#111" stroke-width="1.2"/><rect x="1182.0" y="706.4" width="10.0" height="3.5" rx="1.5" fill="none" stroke="#111" stroke-width="1"/><text x="1187.0" y="703.4" font-family="Liberation Mono" font-size="5" fill="#3a3a3a" text-anchor="middle" >-K1.172</text><path d="M1157.0 720.4 L1162.0 716.4" fill="none" stroke="#111" stroke-width="1"/><path d="M1211.0 720.4 L1216.0 716.4" fill="none" stroke="#111" stroke-width="1"/><text x="1160.0" y="708.4" font-family="Liberation Mono" font-size="4.6" fill="#3a3a3a" text-anchor="middle" >-W5</text><text x="1213.0" y="708.4" font-family="Liberation Mono" font-size="4.6" fill="#3a3a3a" text-anchor="middle" >-W5</text><text x="1178.0" y="716.4" font-family="Liberation Mono" font-size="4.5" fill="#e8405a" text-anchor="middle" >A1</text><text x="1196.0" y="716.4" font-family="Liberation Mono" font-size="4.5" fill="#e8405a" text-anchor="middle" >A2</text><text x="1158.0" y="716.4" font-family="Liberation Mono" font-size="4.5" fill="#e8405a" text-anchor="middle" >BN</text><text x="1212.0" y="716.4" font-family="Liberation Mono" font-size="4.5" fill="#e8405a" text-anchor="middle" >BU</text><path d="M1180.0 706.9 L1182.0 706.9" fill="none" stroke="#111" stroke-width="1.2"/><path d="M1192.0 706.9 L1194.0 706.9" fill="none" stroke="#111" stroke-width="1.2"/><rect x="1185.0" y="747.1" width="4.5" height="10.0" rx="0" fill="#fff" stroke="#111" stroke-width="1.2"/><rect x="1182.0" y="740.1" width="10.0" height="3.5" rx="1.5" fill="none" stroke="#111" stroke-width="1"/><text x="1187.0" y="737.1" font-family="Liberation Mono" font-size="5" fill="#3a3a3a" text-anchor="middle" >-K1.174</text><path d="M1157.0 754.1 L1162.0 750.1" fill="none" stroke="#111" stroke-width="1"/><path d="M1211.0 754.1 L1216.0 750.1" fill="none" stroke="#111" stroke-width="1"/><text x="1160.0" y="742.1" font-family="Liberation Mono" font-size="4.6" fill="#3a3a3a" text-anchor="middle" >-W5</text><text x="1213.0" y="742.1" font-family="Liberation Mono" font-size="4.6" fill="#3a3a3a" text-anchor="middle" >-W5</text><text x="1178.0" y="750.1" font-family="Liberation Mono" font-size="4.5" fill="#e8405a" text-anchor="middle" >A1</text><text x="1196.0" y="750.1" font-family="Liberation Mono" font-size="4.5" fill="#e8405a" text-anchor="middle" >A2</text><text x="1158.0" y="750.1" font-family="Liberation Mono" font-size="4.5" fill="#e8405a" text-anchor="middle" >BN</text><text x="1212.0" y="750.1" font-family="Liberation Mono" font-size="4.5" fill="#e8405a" text-anchor="middle" >BU</text><path d="M1180.0 740.6 L1182.0 740.6" fill="none" stroke="#111" stroke-width="1.2"/><path d="M1192.0 740.6 L1194.0 740.6" fill="none" stroke="#111" stroke-width="1.2"/><rect x="1185.0" y="782.1" width="4.5" height="10.0" rx="0" fill="#fff" stroke="#111" stroke-width="1.2"/><rect x="1182.0" y="775.1" width="10.0" height="3.5" rx="1.5" fill="none" stroke="#111" stroke-width="1"/><text x="1187.0" y="772.1" font-family="Liberation Mono" font-size="5" fill="#3a3a3a" text-anchor="middle" >-K1.175</text><path d="M1157.0 789.1 L1162.0 785.1" fill="none" stroke="#111" stroke-width="1"/><path d="M1211.0 789.1 L1216.0 785.1" fill="none" stroke="#111" stroke-width="1"/><text x="1160.0" y="777.1" font-family="Liberation Mono" font-size="4.6" fill="#3a3a3a" text-anchor="middle" >-W5</text><text x="1213.0" y="777.1" font-family="Liberation Mono" font-size="4.6" fill="#3a3a3a" text-anchor="middle" >-W5</text><text x="1178.0" y="785.1" font-family="Liberation Mono" font-size="4.5" fill="#e8405a" text-anchor="middle" >A1</text><text x="1196.0" y="785.1" font-family="Liberation Mono" font-size="4.5" fill="#e8405a" text-anchor="middle" >A2</text><text x="1158.0" y="785.1" font-family="Liberation Mono" font-size="4.5" fill="#e8405a" text-anchor="middle" >BN</text><text x="1212.0" y="785.1" font-family="Liberation Mono" font-size="4.5" fill="#e8405a" text-anchor="middle" >BU</text><path d="M1180.0 775.6 L1182.0 775.6" fill="none" stroke="#111" stroke-width="1.2"/><path d="M1192.0 775.6 L1194.0 775.6" fill="none" stroke="#111" stroke-width="1.2"/><circle cx="1080.2" cy="708.4" r="1.6" fill="#fff" stroke="#111" stroke-width="1"/><circle cx="1280.7" cy="708.4" r="1.6" fill="#fff" stroke="#111" stroke-width="1"/><text x="1081.0" y="705.4" font-family="Liberation Mono" font-size="4.5" fill="#e8405a" text-anchor="middle" >1</text><text x="1281.0" y="705.4" font-family="Liberation Mono" font-size="4.5" fill="#e8405a" text-anchor="middle" >5</text><circle cx="1080.2" cy="718.4" r="1.6" fill="#fff" stroke="#111" stroke-width="1"/><circle cx="1280.7" cy="718.4" r="1.6" fill="#fff" stroke="#111" stroke-width="1"/><text x="1081.0" y="715.4" font-family="Liberation Mono" font-size="4.5" fill="#e8405a" text-anchor="middle" >2</text><text x="1281.0" y="715.4" font-family="Liberation Mono" font-size="4.5" fill="#e8405a" text-anchor="middle" >6</text><circle cx="1080.2" cy="728.2" r="1.6" fill="#fff" stroke="#111" stroke-width="1"/><circle cx="1280.7" cy="728.2" r="1.6" fill="#fff" stroke="#111" stroke-width="1"/><text x="1081.0" y="725.2" font-family="Liberation Mono" font-size="4.5" fill="#e8405a" text-anchor="middle" >3</text><text x="1281.0" y="725.2" font-family="Liberation Mono" font-size="4.5" fill="#e8405a" text-anchor="middle" >7</text><circle cx="1080.2" cy="738.4" r="1.6" fill="#fff" stroke="#111" stroke-width="1"/><circle cx="1280.7" cy="738.4" r="1.6" fill="#fff" stroke="#111" stroke-width="1"/><text x="1081.0" y="735.4" font-family="Liberation Mono" font-size="4.5" fill="#e8405a" text-anchor="middle" >4</text><text x="1281.0" y="735.4" font-family="Liberation Mono" font-size="4.5" fill="#e8405a" text-anchor="middle" >8</text><text x="1080.0" y="702.0" font-family="Liberation Mono" font-size="5" fill="#3a3a3a" text-anchor="middle" >-X1.164</text><text x="1281.0" y="702.0" font-family="Liberation Mono" font-size="5" fill="#3a3a3a" text-anchor="middle" >-X1.163</text><rect x="1370.2" y="209.7" width="79.4" height="58.3" rx="8" fill="none" stroke="#444" stroke-width="1.1"/><rect x="1370.2" y="279.0" width="79.4" height="312.0" rx="8" fill="none" stroke="#444" stroke-width="1.1"/><rect x="1370.2" y="601.0" width="79.4" height="220.0" rx="8" fill="none" stroke="#444" stroke-width="1.1"/><rect x="1370.6" y="826.3" width="78.6" height="210.4" rx="9" fill="none" stroke="#333" stroke-width="1.2"/><g><path d="M1416 619 L1404 619 L1400 810 L1412 790 Z" fill="#f2cc2c"/><path d="M1405 619 V800 M1408 619 V795 M1411 619 V790 M1414 619 V785" stroke="#fff" stroke-width="0.6"/><path d="M1389.8 658 V616 Q1389.8 606 1400 606 H1420 Q1430 606 1430 616 V658 H1420.2 V619 H1399.6 V658 Z" fill="#14253f"/><path d="M1430 660 L1389.8 682 V694 L1430 718 V706 L1402 688 L1430 672 Z" fill="#14253f"/><path d="M1389.8 720 V761 Q1389.8 771 1400 771 H1420 Q1430 771 1430 761 V720 H1420.2 V758 H1399.6 V720 Z" fill="#14253f"/><text transform="translate(1401.7,814.6) rotate(-90) scale(1.2,1)" font-family="Liberation Sans" font-weight="bold" font-size="23.5" fill="#14253f">ws</text></g><text x="0.0" y="0.0" font-family="Liberation Mono" font-size="4.0" fill="#555" text-anchor="start" transform="translate(1364.5,962) rotate(-90)">C:\WSCAD\ELECTRIX2026\Projects\Demo Project_US\Beispiel USA_Plan.0001.wsELD</text><path d="M1370.6 836.3 L1449.2 836.3" fill="none" stroke="#333" stroke-width="1"/><path d="M1370.6 845.6 L1449.2 845.6" fill="none" stroke="#333" stroke-width="1"/><path d="M1370.6 855.4 L1449.2 855.4" fill="none" stroke="#333" stroke-width="1"/><path d="M1370.6 865.4 L1449.2 865.4" fill="none" stroke="#333" stroke-width="1"/><path d="M1370.6 875.2 L1449.2 875.2" fill="none" stroke="#333" stroke-width="1"/><path d="M1370.6 885.0 L1449.2 885.0" fill="none" stroke="#333" stroke-width="1"/><path d="M1370.6 894.4 L1449.2 894.4" fill="none" stroke="#333" stroke-width="1"/><path d="M1380.6 836.3 L1380.6 894.4" fill="none" stroke="#333" stroke-width="1"/><path d="M1395.6 836.3 L1395.6 894.4" fill="none" stroke="#333" stroke-width="1"/><path d="M1439.4 836.3 L1439.4 894.4" fill="none" stroke="#333" stroke-width="1"/><text x="1373.0" y="892.0" font-family="Liberation Mono" font-size="4" fill="#3a3a3a" text-anchor="start" >NO.</text><text x="1383.0" y="892.0" font-family="Liberation Mono" font-size="4" fill="#3a3a3a" text-anchor="start" >DATE</text><text x="1410.0" y="892.0" font-family="Liberation Mono" font-size="4" fill="#3a3a3a" text-anchor="start" >REVISION</text><text x="1441.0" y="892.0" font-family="Liberation Mono" font-size="4" fill="#3a3a3a" text-anchor="start" >BY</text><text x="1374.0" y="900.0" font-family="Liberation Mono" font-size="4" fill="#3a3a3a" text-anchor="start" >PROJECT TITLE</text><text x="1409.0" y="931.0" font-family="Liberation Mono" font-size="5.8" fill="#444" text-anchor="middle" >Demo project US</text><path d="M1370.6 958.1 L1449.2 958.1" fill="none" stroke="#333" stroke-width="1"/><path d="M1410.2 958.1 L1410.2 987.3" fill="none" stroke="#333" stroke-width="1"/><path d="M1370.6 968.3 L1449.2 968.3" fill="none" stroke="#333" stroke-width="1"/><path d="M1370.6 977.7 L1449.2 977.7" fill="none" stroke="#333" stroke-width="1"/><path d="M1370.6 987.3 L1449.2 987.3" fill="none" stroke="#333" stroke-width="1"/><path d="M1370.6 1012.0 L1449.2 1012.0" fill="none" stroke="#333" stroke-width="1"/><text x="1373.0" y="963.0" font-family="Liberation Mono" font-size="4" fill="#3a3a3a" text-anchor="start" >ENGINEER</text><text x="1412.0" y="963.0" font-family="Liberation Mono" font-size="4" fill="#3a3a3a" text-anchor="start" >CHECKED BY</text><text x="1373.0" y="972.0" font-family="Liberation Mono" font-size="4" fill="#3a3a3a" text-anchor="start" >JOB NO</text><text x="1412.0" y="972.0" font-family="Liberation Mono" font-size="4" fill="#3a3a3a" text-anchor="start" >DRAWN BY</text><text x="1373.0" y="982.0" font-family="Liberation Mono" font-size="4" fill="#3a3a3a" text-anchor="start" >SCALE</text><text x="1412.0" y="982.0" font-family="Liberation Mono" font-size="4" fill="#3a3a3a" text-anchor="start" >DATE</text><text x="1373.0" y="991.0" font-family="Liberation Mono" font-size="4" fill="#3a3a3a" text-anchor="start" >PROJECT NO</text><text x="1409.0" y="1005.0" font-family="Liberation Mono" font-size="5.8" fill="#444" text-anchor="middle" >Version 001</text><text x="1373.0" y="1016.0" font-family="Liberation Mono" font-size="4" fill="#3a3a3a" text-anchor="start" >SHEET NO</text><text x="1409.0" y="1030.0" font-family="Liberation Mono" font-size="6.5" fill="#444" text-anchor="middle" >1 &#160; OF &#160; 2</text></svg><div class="a" style="left:1580px;top:143px;width:336px;height:470px;background:#2b3540;"></div><div class="a" style="left:1580px;top:143px;width:336px;height:29px;background:#333d48;"></div><svg style="left:1585px;top:148px" width="20" height="20"><path d="M8 2 Q9 8 14 9 Q9 10 8 16 Q7 10 2 9 Q7 8 8 2 Z" fill="#f5c20a"/><path d="M15 11 Q15.5 14 18 14.5 Q15.5 15 15 18 Q14.5 15 12 14.5 Q14.5 14 15 11 Z" fill="#f5c20a"/><circle cx="16" cy="4" r="1.2" fill="#f5c20a"/></svg><div class="t" style="left:1616px;top:148.19px;font-size:11px;color:#eef0f2;">AI Copilot (beta)</div><svg style="left:1844px;top:151px" width="70" height="14" fill="none" stroke="#f0f2f4"><path d="M1 4 L6 9 L11 4" stroke-width="1.6"/><path d="M30 0 H36 M31 0 V7 M35 0 V7 M29 7 H37 M33 7 V13" stroke-width="1.3"/><path d="M54 1 L64 11 M64 1 L54 11" stroke-width="2"/></svg><div class="a" style="left:1794px;top:182px;width:99px;height:22px;background:#f7c600;border-radius:11px"></div><div class="t" style="left:1815px;top:185.46px;font-size:13.1px;color:#1b1b1b;">New topic</div><div class="a" style="left:1583px;top:211px;width:308px;height:295px;background:#19232f;"></div><div class="a" style="left:1891px;top:211px;width:19px;height:290px;background:#2f3a45;"></div><div class="a" style="left:1896px;top:428px;width:6px;height:50px;background:#7a8088;"></div><svg style="left:1893px;top:485px" width="12" height="8"><path d="M2 2 L6 6 L10 2" fill="none" stroke="#6a7480" stroke-width="1"/></svg><div class="a" style="left:1599px;top:211px;width:161px;height:282px;background:#2f3a45;border-radius:0 0 8px 8px"></div><div class="a" style="left:1599px;top:211px;width:161px;height:282px;overflow:hidden"><div class="t" style="left:19px;top:-8px;font-size:13px;color:#f4f5f6">&nbsp;&nbsp;&nbsp;&nbsp;&nbsp;Types of cables</div><div class="t" style="left:19px;top:6px;font-size:13px;color:#f4f5f6">7. <b>Nominal Current</b>:</div><div class="t" style="left:19px;top:20px;font-size:13px;color:#f4f5f6">Ensure that the</div><div class="t" style="left:19px;top:35px;font-size:13px;color:#f4f5f6">nominal current</div><div class="t" style="left:19px;top:50px;font-size:13px;color:#f4f5f6">ratings are</div><div class="t" style="left:19px;top:64px;font-size:13px;color:#f4f5f6">appropriate for the</div><div class="t" style="left:19px;top:79px;font-size:13px;color:#f4f5f6">application.</div><div class="t" style="left:19px;top:94px;font-size:13px;color:#f4f5f6">8. <b>Design Type</b>:</div><div class="t" style="left:19px;top:108px;font-size:13px;color:#f4f5f6">Confirm the design</div><div class="t" style="left:19px;top:123px;font-size:13px;color:#f4f5f6">type of the module.</div><div class="t" style="left:19px;top:152px;font-size:13px;color:#f4f5f6">These checks will</div><div class="t" style="left:19px;top:167px;font-size:13px;color:#f4f5f6">help ensure that the</div><div class="t" style="left:19px;top:182px;font-size:13px;color:#f4f5f6">integration of the</div><div class="t" style="left:19px;top:196px;font-size:13px;color:#f4f5f6">Siemens T11 line</div><div class="t" style="left:19px;top:211px;font-size:13px;color:#f4f5f6">module is successful</div><div class="t" style="left:19px;top:226px;font-size:13px;color:#f4f5f6">and meets the</div><div class="t" style="left:19px;top:240px;font-size:13px;color:#f4f5f6">necessary standards</div><div class="t" style="left:19px;top:255px;font-size:13px;color:#f4f5f6">and requirements.</div></div><svg style="left:1762px;top:473px" width="40" height="18" fill="none" stroke="#8a949e" stroke-width="1.1"><path d="M2 8 H5 V16 H2 Z M5 9 L9 3 Q11 3 10 8 H14 Q15 9 14 11 L13 15 Q12 16 10 16 H5"/><path d="M24 2 H27 V10 H24 Z M27 9 L31 15 Q33 15 32 10 H36 Q37 9 36 7 L35 3 Q34 2 32 2 H27"/></svg><div class="a" style="left:1588px;top:512px;width:319px;height:42px;background:#333e49;"></div><div class="a" style="left:1593px;top:517px;width:51px;height:32px;background:#3b4651;"></div><svg style="left:1600px;top:523px" width="20" height="20"><circle cx="10" cy="10" r="8" fill="none" stroke="#2a8fd0" stroke-width="2"/><path d="M4 7 H16 M4 13 H16 M10 2 V18" stroke="#2a8fd0" stroke-width="1.5"/></svg><svg style="left:1626px;top:530px" width="10" height="6"><path d="M1 1 L5 5 L9 1" fill="none" stroke="#56616c" stroke-width="1.5"/></svg><div class="t" style="left:1662px;top:524.60px;font-size:12.7px;color:#9aa4ae;"><i>Ask me something...</i></div><svg style="left:1866px;top:520px" width="24" height="24"><circle cx="12" cy="12" r="12" fill="#f7c600"/><path d="M12 6 L18 17 H6 Z" fill="none" stroke="#1b1b1b" stroke-width="1.8"/><path d="M12 10 V14" stroke="#1b1b1b" stroke-width="1.5"/></svg><div class="a" style="left:1583px;top:556px;width:330px;height:35px;background:#262f3a;"></div><div class="t" style="left:1590px;top:568.65px;font-size:12.55px;color:#8d98a3;"><i>As an AI, I can make mistakes. Please check the results.</i></div><div class="a" style="left:1580px;top:591px;width:336px;height:11px;background:#18212c;"></div><div class="a" style="left:1726px;top:596px;width:44px;height:3px;background:#46515c;border-radius:2px"></div><div class="a" style="left:1580px;top:602px;width:336px;height:450px;background:#2b3540;"></div><div class="a" style="left:1580px;top:602px;width:336px;height:28px;background:#323d48;"></div><div class="t" style="left:1590px;top:607.19px;font-size:11px;color:#eef0f2;">Macro Explorer</div><svg style="left:1844px;top:610px" width="70" height="14" fill="none" stroke="#f0f2f4"><path d="M1 4 L6 9 L11 4" stroke-width="1.6"/><path d="M30 0 H36 M31 0 V7 M35 0 V7 M29 7 H37 M33 7 V13" stroke-width="1.3"/><path d="M54 1 L64 11 M64 1 L54 11" stroke-width="2"/></svg><svg style="left:1596px;top:646px" width="10" height="8"><path d="M0 0 H9 L4.5 7 Z" fill="#f0f2f4"/></svg><svg style="left:1620px;top:641px" width="90" height="20" fill="none" stroke="#f0f2f4" stroke-width="1.2"><path d="M2 2 H9 L11 4 H17 V15 H2 Z M4 7 H15 M4 10 H15 M4 13 H15"/><path d="M19 6 V18 H7"/><path d="M47 4 A7 7 0 1 0 48 14"/><path d="M44 3 L50 3 L49 9 Z" fill="#f0f2f4"/><rect x="63" y="2" width="10" height="11"/><rect x="66" y="5" width="10" height="11"/><rect x="69" y="8" width="10" height="11" fill="#2b3540"/><path d="M71 13 H77"/></svg><div class="a" style="left:1709px;top:639px;width:1px;height:24px;background:#d0d4d8;"></div><div class="t" style="left:1719px;top:642.82px;font-size:11.5px;color:#eef0f2;">Filter:</div><div class="a" style="left:1754px;top:640px;width:158px;height:22px;background:#222c37;"></div><div class="a" style="left:1761px;top:643px;width:16px;height:16px;background:#f7c600;"></div><div class="t" style="left:1787px;top:642.99px;font-size:11px;color:#eef0f2;letter-spacing:-0.2px">Electrical Engineering</div><div class="a" style="left:1585px;top:670px;width:308px;height:354px;background:#2c3641;"></div><div class="a" style="left:1616px;top:670px;width:1px;height:350px;border-left:1px dotted #7d868f"></div><div class="a" style="left:1635px;top:670px;width:1px;height:50px;border-left:1px dotted #7d868f"></div><div class="a" style="left:1654px;top:725px;width:1px;height:55px;border-left:1px dotted #7d868f"></div><div class="a" style="left:1635px;top:825px;width:1px;height:175px;border-left:1px dotted #7d868f"></div><svg style="left:1630px;top:675px" width="10" height="10"><rect x="0" y="0" width="10" height="10" fill="#dfe2e5" /><rect x="0.5" y="0.5" width="9" height="9" fill="none" stroke="#a9aeb3" stroke-width="1"/><g stroke="#333c46" stroke-width="1.4"><path d="M2.5 5 H7.5"/><path d="M5 2.5 V7.5"/></g></svg><div class="a" style="left:1641px;top:680px;width:6px;height:1px;border-top:1px dotted #7d868f"></div><svg style="left:1646px;top:672px" width="16" height="16"><path d="M2 3 H6 L7 5 H14 V14 H2 Z M2 7 H14" fill="none" stroke="#f0f2f4" stroke-width="1.1"/></svg><div class="t" style="left:1667px;top:671.69px;font-size:11px;color:#eef0f2;letter-spacing:-0.28px">Exit 2-pole</div><svg style="left:1630px;top:695px" width="10" height="10"><rect x="0" y="0" width="10" height="10" fill="#dfe2e5" /><rect x="0.5" y="0.5" width="9" height="9" fill="none" stroke="#a9aeb3" stroke-width="1"/><g stroke="#333c46" stroke-width="1.4"><path d="M2.5 5 H7.5"/><path d="M5 2.5 V7.5"/></g></svg><div class="a" style="left:1641px;top:700px;width:6px;height:1px;border-top:1px dotted #7d868f"></div><svg style="left:1646px;top:692px" width="16" height="16"><path d="M2 3 H6 L7 5 H14 V14 H2 Z M2 7 H14" fill="none" stroke="#f0f2f4" stroke-width="1.1"/></svg><div class="t" style="left:1667px;top:691.69px;font-size:11px;color:#eef0f2;letter-spacing:-0.28px">Exit 3-pole</div><svg style="left:1630px;top:715px" width="10" height="10"><rect x="0" y="0" width="10" height="10" fill="#dfe2e5" /><rect x="0.5" y="0.5" width="9" height="9" fill="none" stroke="#a9aeb3" stroke-width="1"/><g stroke="#333c46" stroke-width="1.4"><path d="M2.5 5 H7.5"/></g></svg><div class="a" style="left:1641px;top:720px;width:6px;height:1px;border-top:1px dotted #7d868f"></div><div class="a" style="left:1665px;top:710px;width:36px;height:20px;background:#1a232e;"></div><svg style="left:1646px;top:712px" width="16" height="16"><path d="M2 3 H6 L7 5 H14 V14 H2 Z M2 7 H14" fill="none" stroke="#f0f2f4" stroke-width="1.1"/></svg><div class="t" style="left:1667px;top:711.69px;font-size:11px;color:#eef0f2;letter-spacing:-0.28px">Supply</div><svg style="left:1649px;top:735px" width="10" height="10"><rect x="0" y="0" width="10" height="10" fill="#dfe2e5" /><rect x="0.5" y="0.5" width="9" height="9" fill="none" stroke="#a9aeb3" stroke-width="1"/><g stroke="#333c46" stroke-width="1.4"><path d="M2.5 5 H7.5"/><path d="M5 2.5 V7.5"/></g></svg><div class="a" style="left:1660px;top:740px;width:6px;height:1px;border-top:1px dotted #7d868f"></div><svg style="left:1665px;top:732px" width="16" height="16"><path d="M2 3 H6 L7 5 H14 V14 H2 Z M2 7 H14" fill="none" stroke="#f0f2f4" stroke-width="1.1"/></svg><div class="t" style="left:1686px;top:731.69px;font-size:11px;color:#eef0f2;letter-spacing:-0.28px">TN-C</div><svg style="left:1649px;top:755px" width="10" height="10"><rect x="0" y="0" width="10" height="10" fill="#dfe2e5" /><rect x="0.5" y="0.5" width="9" height="9" fill="none" stroke="#a9aeb3" stroke-width="1"/><g stroke="#333c46" stroke-width="1.4"><path d="M2.5 5 H7.5"/><path d="M5 2.5 V7.5"/></g></svg><div class="a" style="left:1660px;top:760px;width:6px;height:1px;border-top:1px dotted #7d868f"></div><svg style="left:1665px;top:752px" width="16" height="16"><path d="M2 3 H6 L7 5 H14 V14 H2 Z M2 7 H14" fill="none" stroke="#f0f2f4" stroke-width="1.1"/></svg><div class="t" style="left:1686px;top:751.69px;font-size:11px;color:#eef0f2;letter-spacing:-0.28px">TN-S</div><svg style="left:1649px;top:775px" width="10" height="10"><rect x="0" y="0" width="10" height="10" fill="#dfe2e5" /><rect x="0.5" y="0.5" width="9" height="9" fill="none" stroke="#a9aeb3" stroke-width="1"/><g stroke="#333c46" stroke-width="1.4"><path d="M2.5 5 H7.5"/><path d="M5 2.5 V7.5"/></g></svg><div class="a" style="left:1660px;top:780px;width:6px;height:1px;border-top:1px dotted #7d868f"></div><svg style="left:1665px;top:772px" width="16" height="16"><path d="M2 3 H6 L7 5 H14 V14 H2 Z M2 7 H14" fill="none" stroke="#f0f2f4" stroke-width="1.1"/></svg><div class="t" style="left:1686px;top:771.69px;font-size:11px;color:#eef0f2;letter-spacing:-0.28px">TT</div><svg style="left:1611px;top:795px" width="10" height="10"><rect x="0" y="0" width="10" height="10" fill="#dfe2e5" /><rect x="0.5" y="0.5" width="9" height="9" fill="none" stroke="#a9aeb3" stroke-width="1"/><g stroke="#333c46" stroke-width="1.4"><path d="M2.5 5 H7.5"/><path d="M5 2.5 V7.5"/></g></svg><div class="a" style="left:1622px;top:800px;width:6px;height:1px;border-top:1px dotted #7d868f"></div><svg style="left:1627px;top:792px" width="16" height="16"><rect x="0" y="0" width="16" height="16" fill="#fff"/><path d="M1 9 L8 2 L15 9 H13 V15 H10 V11 H6 V15 H3 V9 Z" fill="#111"/></svg><div class="t" style="left:1648px;top:791.69px;font-size:11px;color:#eef0f2;letter-spacing:-0.28px">Equipment in residents</div><svg style="left:1611px;top:815px" width="10" height="10"><rect x="0" y="0" width="10" height="10" fill="#dfe2e5" /><rect x="0.5" y="0.5" width="9" height="9" fill="none" stroke="#a9aeb3" stroke-width="1"/><g stroke="#333c46" stroke-width="1.4"><path d="M2.5 5 H7.5"/></g></svg><div class="a" style="left:1622px;top:820px;width:6px;height:1px;border-top:1px dotted #7d868f"></div><svg style="left:1627px;top:812px" width="16" height="16"><rect x="0" y="0" width="16" height="16" fill="#f29a1e"/><text x="1" y="13" font-family="Liberation Sans" font-weight="bold" font-size="11" fill="#fff">EE</text></svg><div class="t" style="left:1648px;top:811.69px;font-size:11px;color:#eef0f2;letter-spacing:-0.28px">Motorcontrol</div><div class="a" style="left:1635px;top:840px;width:12px;height:1px;border-top:1px dotted #7d868f"></div><svg style="left:1646px;top:832px" width="16" height="16"><rect x="1" y="1" width="14" height="14" fill="none" stroke="#f0f2f4" stroke-width="1.3"/><path d="M4 4 H7 V7 H4 Z M4 9 H7 V12 H4 Z M9 4 H12 M9 7 H12 M9 10 H12 M9 12 H12 M7 5 V12" fill="none" stroke="#f0f2f4" stroke-width="1.1"/></svg><div class="t" style="left:1667px;top:831.69px;font-size:11px;color:#eef0f2;letter-spacing:-0.28px">Motor 3 pole star delta</div><div class="a" style="left:1635px;top:860px;width:12px;height:1px;border-top:1px dotted #7d868f"></div><svg style="left:1646px;top:852px" width="16" height="16"><rect x="1" y="1" width="14" height="14" fill="none" stroke="#f0f2f4" stroke-width="1.3"/><path d="M4 4 H7 V7 H4 Z M4 9 H7 V12 H4 Z M9 4 H12 M9 7 H12 M9 10 H12 M9 12 H12 M7 5 V12" fill="none" stroke="#f0f2f4" stroke-width="1.1"/></svg><div class="t" style="left:1667px;top:851.69px;font-size:11px;color:#eef0f2;letter-spacing:-0.28px">Motor 3 pole star delta thermistor</div><div class="a" style="left:1635px;top:880px;width:12px;height:1px;border-top:1px dotted #7d868f"></div><svg style="left:1646px;top:872px" width="16" height="16"><rect x="1" y="1" width="14" height="14" fill="none" stroke="#f0f2f4" stroke-width="1.3"/><path d="M4 4 H7 V7 H4 Z M4 9 H7 V12 H4 Z M9 4 H12 M9 7 H12 M9 10 H12 M9 12 H12 M7 5 V12" fill="none" stroke="#f0f2f4" stroke-width="1.1"/></svg><div class="t" style="left:1667px;top:871.69px;font-size:11px;color:#eef0f2;letter-spacing:-0.28px">Motor 3-pole Dahlander</div><div class="a" style="left:1635px;top:900px;width:12px;height:1px;border-top:1px dotted #7d868f"></div><svg style="left:1646px;top:892px" width="16" height="16"><rect x="1" y="1" width="14" height="14" fill="none" stroke="#f0f2f4" stroke-width="1.3"/><path d="M4 4 H7 V7 H4 Z M4 9 H7 V12 H4 Z M9 4 H12 M9 7 H12 M9 10 H12 M9 12 H12 M7 5 V12" fill="none" stroke="#f0f2f4" stroke-width="1.1"/></svg><div class="t" style="left:1667px;top:891.69px;font-size:11px;color:#eef0f2;letter-spacing:-0.28px">Motor 3-pole Dahlander PTC thermistor</div><div class="a" style="left:1635px;top:920px;width:12px;height:1px;border-top:1px dotted #7d868f"></div><svg style="left:1646px;top:912px" width="16" height="16"><rect x="1" y="1" width="14" height="14" fill="none" stroke="#f0f2f4" stroke-width="1.3"/><path d="M4 4 H7 V7 H4 Z M4 9 H7 V12 H4 Z M9 4 H12 M9 7 H12 M9 10 H12 M9 12 H12 M7 5 V12" fill="none" stroke="#f0f2f4" stroke-width="1.1"/></svg><div class="t" style="left:1667px;top:911.69px;font-size:11px;color:#eef0f2;letter-spacing:-0.28px">Motor 3-pole direct</div><div class="a" style="left:1635px;top:940px;width:12px;height:1px;border-top:1px dotted #7d868f"></div><svg style="left:1646px;top:932px" width="16" height="16"><rect x="1" y="1" width="14" height="14" fill="none" stroke="#f0f2f4" stroke-width="1.3"/><path d="M4 4 H7 V7 H4 Z M4 9 H7 V12 H4 Z M9 4 H12 M9 7 H12 M9 10 H12 M9 12 H12 M7 5 V12" fill="none" stroke="#f0f2f4" stroke-width="1.1"/></svg><div class="t" style="left:1667px;top:931.69px;font-size:11px;color:#eef0f2;letter-spacing:-0.28px">Motor 3-pole direct PTC thermistor</div><div class="a" style="left:1635px;top:960px;width:12px;height:1px;border-top:1px dotted #7d868f"></div><svg style="left:1646px;top:952px" width="16" height="16"><rect x="1" y="1" width="14" height="14" fill="none" stroke="#f0f2f4" stroke-width="1.3"/><path d="M4 4 H7 V7 H4 Z M4 9 H7 V12 H4 Z M9 4 H12 M9 7 H12 M9 10 H12 M9 12 H12 M7 5 V12" fill="none" stroke="#f0f2f4" stroke-width="1.1"/></svg><div class="t" style="left:1667px;top:951.69px;font-size:11px;color:#eef0f2;letter-spacing:-0.28px">Motor 3-pole direct thermal contact</div><div class="a" style="left:1635px;top:980px;width:12px;height:1px;border-top:1px dotted #7d868f"></div><svg style="left:1646px;top:972px" width="16" height="16"><rect x="1" y="1" width="14" height="14" fill="none" stroke="#f0f2f4" stroke-width="1.3"/><path d="M4 4 H7 V7 H4 Z M4 9 H7 V12 H4 Z M9 4 H12 M9 7 H12 M9 10 H12 M9 12 H12 M7 5 V12" fill="none" stroke="#f0f2f4" stroke-width="1.1"/></svg><div class="t" style="left:1667px;top:971.69px;font-size:11px;color:#eef0f2;letter-spacing:-0.28px">Motor 3-pole separate winding PTC thermistor</div><div class="a" style="left:1635px;top:1000px;width:12px;height:1px;border-top:1px dotted #7d868f"></div><svg style="left:1646px;top:992px" width="16" height="16"><rect x="1" y="1" width="14" height="14" fill="none" stroke="#f0f2f4" stroke-width="1.3"/><path d="M4 4 H7 V7 H4 Z M4 9 H7 V12 H4 Z M9 4 H12 M9 7 H12 M9 10 H12 M9 12 H12 M7 5 V12" fill="none" stroke="#f0f2f4" stroke-width="1.1"/></svg><div class="t" style="left:1667px;top:991.69px;font-size:11px;color:#eef0f2;letter-spacing:-0.28px">Motor 3-pole separate windings</div><svg style="left:1611px;top:1015px" width="10" height="10"><rect x="0" y="0" width="10" height="10" fill="#dfe2e5" /><rect x="0.5" y="0.5" width="9" height="9" fill="none" stroke="#a9aeb3" stroke-width="1"/><g stroke="#333c46" stroke-width="1.4"><path d="M2.5 5 H7.5"/><path d="M5 2.5 V7.5"/></g></svg><div class="a" style="left:1622px;top:1020px;width:6px;height:1px;border-top:1px dotted #7d868f"></div><svg style="left:1627px;top:1012px" width="16" height="16"><text x="0" y="12" font-family="Liberation Sans" font-weight="bold" font-size="10" fill="#d02020">PW</text></svg><div class="t" style="left:1648px;top:1011.69px;font-size:11px;color:#eef0f2;letter-spacing:-0.28px">ProjectWizard</div><div class="a" style="left:1893px;top:670px;width:17px;height:354px;background:#e9eaeb;"></div><div class="a" style="left:1901px;top:740px;width:3px;height:223px;background:#8a8f94;"></div><div class="a" style="left:1585px;top:1024px;width:325px;height:3px;background:#2b3540;"></div><div class="a" style="left:1580px;top:1027px;width:336px;height:24px;background:#18212c;"></div><div class="a" style="left:1583px;top:1028px;width:104px;height:22px;background:#2b3540;"></div><div class="a" style="left:1687px;top:1028px;width:105px;height:22px;background:#1f2934;"></div><div class="a" style="left:1792px;top:1028px;width:113px;height:22px;background:#2b3540;"></div><div class="t" style="left:1600px;top:1030.49px;font-size:11px;color:#eef0f2;">Symbol Explorer</div><div class="t" style="left:1710px;top:1030.49px;font-size:11px;color:#eef0f2;">Macro Explorer</div><div class="t" style="left:1815px;top:1030.49px;font-size:11px;color:#eef0f2;">Material Explorer</div><svg style="left:1586px;top:1031px" width="14" height="16" fill="none" stroke="#e8eaec" stroke-width="1.1"><path d="M2 1 H5 V14 H9 M5 9 H8"/><rect x="9" y="3" width="3" height="3"/><rect x="9" y="10" width="3" height="3"/></svg><svg style="left:1692px;top:1032px" width="16" height="16"><g fill="#e8eaec"><rect x="1" y="1" width="3" height="3"/><rect x="5" y="1" width="3" height="3"/><rect x="9" y="1" width="3" height="3"/><rect x="1" y="5" width="3" height="3"/><rect x="5" y="5" width="3" height="3"/><rect x="9" y="5" width="3" height="3"/><rect x="1" y="9" width="3" height="3"/><rect x="5" y="9" width="3" height="3"/></g></svg><svg style="left:1799px;top:1031px" width="14" height="16" fill="none" stroke="#e8eaec" stroke-width="1.1"><path d="M2 1 H5 V14 H9 M5 9 H8 M8 4 H12 M8 7 H12 M8 11 H12"/></svg><div class="a" style="left:0px;top:1052px;width:1920px;height:25px;background:#37414c;"></div><div class="a" style="left:0px;top:1077px;width:1920px;height:3px;background:#1f2730;"></div><div class="t" style="left:10px;top:1057.08px;font-size:11.3px;color:#eef0f2;">Ready</div><div class="a" style="left:106px;top:1055px;width:1px;height:20px;background:#2a333d;"></div><div class="a" style="left:1596px;top:1055px;width:1px;height:20px;background:#2a333d;"></div><div class="a" style="left:1697px;top:1055px;width:1px;height:20px;background:#2a333d;"></div><div class="a" style="left:1798px;top:1055px;width:1px;height:20px;background:#2a333d;"></div><div class="t" style="left:1601px;top:1057.08px;font-size:11.3px;color:#eef0f2;">49%</div><div class="t" style="left:1702px;top:1057.08px;font-size:11.3px;color:#eef0f2;">23,44/9,84 "</div><div class="t" style="left:1806px;top:1057.08px;font-size:11.3px;color:#eef0f2;">H &nbsp;US C &nbsp;1:1</div></body></html>
